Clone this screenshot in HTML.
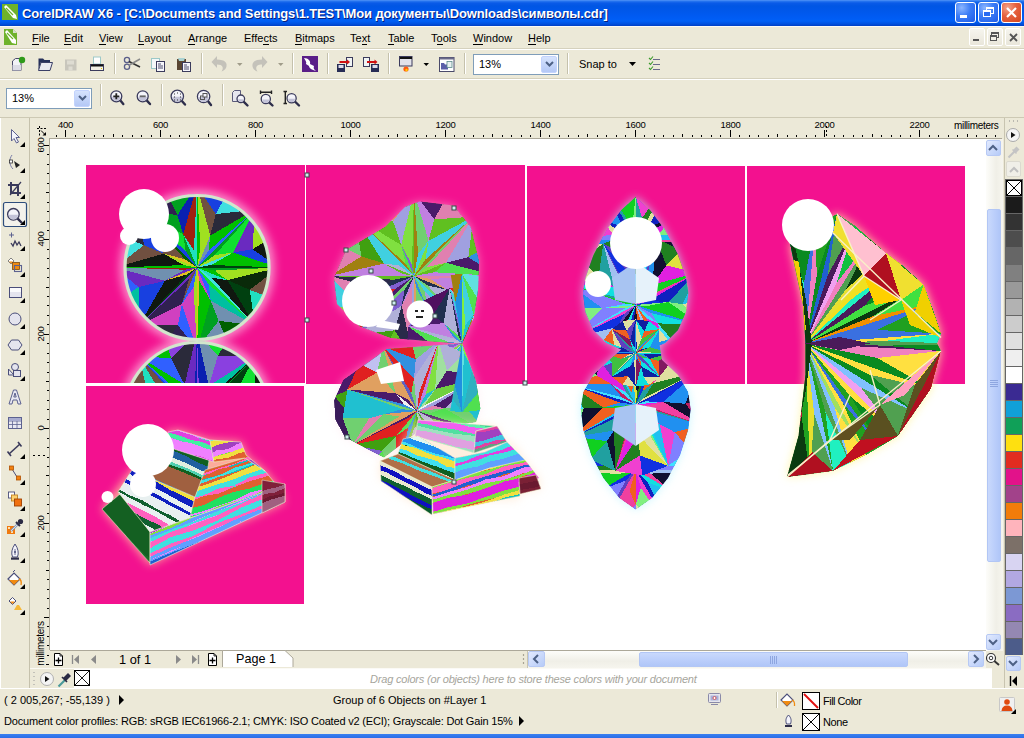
<!DOCTYPE html><html><head><meta charset="utf-8"><style>
html,body{margin:0;padding:0}
body{width:1024px;height:738px;overflow:hidden;position:relative;background:#ece9d8;font-family:"Liberation Sans", sans-serif;font-size:11px;color:#000}
div{box-sizing:border-box}
u{text-decoration:none;border-bottom:1px solid #000}
</style></head><body><div style="position:absolute;left:0px;top:0px;width:1024px;height:26px;background:linear-gradient(#5a9af8 0px,#2a78f0 1px,#0a5be8 3px,#0056e4 6px,#0058ec 12px,#005cf4 18px,#0060f6 21px,#0050de 24px,#003fc4 26px)"></div><svg style="position:absolute;left:2px;top:4px" width="16" height="16" viewBox="0 0 16 16">
<rect x="0" y="0" width="16" height="16" fill="#6fb22b"/>
<path d="M2 3 L4 1 L14 11 L15 15 L11 14 Z" fill="#fff"/>
<path d="M4 4 L11 11" stroke="#6fb22b" stroke-width="1.2"/>
</svg><div style="position:absolute;left:22px;top:6px;white-space:nowrap;font-weight:bold;font-size:13px;color:#fff;letter-spacing:-0.12px;text-shadow:1px 1px 0 #0a1e78;line-height:16px">CorelDRAW X6 - [C:\Documents and Settings\1.TEST\Мои документы\Downloads\символы.cdr]</div><div style="position:absolute;left:955px;top:2px;width:21px;height:21px;border:1px solid #fff;border-radius:3px;background:radial-gradient(circle at 30% 25%,#8cb6ff 0,#3b7cf6 45%,#1f5be8 100%)"></div><div style="position:absolute;left:960px;top:15px;width:7px;height:3px;background:#fff"></div><div style="position:absolute;left:978px;top:2px;width:21px;height:21px;border:1px solid #fff;border-radius:3px;background:radial-gradient(circle at 30% 25%,#8cb6ff 0,#3b7cf6 45%,#1f5be8 100%)"></div><div style="position:absolute;left:986px;top:7px;width:8px;height:7px;border:1px solid #fff;border-top-width:2px"></div><div style="position:absolute;left:983px;top:10px;width:8px;height:7px;border:1px solid #fff;border-top-width:2px;background:#2a6cf2"></div><div style="position:absolute;left:1001px;top:2px;width:21px;height:21px;border:1px solid #fff;border-radius:3px;background:radial-gradient(circle at 30% 25%,#f4a38a 0,#e5603e 45%,#d4471f 100%)"></div><svg style="position:absolute;left:1005px;top:6px" width="13" height="13"><path d="M2 2L11 11M11 2L2 11" stroke="#fff" stroke-width="2.2"/></svg><div style="position:absolute;left:0px;top:26px;width:1024px;height:1px;background:#fbfaf5"></div><svg style="position:absolute;left:4px;top:29px" width="13" height="16" viewBox="0 0 13 16">
<path d="M0 0H9L13 4V16H0Z" fill="#6fb22b"/><path d="M9 0V4H13" fill="#d6dfcc"/>
<path d="M1 3L3 1L12 11L12 15L8 14Z" fill="#fff"/><path d="M3 4L9 10" stroke="#6fb22b" stroke-width="1.1"/>
</svg><div style="position:absolute;left:32px;top:32px;white-space:nowrap;font-size:11px;line-height:13px"><u>F</u>ile</div><div style="position:absolute;left:64px;top:32px;white-space:nowrap;font-size:11px;line-height:13px"><u>E</u>dit</div><div style="position:absolute;left:99px;top:32px;white-space:nowrap;font-size:11px;line-height:13px"><u>V</u>iew</div><div style="position:absolute;left:138px;top:32px;white-space:nowrap;font-size:11px;line-height:13px"><u>L</u>ayout</div><div style="position:absolute;left:188px;top:32px;white-space:nowrap;font-size:11px;line-height:13px"><u>A</u>rrange</div><div style="position:absolute;left:244px;top:32px;white-space:nowrap;font-size:11px;line-height:13px">Effe<u>c</u>ts</div><div style="position:absolute;left:295px;top:32px;white-space:nowrap;font-size:11px;line-height:13px"><u>B</u>itmaps</div><div style="position:absolute;left:350px;top:32px;white-space:nowrap;font-size:11px;line-height:13px">Te<u>x</u>t</div><div style="position:absolute;left:388px;top:32px;white-space:nowrap;font-size:11px;line-height:13px"><u>T</u>able</div><div style="position:absolute;left:431px;top:32px;white-space:nowrap;font-size:11px;line-height:13px">T<u>o</u>ols</div><div style="position:absolute;left:473px;top:32px;white-space:nowrap;font-size:11px;line-height:13px"><u>W</u>indow</div><div style="position:absolute;left:528px;top:32px;white-space:nowrap;font-size:11px;line-height:13px"><u>H</u>elp</div><div style="position:absolute;left:969px;top:28px;width:16px;height:18px;border:1px solid #fff;border-radius:2px;background:linear-gradient(#f6f5ee,#e9e6da)"></div><div style="position:absolute;left:987px;top:28px;width:16px;height:18px;border:1px solid #fff;border-radius:2px;background:linear-gradient(#f6f5ee,#e9e6da)"></div><div style="position:absolute;left:1005px;top:28px;width:16px;height:18px;border:1px solid #fff;border-radius:2px;background:linear-gradient(#f6f5ee,#e9e6da)"></div><div style="position:absolute;left:973px;top:39px;width:6px;height:2px;background:#555"></div><div style="position:absolute;left:991px;top:32px;width:8px;height:6px;border:1px solid #555;border-top-width:2px"></div><div style="position:absolute;left:990px;top:35px;width:7px;height:6px;border:1px solid #555;border-top-width:2px;background:#efede4"></div><svg style="position:absolute;left:1009px;top:33px" width="9" height="9"><path d="M1 1L8 8M8 1L1 8" stroke="#555" stroke-width="1.8"/></svg><div style="position:absolute;left:0px;top:48px;width:1024px;height:1px;background:#d5d1bd"></div><div style="position:absolute;left:0px;top:49px;width:1024px;height:1px;background:#fff"></div><div style="position:absolute;left:114px;top:53px;width:1px;height:21px;background:#c5c1ac"></div><div style="position:absolute;left:115px;top:53px;width:1px;height:21px;background:#fff"></div><div style="position:absolute;left:201px;top:53px;width:1px;height:21px;background:#c5c1ac"></div><div style="position:absolute;left:202px;top:53px;width:1px;height:21px;background:#fff"></div><div style="position:absolute;left:292px;top:53px;width:1px;height:21px;background:#c5c1ac"></div><div style="position:absolute;left:293px;top:53px;width:1px;height:21px;background:#fff"></div><div style="position:absolute;left:327px;top:53px;width:1px;height:21px;background:#c5c1ac"></div><div style="position:absolute;left:328px;top:53px;width:1px;height:21px;background:#fff"></div><div style="position:absolute;left:388px;top:53px;width:1px;height:21px;background:#c5c1ac"></div><div style="position:absolute;left:389px;top:53px;width:1px;height:21px;background:#fff"></div><div style="position:absolute;left:464px;top:53px;width:1px;height:21px;background:#c5c1ac"></div><div style="position:absolute;left:465px;top:53px;width:1px;height:21px;background:#fff"></div><div style="position:absolute;left:567px;top:53px;width:1px;height:21px;background:#c5c1ac"></div><div style="position:absolute;left:568px;top:53px;width:1px;height:21px;background:#fff"></div><div style="position:absolute;left:0px;top:78px;width:1024px;height:1px;background:#d5d1bd"></div><div style="position:absolute;left:0px;top:79px;width:1024px;height:1px;background:#fff"></div><div style="position:absolute;left:100px;top:84px;width:1px;height:22px;background:#c5c1ac"></div><div style="position:absolute;left:101px;top:84px;width:1px;height:22px;background:#fff"></div><div style="position:absolute;left:161px;top:84px;width:1px;height:22px;background:#c5c1ac"></div><div style="position:absolute;left:162px;top:84px;width:1px;height:22px;background:#fff"></div><div style="position:absolute;left:222px;top:84px;width:1px;height:22px;background:#c5c1ac"></div><div style="position:absolute;left:223px;top:84px;width:1px;height:22px;background:#fff"></div><div style="position:absolute;left:0px;top:117px;width:1024px;height:1px;background:#cdc9b4"></div><div style="position:absolute;left:473px;top:54px;width:86px;height:21px;background:#fff;border:1px solid #7f9db9"></div><div style="position:absolute;left:541px;top:56px;width:16px;height:17px;border-radius:2px;background:linear-gradient(#d6e3fd,#b4c8f6);border:1px solid #c3d3fd"></div><svg style="position:absolute;left:545px;top:61px" width="9" height="6"><path d="M1 1L4.5 4.5L8 1" stroke="#4d6185" stroke-width="2" fill="none"/></svg><div style="position:absolute;left:479px;top:58px;white-space:nowrap;font-size:11px;line-height:13px">13%</div><div style="position:absolute;left:6px;top:88px;width:86px;height:21px;background:#fff;border:1px solid #7f9db9"></div><div style="position:absolute;left:74px;top:90px;width:16px;height:17px;border-radius:2px;background:linear-gradient(#d6e3fd,#b4c8f6);border:1px solid #c3d3fd"></div><svg style="position:absolute;left:78px;top:95px" width="9" height="6"><path d="M1 1L4.5 4.5L8 1" stroke="#4d6185" stroke-width="2" fill="none"/></svg><div style="position:absolute;left:12px;top:92px;white-space:nowrap;font-size:11px;line-height:13px">13%</div><div style="position:absolute;left:579px;top:58px;white-space:nowrap;font-size:11px;line-height:13px">Snap to</div><svg style="position:absolute;left:629px;top:62px" width="7" height="4"><path d="M0 0H7L3.5 4Z" fill="#000"/></svg><div style="position:absolute;left:0px;top:118px;width:1px;height:570px;background:#fff"></div><div style="position:absolute;left:29px;top:118px;width:1px;height:570px;background:#c5c1ac"></div><div style="position:absolute;left:50px;top:138px;width:952px;height:1px;background:#aca899"></div><div style="position:absolute;left:49px;top:138px;width:1px;height:512px;background:#aca899"></div><div style="position:absolute;left:50px;top:139px;width:936px;height:512px;background:#fff"></div><div style="position:absolute;left:45px;top:120px;white-space:nowrap;width:41px;text-align:center;font-size:9.5px;line-height:10px;letter-spacing:-0.3px">400</div><div style="position:absolute;left:140px;top:120px;white-space:nowrap;width:41px;text-align:center;font-size:9.5px;line-height:10px;letter-spacing:-0.3px">600</div><div style="position:absolute;left:235px;top:120px;white-space:nowrap;width:41px;text-align:center;font-size:9.5px;line-height:10px;letter-spacing:-0.3px">800</div><div style="position:absolute;left:330px;top:120px;white-space:nowrap;width:41px;text-align:center;font-size:9.5px;line-height:10px;letter-spacing:-0.3px">1000</div><div style="position:absolute;left:425px;top:120px;white-space:nowrap;width:41px;text-align:center;font-size:9.5px;line-height:10px;letter-spacing:-0.3px">1200</div><div style="position:absolute;left:520px;top:120px;white-space:nowrap;width:41px;text-align:center;font-size:9.5px;line-height:10px;letter-spacing:-0.3px">1400</div><div style="position:absolute;left:615px;top:120px;white-space:nowrap;width:41px;text-align:center;font-size:9.5px;line-height:10px;letter-spacing:-0.3px">1600</div><div style="position:absolute;left:710px;top:120px;white-space:nowrap;width:41px;text-align:center;font-size:9.5px;line-height:10px;letter-spacing:-0.3px">1800</div><div style="position:absolute;left:804px;top:120px;white-space:nowrap;width:41px;text-align:center;font-size:9.5px;line-height:10px;letter-spacing:-0.3px">2000</div><div style="position:absolute;left:899px;top:120px;white-space:nowrap;width:41px;text-align:center;font-size:9.5px;line-height:10px;letter-spacing:-0.3px">2200</div><div style="position:absolute;left:954px;top:120px;white-space:nowrap;font-size:10px;line-height:11px;letter-spacing:-0.3px">millimeters</div><div style="position:absolute;left:35px;top:125px;width:10px;height:41px;"><div style="position:absolute;left:-15px;top:15px;width:41px;height:10px;text-align:center;font-size:9.5px;line-height:10px;letter-spacing:-0.3px;transform:rotate(-90deg)">600</div></div><div style="position:absolute;left:35px;top:219px;width:10px;height:41px;"><div style="position:absolute;left:-15px;top:15px;width:41px;height:10px;text-align:center;font-size:9.5px;line-height:10px;letter-spacing:-0.3px;transform:rotate(-90deg)">400</div></div><div style="position:absolute;left:35px;top:314px;width:10px;height:41px;"><div style="position:absolute;left:-15px;top:15px;width:41px;height:10px;text-align:center;font-size:9.5px;line-height:10px;letter-spacing:-0.3px;transform:rotate(-90deg)">200</div></div><div style="position:absolute;left:35px;top:408px;width:10px;height:41px;"><div style="position:absolute;left:-15px;top:15px;width:41px;height:10px;text-align:center;font-size:9.5px;line-height:10px;letter-spacing:-0.3px;transform:rotate(-90deg)">0</div></div><div style="position:absolute;left:35px;top:503px;width:10px;height:41px;"><div style="position:absolute;left:-15px;top:15px;width:41px;height:10px;text-align:center;font-size:9.5px;line-height:10px;letter-spacing:-0.3px;transform:rotate(-90deg)">200</div></div><div style="position:absolute;left:35px;top:620px;width:10px;height:46px;"><div style="position:absolute;left:-18px;top:18px;width:46px;height:11px;text-align:center;font-size:10px;line-height:11px;letter-spacing:-0.3px;transform:rotate(-90deg)">millimeters</div></div><div style="position:absolute;left:986px;top:139px;width:17px;height:512px;background:linear-gradient(90deg,#fdfdfa,#f0efe7 60%,#f6f5ee)"></div><div style="position:absolute;left:986px;top:140px;width:15px;height:16px;border-radius:2px;border:1px solid #b7c9f4;background:linear-gradient(135deg,#e2eafe,#b6cbf8)"></div><svg style="position:absolute;left:987px;top:144px" width="12" height="8"><path d="M2 6 L6 2 L10 6" stroke="#4d6185" stroke-width="2" fill="none"/></svg><div style="position:absolute;left:986px;top:634px;width:15px;height:16px;border-radius:2px;border:1px solid #b7c9f4;background:linear-gradient(135deg,#e2eafe,#b6cbf8)"></div><svg style="position:absolute;left:987px;top:638px" width="12" height="8"><path d="M2 2 L6 6 L10 2" stroke="#4d6185" stroke-width="2" fill="none"/></svg><div style="position:absolute;left:987px;top:209px;width:14px;height:353px;border-radius:2px;border:1px solid #b2c6f5;background:linear-gradient(90deg,#c9d9fc,#bccffb 50%,#b0c6f8)"></div><svg style="position:absolute;left:990px;top:380px" width="8" height="8"><path d="M0 0.5H8M0 2.5H8M0 4.5H8M0 6.5H8" stroke="#8ea6e0" stroke-width="1"/></svg><div style="position:absolute;left:1003px;top:118px;width:21px;height:570px;background:#ece9d8"></div><div style="position:absolute;left:1004px;top:118px;width:1px;height:570px;background:#c8c4b0"></div><div style="position:absolute;left:1005px;top:179px;width:18px;height:476px;background:#666"></div><div style="position:absolute;left:1006px;top:180px;width:16px;height:16px;background:#fff;border:1px solid #000"></div><svg style="position:absolute;left:1006px;top:180px" width="16" height="16"><path d="M1 1L15 15M15 1L1 15" stroke="#000" stroke-width="1"/></svg><div style="position:absolute;left:1006px;top:197px;width:16px;height:16px;background:#1b1b1b"></div><div style="position:absolute;left:1006px;top:214px;width:16px;height:16px;background:#333333"></div><div style="position:absolute;left:1006px;top:231px;width:16px;height:16px;background:#4d4d4d"></div><div style="position:absolute;left:1006px;top:248px;width:16px;height:16px;background:#666666"></div><div style="position:absolute;left:1006px;top:265px;width:16px;height:16px;background:#808080"></div><div style="position:absolute;left:1006px;top:282px;width:16px;height:16px;background:#999999"></div><div style="position:absolute;left:1006px;top:299px;width:16px;height:16px;background:#b2b2b2"></div><div style="position:absolute;left:1006px;top:316px;width:16px;height:16px;background:#cccccc"></div><div style="position:absolute;left:1006px;top:333px;width:16px;height:16px;background:#e0e0e0"></div><div style="position:absolute;left:1006px;top:350px;width:16px;height:16px;background:#efefef"></div><div style="position:absolute;left:1006px;top:367px;width:16px;height:16px;background:#ffffff"></div><div style="position:absolute;left:1006px;top:384px;width:16px;height:16px;background:#3a2a92"></div><div style="position:absolute;left:1006px;top:401px;width:16px;height:16px;background:#10a0d8"></div><div style="position:absolute;left:1006px;top:418px;width:16px;height:16px;background:#10a058"></div><div style="position:absolute;left:1006px;top:435px;width:16px;height:16px;background:#fee010"></div><div style="position:absolute;left:1006px;top:452px;width:16px;height:16px;background:#e22c20"></div><div style="position:absolute;left:1006px;top:469px;width:16px;height:16px;background:#e2128a"></div><div style="position:absolute;left:1006px;top:486px;width:16px;height:16px;background:#a2428a"></div><div style="position:absolute;left:1006px;top:503px;width:16px;height:16px;background:#f27c0a"></div><div style="position:absolute;left:1006px;top:520px;width:16px;height:16px;background:#ffb4bc"></div><div style="position:absolute;left:1006px;top:537px;width:16px;height:16px;background:#7c7068"></div><div style="position:absolute;left:1006px;top:554px;width:16px;height:16px;background:#d8d4f2"></div><div style="position:absolute;left:1006px;top:571px;width:16px;height:16px;background:#b2a8e2"></div><div style="position:absolute;left:1006px;top:588px;width:16px;height:16px;background:#7c98d4"></div><div style="position:absolute;left:1006px;top:605px;width:16px;height:16px;background:#8a6cc2"></div><div style="position:absolute;left:1006px;top:622px;width:16px;height:16px;background:#9488b2"></div><div style="position:absolute;left:1006px;top:639px;width:16px;height:16px;background:#4c5c8a"></div><div style="position:absolute;left:1006px;top:161px;width:15px;height:16px;border-radius:2px;border:1px solid #dcdad0;background:#f0efe8"></div><svg style="position:absolute;left:1008px;top:166px" width="12" height="8"><path d="M2 6 L6 2 L10 6" stroke="#c0c0c0" stroke-width="2" fill="none"/></svg><div style="position:absolute;left:1006px;top:656px;width:15px;height:15px;border-radius:2px;border:1px solid #b7c9f4;background:linear-gradient(135deg,#e2eafe,#b6cbf8)"></div><svg style="position:absolute;left:1007px;top:659px" width="12" height="8"><path d="M2 2 L6 6 L10 2" stroke="#4d6185" stroke-width="2" fill="none"/></svg><svg style="position:absolute;left:1008px;top:120px" width="12" height="3"><path d="M1 1h1M5 1h1M9 1h1" stroke="#888" stroke-width="1"/></svg><svg style="position:absolute;left:1005px;top:128px" width="16" height="14"><circle cx="8" cy="7" r="6.5" fill="#f4f4f4" stroke="#aaa"/><path d="M6 4 L10.5 7 L6 10Z" fill="#111"/></svg><svg style="position:absolute;left:1007px;top:145px" width="14" height="14"><path d="M1.5 12.5 L8 6" stroke="#c4c4c4" stroke-width="2.2"/><path d="M6 5 L9.5 1.5 L12.5 4.5 L9 8Z" fill="#c4c4c4"/><path d="M5.5 4.5 L9.5 8.5" stroke="#c4c4c4" stroke-width="1.5"/></svg><div style="position:absolute;left:50px;top:650px;width:936px;height:1px;background:#aca899"></div><div style="position:absolute;left:50px;top:651px;width:936px;height:17px;background:#ece9d8"></div><div style="position:absolute;left:30px;top:668px;width:973px;height:20px;background:#fff"></div><div style="position:absolute;left:30px;top:668px;width:973px;height:1px;background:#fbfaf5"></div><div style="position:absolute;left:30px;top:669px;width:44px;height:19px;background:#ece9d8"></div><div style="position:absolute;left:992px;top:668px;width:11px;height:20px;background:#ece9d8"></div><div style="position:absolute;left:0px;top:688px;width:1024px;height:1px;background:#fff"></div><div style="position:absolute;left:119px;top:652px;white-space:nowrap;font-size:12.8px;line-height:15px">1 of 1</div><svg style="position:absolute;left:222px;top:650px" width="72" height="17"><path d="M0.5 17 V0.5 H63 L71 8 V17" fill="#fff" stroke="#aca899"/></svg><div style="position:absolute;left:236px;top:652px;white-space:nowrap;font-size:12.6px;line-height:15px">Page 1</div><div style="position:absolute;left:528px;top:651px;width:458px;height:17px;background:linear-gradient(#fdfdfa,#f0efe7 60%,#f6f5ee)"></div><div style="position:absolute;left:527px;top:651px;width:1px;height:17px;background:#c8c4b0"></div><svg style="position:absolute;left:522px;top:652px" width="3" height="14"><path d="M1.5 2v2M1.5 6v2M1.5 10v2" stroke="#a8a494" stroke-width="1.2"/></svg><div style="position:absolute;left:528px;top:651px;width:17px;height:16px;border-radius:2px;border:1px solid #b7c9f4;background:linear-gradient(135deg,#e2eafe,#b6cbf8)"></div><svg style="position:absolute;left:532px;top:653px" width="8" height="12"><path d="M6 2 L2 6 L6 10" stroke="#4d6185" stroke-width="2" fill="none"/></svg><div style="position:absolute;left:968px;top:651px;width:16px;height:16px;border-radius:2px;border:1px solid #b7c9f4;background:linear-gradient(135deg,#e2eafe,#b6cbf8)"></div><svg style="position:absolute;left:972px;top:653px" width="8" height="12"><path d="M2 2 L6 6 L2 10" stroke="#4d6185" stroke-width="2" fill="none"/></svg><div style="position:absolute;left:639px;top:652px;width:269px;height:15px;border-radius:2px;border:1px solid #b2c6f5;background:linear-gradient(#c9d9fc,#bccffb 50%,#b0c6f8)"></div><svg style="position:absolute;left:770px;top:656px" width="8" height="8"><path d="M0.5 0V8M2.5 0V8M4.5 0V8M6.5 0V8" stroke="#8ea6e0" stroke-width="1"/></svg><div style="position:absolute;left:370px;top:673px;white-space:nowrap;font-style:italic;color:#a6a59c;font-size:11px;line-height:13px;letter-spacing:-0.19px">Drag colors (or objects) here to store these colors with your document</div><div style="position:absolute;left:4px;top:694px;white-space:nowrap;font-size:11px;line-height:13px">( 2 005,267; -55,139 )</div><svg style="position:absolute;left:119px;top:695px" width="6" height="10"><path d="M0 0L5 5L0 10Z" fill="#000"/></svg><div style="position:absolute;left:4px;top:715px;white-space:nowrap;font-size:11px;line-height:13px;letter-spacing:-0.185px">Document color profiles: RGB: sRGB IEC61966-2.1; CMYK: ISO Coated v2 (ECI); Grayscale: Dot Gain 15%</div><svg style="position:absolute;left:519px;top:716px" width="6" height="10"><path d="M0 0L5 5L0 10Z" fill="#000"/></svg><div style="position:absolute;left:333px;top:694px;white-space:nowrap;font-size:11px;line-height:13px">Group of 6 Objects on #Layer 1</div><div style="position:absolute;left:823px;top:695px;white-space:nowrap;font-size:11px;line-height:13px;letter-spacing:-0.5px">Fill Color</div><div style="position:absolute;left:823px;top:716px;white-space:nowrap;font-size:11px;line-height:13px;letter-spacing:-0.4px">None</div><div style="position:absolute;left:802px;top:692px;width:18px;height:18px;background:#fff;border:1px solid #000"></div><svg style="position:absolute;left:802px;top:692px" width="18" height="18"><path d="M2 2L16 16" stroke="#e01010" stroke-width="2"/></svg><div style="position:absolute;left:802px;top:713px;width:18px;height:18px;background:#fff;border:1px solid #000"></div><svg style="position:absolute;left:802px;top:713px" width="18" height="18"><path d="M1 1L17 17M17 1L1 17" stroke="#000" stroke-width="1"/></svg><div style="position:absolute;left:776px;top:692px;width:1px;height:16px;background:#c5c1ac"></div><div style="position:absolute;left:777px;top:692px;width:1px;height:16px;background:#fff"></div><div style="position:absolute;left:0px;top:734px;width:1024px;height:4px;background:linear-gradient(#3a80f0,#2a6ee8)"></div><svg style="position:absolute;left:0;top:0" width="1024" height="738"><svg x="50" y="138" width="936" height="512" viewBox="50 138 936 512"><defs><filter id="gl" x="-30%" y="-30%" width="160%" height="160%"><feGaussianBlur stdDeviation="5"/></filter><filter id="gl2" x="-30%" y="-30%" width="160%" height="160%"><feGaussianBlur stdDeviation="4"/></filter><clipPath id="r1"><rect x="86" y="165" width="219" height="218"/></clipPath><clipPath id="c1"><path d="M124 267.5 A73 73 0 1 0 270 267.5 A73 73 0 1 0 124 267.5Z"/></clipPath><clipPath id="c1b"><path d="M124 414.5 A73 73 0 1 0 270 414.5 A73 73 0 1 0 124 414.5Z"/></clipPath><clipPath id="h1"><path d="M334.0 278.0 L346.0 250.0 L385.0 227.0 L405.0 207.0 L419.5 201.5 L453.6 205.6 L470.7 227.0 L479.0 261.0 L478.0 290.0 L473.5 318.0 L462.0 343.5 L440.0 342.0 L391.0 338.0 L360.0 326.5 L337.0 304.0Z"/></clipPath><clipPath id="h2"><path d="M462.0 343.5 L387.0 349.0 L343.4 380.0 L334.0 400.5 L335.2 419.5 L344.7 437.0 L367.8 449.3 L384.0 457.4 L420.0 430.0 L476.0 422.0 L480.3 408.6 L476.0 381.5Z"/></clipPath><clipPath id="h3"><path d="M445.0 240.0 L471.0 227.0 L479.0 261.0 L478.0 290.0 L473.5 318.0 L462.0 343.5ZM462.0 343.5 L476.0 381.5 L480.3 408.6 L476.0 425.0 L445.0 440.0Z"/></clipPath><clipPath id="d1"><path d="M635.7 197.0 L650.0 210.0 L665.0 230.0 L678.0 255.0 L686.0 278.0 L688.4 293.0 L686.0 312.0 L678.0 330.0 L665.0 343.0 L650.0 349.5 L621.4 349.5 L606.4 343.0 L593.4 330.0 L585.4 312.0 L583.0 293.0 L585.4 278.0 L593.4 255.0 L606.4 230.0 L621.4 210.0 L635.7 197.0Z"/></clipPath><clipPath id="d2"><path d="M650.0 349.5 L662.0 360.0 L678.0 375.0 L688.0 392.0 L690.6 409.0 L688.0 430.0 L680.0 455.0 L668.0 478.0 L652.0 498.0 L635.7 509.5 L635.7 509.5 L619.4 498.0 L603.4 478.0 L591.4 455.0 L583.4 430.0 L580.8 409.0 L583.4 392.0 L593.4 375.0 L609.4 360.0 L621.4 349.5Z"/></clipPath><clipPath id="d3"><path d="M635.7 197.0 L650.0 210.0 L665.0 230.0 L678.0 255.0 L686.0 278.0 L688.4 293.0 L686.0 312.0 L678.0 330.0 L665.0 343.0 L650.0 349.5 L621.4 349.5 L606.4 343.0 L593.4 330.0 L585.4 312.0 L583.0 293.0 L585.4 278.0 L593.4 255.0 L606.4 230.0 L621.4 210.0 L635.7 197.0 L662.0 360.0 L678.0 375.0 L688.0 392.0 L690.6 409.0 L688.0 430.0 L680.0 455.0 L668.0 478.0 L652.0 498.0 L635.7 509.5 L635.7 509.5 L619.4 498.0 L603.4 478.0 L591.4 455.0 L583.4 430.0 L580.8 409.0 L583.4 392.0 L593.4 375.0 L609.4 360.0 L621.4 349.5Z"/></clipPath><clipPath id="fanclip"><path d="M790.0 244.0 L837.0 213.8 L854.7 225.5 L886.0 253.0 L901.9 264.9 L923.5 284.5 L931.0 304.0 L941.0 333.6 L937.0 343.5 L941.0 351.0 L931.0 388.7 L898.0 436.0 L866.0 455.0 L833.0 471.0 L787.0 477.0 L798.5 435.7 L805.5 375.0 L805.5 343.5 L803.0 304.7 L796.0 272.0Z"/></clipPath><clipPath id="sf201"><path d="M102.0 509.0 L125.0 490.0 L150.0 532.0 L150.0 563.0Z"/></clipPath><clipPath id="sf202"><path d="M118.0 492.0 L132.0 470.0 L195.0 497.0 L190.0 518.0 L150.0 532.0Z"/></clipPath><clipPath id="sf203"><path d="M150.0 532.0 L190.0 518.0 L285.0 484.0 L285.0 502.0 L150.0 565.0Z"/></clipPath><clipPath id="sf204"><path d="M132.0 470.0 L168.0 440.0 L210.0 452.0 L205.0 490.0 L195.0 497.0Z"/></clipPath><clipPath id="sf205"><path d="M195.0 497.0 L205.0 470.0 L245.0 458.0 L265.0 471.0 L278.0 487.0 L190.0 518.0Z"/></clipPath><clipPath id="sf206"><path d="M168.0 432.0 L178.0 430.0 L210.0 440.0 L214.0 462.0 L168.0 447.0Z"/></clipPath><clipPath id="sf207"><path d="M210.0 440.0 L241.0 442.0 L246.0 455.0 L265.0 471.0 L245.0 458.0 L214.0 462.0Z"/></clipPath><clipPath id="sf208"><path d="M262.0 480.0 L285.0 484.0 L285.0 502.0 L262.0 513.0Z"/></clipPath><clipPath id="sf301"><path d="M418.0 420.0 L495.0 426.0 L476.0 431.0 L474.0 453.0 L415.0 436.0Z"/></clipPath><clipPath id="sf302"><path d="M476.0 431.0 L497.0 426.0 L507.0 442.0 L474.0 453.0Z"/></clipPath><clipPath id="sf303"><path d="M403.0 439.0 L418.0 436.0 L455.0 458.0 L455.0 480.0 L398.0 454.0Z"/></clipPath><clipPath id="sf304"><path d="M455.0 458.0 L485.0 452.0 L507.0 442.0 L525.0 460.0 L500.0 470.0 L490.0 468.0 L455.0 480.0Z"/></clipPath><clipPath id="sf305"><path d="M380.0 461.0 L398.0 454.0 L455.0 480.0 L432.0 487.0Z"/></clipPath><clipPath id="sf306"><path d="M380.0 461.0 L432.0 487.0 L432.0 515.0 L381.0 481.0Z"/></clipPath><clipPath id="sf307"><path d="M432.0 487.0 L455.0 480.0 L490.0 468.0 L525.0 460.0 L539.0 478.0 L519.0 482.0 L520.0 496.0 L433.0 514.0Z"/></clipPath><clipPath id="sf308"><path d="M519.0 478.0 L536.0 475.0 L541.0 489.0 L520.0 494.0Z"/></clipPath></defs><rect x="86" y="165" width="219" height="218" fill="#f3118f"/><rect x="306" y="165" width="219" height="219" fill="#f3118f"/><rect x="527" y="166" width="218" height="218" fill="#f3118f"/><rect x="747" y="166" width="218" height="218" fill="#f3118f"/><rect x="86" y="386" width="218" height="218" fill="#f3118f"/><g clip-path="url(#r1)"><circle cx="197" cy="267.5" r="77" fill="#fff" opacity="0.55" filter="url(#gl)"/><circle cx="197" cy="414.5" r="77" fill="#fff" opacity="0.55" filter="url(#gl)"/><g clip-path="url(#c1)" shape-rendering="crispEdges"><path d="M124 267.5 A73 73 0 1 0 270 267.5 A73 73 0 1 0 124 267.5Z" fill="#0a3a0a"/><polygon points="197.0,267.5 278.8,267.5 214.3,270.6" fill="#00a020"/><polygon points="214.3,270.6 278.8,267.5 227.4,280.1" fill="#a0e020"/><polygon points="197.0,267.5 214.3,270.6 227.4,280.1" fill="#00c000"/><polygon points="197.0,267.5 227.4,280.1 211.6,277.7" fill="#20e0c0"/><polygon points="211.6,277.7 227.4,280.1 254.8,325.3" fill="#101810"/><polygon points="197.0,267.5 211.6,277.7 254.8,325.3" fill="#40e0e0"/><polygon points="278.8,267.5 227.4,280.1 249.7,289.8" fill="#0a2a0a"/><polygon points="227.4,280.1 254.8,325.3 249.7,289.8" fill="#004010"/><polygon points="278.8,267.5 249.7,289.8 274.6,299.6" fill="#705040"/><polygon points="249.7,289.8 254.8,325.3 274.6,299.6" fill="#20e0c0"/><polygon points="197.0,267.5 254.8,325.3 208.6,284.2" fill="#10e030"/><polygon points="208.6,284.2 254.8,325.3 210.7,300.6" fill="#00c0a0"/><polygon points="197.0,267.5 208.6,284.2 210.7,300.6" fill="#3060ff"/><polygon points="197.0,267.5 210.7,300.6 199.4,280.8" fill="#d040c0"/><polygon points="199.4,280.8 210.7,300.6 197.0,349.3" fill="#00c000"/><polygon points="197.0,267.5 199.4,280.8 197.0,349.3" fill="#e0c020"/><polygon points="254.8,325.3 210.7,300.6 218.6,320.8" fill="#7090b0"/><polygon points="210.7,300.6 197.0,349.3 218.6,320.8" fill="#00a020"/><polygon points="254.8,325.3 218.6,320.8 229.1,345.1" fill="#006000"/><polygon points="218.6,320.8 197.0,349.3 229.1,345.1" fill="#7090b0"/><polygon points="197.0,267.5 197.0,349.3 193.5,287.2" fill="#a0e020"/><polygon points="193.5,287.2 197.0,349.3 181.8,304.2" fill="#d040c0"/><polygon points="197.0,267.5 193.5,287.2 181.8,304.2" fill="#3060ff"/><polygon points="197.0,267.5 181.8,304.2 189.1,278.9" fill="#705040"/><polygon points="189.1,278.9 181.8,304.2 139.2,325.3" fill="#302050"/><polygon points="197.0,267.5 189.1,278.9 139.2,325.3" fill="#6a2ac0"/><polygon points="197.0,349.3 181.8,304.2 177.9,325.3" fill="#3060ff"/><polygon points="181.8,304.2 139.2,325.3 177.9,325.3" fill="#d040c0"/><polygon points="197.0,349.3 177.9,325.3 164.9,345.1" fill="#302050"/><polygon points="177.9,325.3 139.2,325.3 164.9,345.1" fill="#2a2a3a"/><polygon points="197.0,267.5 139.2,325.3 187.1,274.4" fill="#004010"/><polygon points="187.1,274.4 139.2,325.3 164.8,280.8" fill="#101810"/><polygon points="197.0,267.5 187.1,274.4 164.8,280.8" fill="#e0c020"/><polygon points="197.0,267.5 164.8,280.8 184.8,269.7" fill="#6a2ac0"/><polygon points="184.8,269.7 164.8,280.8 115.2,267.5" fill="#7090b0"/><polygon points="197.0,267.5 184.8,269.7 115.2,267.5" fill="#a02010"/><polygon points="139.2,325.3 164.8,280.8 138.5,287.1" fill="#1840e0"/><polygon points="164.8,280.8 115.2,267.5 138.5,287.1" fill="#6a2ac0"/><polygon points="139.2,325.3 138.5,287.1 119.4,299.6" fill="#00c0a0"/><polygon points="138.5,287.1 115.2,267.5 119.4,299.6" fill="#3060ff"/><polygon points="197.0,267.5 115.2,267.5 183.7,265.1" fill="#00c000"/><polygon points="183.7,265.1 115.2,267.5 163.6,253.7" fill="#101810"/><polygon points="197.0,267.5 183.7,265.1 163.6,253.7" fill="#a0e020"/><polygon points="197.0,267.5 163.6,253.7 185.0,259.2" fill="#e0c020"/><polygon points="185.0,259.2 163.6,253.7 139.2,209.7" fill="#705040"/><polygon points="197.0,267.5 185.0,259.2 139.2,209.7" fill="#006000"/><polygon points="115.2,267.5 163.6,253.7 143.9,245.2" fill="#705040"/><polygon points="163.6,253.7 139.2,209.7 143.9,245.2" fill="#1840e0"/><polygon points="115.2,267.5 143.9,245.2 119.4,235.4" fill="#40e0e0"/><polygon points="143.9,245.2 139.2,209.7 119.4,235.4" fill="#2a2a3a"/><polygon points="197.0,267.5 139.2,209.7 185.6,251.0" fill="#1840e0"/><polygon points="185.6,251.0 139.2,209.7 183.2,234.2" fill="#10e030"/><polygon points="197.0,267.5 185.6,251.0 183.2,234.2" fill="#00a020"/><polygon points="197.0,267.5 183.2,234.2 193.9,250.5" fill="#20e0c0"/><polygon points="193.9,250.5 183.2,234.2 197.0,185.7" fill="#a02010"/><polygon points="197.0,267.5 193.9,250.5 197.0,185.7" fill="#20e0c0"/><polygon points="139.2,209.7 183.2,234.2 177.4,215.2" fill="#00a020"/><polygon points="183.2,234.2 197.0,185.7 177.4,215.2" fill="#0a20b0"/><polygon points="139.2,209.7 177.4,215.2 164.9,189.9" fill="#302050"/><polygon points="177.4,215.2 197.0,185.7 164.9,189.9" fill="#00a020"/><polygon points="197.0,267.5 197.0,185.7 200.4,248.4" fill="#00c000"/><polygon points="200.4,248.4 197.0,185.7 210.2,235.6" fill="#a0e020"/><polygon points="197.0,267.5 200.4,248.4 210.2,235.6" fill="#a0e020"/><polygon points="197.0,267.5 210.2,235.6 208.7,250.7" fill="#7090b0"/><polygon points="208.7,250.7 210.2,235.6 254.8,209.7" fill="#00c000"/><polygon points="197.0,267.5 208.7,250.7 254.8,209.7" fill="#3060ff"/><polygon points="197.0,185.7 210.2,235.6 215.7,214.1" fill="#705040"/><polygon points="210.2,235.6 254.8,209.7 215.7,214.1" fill="#2a2a3a"/><polygon points="197.0,185.7 215.7,214.1 229.1,189.9" fill="#1840e0"/><polygon points="215.7,214.1 254.8,209.7 229.1,189.9" fill="#40e0e0"/><polygon points="197.0,267.5 254.8,209.7 215.0,255.0" fill="#00a020"/><polygon points="215.0,255.0 254.8,209.7 233.0,252.6" fill="#10e030"/><polygon points="197.0,267.5 215.0,255.0 233.0,252.6" fill="#a0e020"/><polygon points="197.0,267.5 233.0,252.6 211.1,265.0" fill="#40e0e0"/><polygon points="211.1,265.0 233.0,252.6 278.8,267.5" fill="#00c000"/><polygon points="197.0,267.5 211.1,265.0 278.8,267.5" fill="#004010"/><polygon points="254.8,209.7 233.0,252.6 252.6,249.3" fill="#6a2ac0"/><polygon points="233.0,252.6 278.8,267.5 252.6,249.3" fill="#1840e0"/><polygon points="254.8,209.7 252.6,249.3 274.6,235.4" fill="#a0e020"/><polygon points="252.6,249.3 278.8,267.5 274.6,235.4" fill="#101810"/></g><g clip-path="url(#c1b)" shape-rendering="crispEdges"><path d="M124 414.5 A73 73 0 1 0 270 414.5 A73 73 0 1 0 124 414.5Z" fill="#0a3a0a"/><polygon points="197.0,414.5 278.8,414.5 217.9,418.3" fill="#00c0a0"/><polygon points="217.9,418.3 278.8,414.5 230.8,428.5" fill="#00c000"/><polygon points="197.0,414.5 217.9,418.3 230.8,428.5" fill="#8a40e0"/><polygon points="197.0,414.5 230.8,428.5 212.6,425.4" fill="#7090b0"/><polygon points="212.6,425.4 230.8,428.5 254.8,472.3" fill="#0a2a0a"/><polygon points="197.0,414.5 212.6,425.4 254.8,472.3" fill="#a02010"/><polygon points="278.8,414.5 230.8,428.5 252.4,440.0" fill="#00c000"/><polygon points="230.8,428.5 254.8,472.3 252.4,440.0" fill="#006000"/><polygon points="278.8,414.5 252.4,440.0 274.6,446.6" fill="#10e030"/><polygon points="252.4,440.0 254.8,472.3 274.6,446.6" fill="#0a20b0"/><polygon points="197.0,414.5 254.8,472.3 206.8,428.7" fill="#004010"/><polygon points="206.8,428.7 254.8,472.3 210.4,446.9" fill="#6a2ac0"/><polygon points="197.0,414.5 206.8,428.7 210.4,446.9" fill="#101810"/><polygon points="197.0,414.5 210.4,446.9 199.0,425.4" fill="#006000"/><polygon points="199.0,425.4 210.4,446.9 197.0,496.3" fill="#7090b0"/><polygon points="197.0,414.5 199.0,425.4 197.0,496.3" fill="#3060ff"/><polygon points="254.8,472.3 210.4,446.9 221.7,467.9" fill="#006000"/><polygon points="210.4,446.9 197.0,496.3 221.7,467.9" fill="#7090b0"/><polygon points="254.8,472.3 221.7,467.9 229.1,492.1" fill="#302050"/><polygon points="221.7,467.9 197.0,496.3 229.1,492.1" fill="#00a020"/><polygon points="197.0,414.5 197.0,496.3 195.1,425.3" fill="#004010"/><polygon points="195.1,425.3 197.0,496.3 184.8,444.0" fill="#7090b0"/><polygon points="197.0,414.5 195.1,425.3 184.8,444.0" fill="#004010"/><polygon points="197.0,414.5 184.8,444.0 185.3,431.3" fill="#006000"/><polygon points="185.3,431.3 184.8,444.0 139.2,472.3" fill="#006000"/><polygon points="197.0,414.5 185.3,431.3 139.2,472.3" fill="#1840e0"/><polygon points="197.0,496.3 184.8,444.0 174.9,465.0" fill="#1840e0"/><polygon points="184.8,444.0 139.2,472.3 174.9,465.0" fill="#004010"/><polygon points="197.0,496.3 174.9,465.0 164.9,492.1" fill="#40e0e0"/><polygon points="174.9,465.0 139.2,472.3 164.9,492.1" fill="#e0c020"/><polygon points="197.0,414.5 139.2,472.3 186.2,422.0" fill="#3060ff"/><polygon points="186.2,422.0 139.2,472.3 163.2,428.5" fill="#1840e0"/><polygon points="197.0,414.5 186.2,422.0 163.2,428.5" fill="#00c000"/><polygon points="197.0,414.5 163.2,428.5 175.8,418.3" fill="#0a20b0"/><polygon points="175.8,418.3 163.2,428.5 115.2,414.5" fill="#6a2ac0"/><polygon points="197.0,414.5 175.8,418.3 115.2,414.5" fill="#006000"/><polygon points="139.2,472.3 163.2,428.5 140.5,441.3" fill="#10e030"/><polygon points="163.2,428.5 115.2,414.5 140.5,441.3" fill="#101810"/><polygon points="139.2,472.3 140.5,441.3 119.4,446.6" fill="#00a020"/><polygon points="140.5,441.3 115.2,414.5 119.4,446.6" fill="#1840e0"/><polygon points="197.0,414.5 115.2,414.5 178.9,411.2" fill="#1840e0"/><polygon points="178.9,411.2 115.2,414.5 166.0,401.7" fill="#0a20b0"/><polygon points="197.0,414.5 178.9,411.2 166.0,401.7" fill="#1840e0"/><polygon points="197.0,414.5 166.0,401.7 185.0,406.1" fill="#20e0c0"/><polygon points="185.0,406.1 166.0,401.7 139.2,356.7" fill="#705040"/><polygon points="197.0,414.5 185.0,406.1 139.2,356.7" fill="#1840e0"/><polygon points="115.2,414.5 166.0,401.7 147.4,393.0" fill="#006000"/><polygon points="166.0,401.7 139.2,356.7 147.4,393.0" fill="#20e0c0"/><polygon points="115.2,414.5 147.4,393.0 119.4,382.4" fill="#20e0c0"/><polygon points="147.4,393.0 139.2,356.7 119.4,382.4" fill="#705040"/><polygon points="197.0,414.5 139.2,356.7 184.8,397.0" fill="#3060ff"/><polygon points="184.8,397.0 139.2,356.7 184.6,384.6" fill="#00c000"/><polygon points="197.0,414.5 184.8,397.0 184.6,384.6" fill="#40e0e0"/><polygon points="197.0,414.5 184.6,384.6 194.4,399.9" fill="#302050"/><polygon points="194.4,399.9 184.6,384.6 197.0,332.7" fill="#6a2ac0"/><polygon points="197.0,414.5 194.4,399.9 197.0,332.7" fill="#0a20b0"/><polygon points="139.2,356.7 184.6,384.6 171.0,358.0" fill="#3060ff"/><polygon points="184.6,384.6 197.0,332.7 171.0,358.0" fill="#2a2a3a"/><polygon points="139.2,356.7 171.0,358.0 164.9,336.9" fill="#00c000"/><polygon points="171.0,358.0 197.0,332.7 164.9,336.9" fill="#8a40e0"/><polygon points="197.0,414.5 197.0,332.7 199.3,401.6" fill="#8a40e0"/><polygon points="199.3,401.6 197.0,332.7 208.9,385.8" fill="#0a20b0"/><polygon points="197.0,414.5 199.3,401.6 208.9,385.8" fill="#00c0a0"/><polygon points="197.0,414.5 208.9,385.8 208.0,398.7" fill="#0a20b0"/><polygon points="208.0,398.7 208.9,385.8 254.8,356.7" fill="#00c0a0"/><polygon points="197.0,414.5 208.0,398.7 254.8,356.7" fill="#101810"/><polygon points="197.0,332.7 208.9,385.8 217.9,355.7" fill="#7090b0"/><polygon points="208.9,385.8 254.8,356.7 217.9,355.7" fill="#8a40e0"/><polygon points="197.0,332.7 217.9,355.7 229.1,336.9" fill="#10e030"/><polygon points="217.9,355.7 254.8,356.7 229.1,336.9" fill="#2a2a3a"/><polygon points="197.0,414.5 254.8,356.7 206.3,408.0" fill="#00a020"/><polygon points="206.3,408.0 254.8,356.7 231.9,400.0" fill="#004010"/><polygon points="197.0,414.5 206.3,408.0 231.9,400.0" fill="#1840e0"/><polygon points="197.0,414.5 231.9,400.0 218.0,410.7" fill="#00c0a0"/><polygon points="218.0,410.7 231.9,400.0 278.8,414.5" fill="#a0e020"/><polygon points="197.0,414.5 218.0,410.7 278.8,414.5" fill="#0a20b0"/><polygon points="254.8,356.7 231.9,400.0 254.9,393.7" fill="#10e030"/><polygon points="231.9,400.0 278.8,414.5 254.9,393.7" fill="#1840e0"/><polygon points="254.8,356.7 254.9,393.7 274.6,382.4" fill="#101810"/><polygon points="254.9,393.7 278.8,414.5 274.6,382.4" fill="#705040"/></g><circle cx="197" cy="267.5" r="72" fill="none" stroke="#d2e6cc" stroke-width="3.2"/><circle cx="197" cy="414.5" r="72" fill="none" stroke="#d2e6cc" stroke-width="3.2"/></g><circle cx="144" cy="214" r="25" fill="#fff"/><circle cx="165" cy="238" r="14" fill="#fff"/><circle cx="129" cy="236" r="9" fill="#fff"/><path d="M334.0 278.0 L346.0 250.0 L385.0 227.0 L405.0 207.0 L419.5 201.5 L453.6 205.6 L470.7 227.0 L479.0 261.0 L478.0 290.0 L473.5 318.0 L462.0 343.5 L440.0 342.0 L391.0 338.0 L360.0 326.5 L337.0 304.0Z" fill="#ffe0ea" opacity="0.45" filter="url(#gl)"/><g clip-path="url(#h1)" shape-rendering="crispEdges"><path d="M334.0 278.0 L346.0 250.0 L385.0 227.0 L405.0 207.0 L419.5 201.5 L453.6 205.6 L470.7 227.0 L479.0 261.0 L478.0 290.0 L473.5 318.0 L462.0 343.5 L440.0 342.0 L391.0 338.0 L360.0 326.5 L337.0 304.0Z" fill="#406020"/><polygon points="414.0,276.0 498.0,276.0 430.2,278.9" fill="#e080b0"/><polygon points="430.2,278.9 498.0,276.0 447.2,289.7" fill="#c080e0"/><polygon points="414.0,276.0 430.2,278.9 447.2,289.7" fill="#e0a060"/><polygon points="414.0,276.0 447.2,289.7 427.9,285.7" fill="#203050"/><polygon points="427.9,285.7 447.2,289.7 473.4,335.4" fill="#b0b0d8"/><polygon points="414.0,276.0 427.9,285.7 473.4,335.4" fill="#70d070"/><polygon points="498.0,276.0 447.2,289.7 472.7,301.0" fill="#3090e0"/><polygon points="447.2,289.7 473.4,335.4 472.7,301.0" fill="#e0a060"/><polygon points="498.0,276.0 472.7,301.0 493.7,309.0" fill="#80e040"/><polygon points="472.7,301.0 473.4,335.4 493.7,309.0" fill="#a0a0e0"/><polygon points="414.0,276.0 473.4,335.4 424.9,291.6" fill="#40d0e0"/><polygon points="424.9,291.6 473.4,335.4 427.2,307.8" fill="#a0a0e0"/><polygon points="414.0,276.0 424.9,291.6 427.2,307.8" fill="#70d070"/><polygon points="414.0,276.0 427.2,307.8 416.1,287.5" fill="#3090e0"/><polygon points="416.1,287.5 427.2,307.8 414.0,360.0" fill="#70d070"/><polygon points="414.0,276.0 416.1,287.5 414.0,360.0" fill="#e0a060"/><polygon points="473.4,335.4 427.2,307.8 441.8,332.3" fill="#3090e0"/><polygon points="427.2,307.8 414.0,360.0 441.8,332.3" fill="#60c020"/><polygon points="473.4,335.4 441.8,332.3 447.0,355.7" fill="#203050"/><polygon points="441.8,332.3 414.0,360.0 447.0,355.7" fill="#40a010"/><polygon points="414.0,276.0 414.0,360.0 411.9,287.4" fill="#a0a0e0"/><polygon points="411.9,287.4 414.0,360.0 401.7,305.6" fill="#e080b0"/><polygon points="414.0,276.0 411.9,287.4 401.7,305.6" fill="#c080e0"/><polygon points="414.0,276.0 401.7,305.6 404.6,289.5" fill="#203050"/><polygon points="404.6,289.5 401.7,305.6 354.6,335.4" fill="#8060d0"/><polygon points="414.0,276.0 404.6,289.5 354.6,335.4" fill="#70d070"/><polygon points="414.0,360.0 401.7,305.6 394.6,330.3" fill="#2a2a4a"/><polygon points="401.7,305.6 354.6,335.4 394.6,330.3" fill="#b0b0d8"/><polygon points="414.0,360.0 394.6,330.3 381.0,355.7" fill="#60c020"/><polygon points="394.6,330.3 354.6,335.4 381.0,355.7" fill="#40a010"/><polygon points="414.0,276.0 354.6,335.4 395.6,288.8" fill="#4a1a6a"/><polygon points="395.6,288.8 354.6,335.4 380.8,289.8" fill="#e02020"/><polygon points="414.0,276.0 395.6,288.8 380.8,289.8" fill="#8060d0"/><polygon points="414.0,276.0 380.8,289.8 393.6,279.7" fill="#203050"/><polygon points="393.6,279.7 380.8,289.8 330.0,276.0" fill="#2a2a4a"/><polygon points="414.0,276.0 393.6,279.7 330.0,276.0" fill="#60c020"/><polygon points="354.6,335.4 380.8,289.8 355.3,302.8" fill="#40a010"/><polygon points="380.8,289.8 330.0,276.0 355.3,302.8" fill="#e080b0"/><polygon points="354.6,335.4 355.3,302.8 334.3,309.0" fill="#80e040"/><polygon points="355.3,302.8 330.0,276.0 334.3,309.0" fill="#40d0e0"/><polygon points="414.0,276.0 330.0,276.0 402.7,274.0" fill="#c080e0"/><polygon points="402.7,274.0 330.0,276.0 383.9,263.5" fill="#c080e0"/><polygon points="414.0,276.0 402.7,274.0 383.9,263.5" fill="#60c020"/><polygon points="414.0,276.0 383.9,263.5 398.4,265.2" fill="#b0b0d8"/><polygon points="398.4,265.2 383.9,263.5 354.6,216.6" fill="#40d0e0"/><polygon points="414.0,276.0 398.4,265.2 354.6,216.6" fill="#40d0e0"/><polygon points="330.0,276.0 383.9,263.5 361.5,256.3" fill="#a08010"/><polygon points="383.9,263.5 354.6,216.6 361.5,256.3" fill="#40a010"/><polygon points="330.0,276.0 361.5,256.3 334.3,243.0" fill="#e080b0"/><polygon points="361.5,256.3 354.6,216.6 334.3,243.0" fill="#70d070"/><polygon points="414.0,276.0 354.6,216.6 405.6,263.9" fill="#a08010"/><polygon points="405.6,263.9 354.6,216.6 401.2,245.1" fill="#80e040"/><polygon points="414.0,276.0 405.6,263.9 401.2,245.1" fill="#50e050"/><polygon points="414.0,276.0 401.2,245.1 412.0,264.8" fill="#8060d0"/><polygon points="412.0,264.8 401.2,245.1 414.0,192.0" fill="#80e040"/><polygon points="414.0,276.0 412.0,264.8 414.0,192.0" fill="#60c020"/><polygon points="354.6,216.6 401.2,245.1 393.1,221.3" fill="#60c020"/><polygon points="401.2,245.1 414.0,192.0 393.1,221.3" fill="#a0a0e0"/><polygon points="354.6,216.6 393.1,221.3 381.0,196.3" fill="#b0b0d8"/><polygon points="393.1,221.3 414.0,192.0 381.0,196.3" fill="#e0a060"/><polygon points="414.0,276.0 414.0,192.0 418.0,254.0" fill="#a08010"/><polygon points="418.0,254.0 414.0,192.0 428.6,240.8" fill="#70d070"/><polygon points="414.0,276.0 418.0,254.0 428.6,240.8" fill="#40d0e0"/><polygon points="414.0,276.0 428.6,240.8 425.4,259.6" fill="#80e040"/><polygon points="425.4,259.6 428.6,240.8 473.4,216.6" fill="#40d0e0"/><polygon points="414.0,276.0 425.4,259.6 473.4,216.6" fill="#a08010"/><polygon points="414.0,192.0 428.6,240.8 434.2,219.4" fill="#c080e0"/><polygon points="428.6,240.8 473.4,216.6 434.2,219.4" fill="#60c020"/><polygon points="414.0,192.0 434.2,219.4 447.0,196.3" fill="#4a1a6a"/><polygon points="434.2,219.4 473.4,216.6 447.0,196.3" fill="#e080b0"/><polygon points="414.0,276.0 473.4,216.6 426.9,267.1" fill="#70d070"/><polygon points="426.9,267.1 473.4,216.6 445.8,262.8" fill="#e080b0"/><polygon points="414.0,276.0 426.9,267.1 445.8,262.8" fill="#80e040"/><polygon points="414.0,276.0 445.8,262.8 434.5,272.3" fill="#60c020"/><polygon points="434.5,272.3 445.8,262.8 498.0,276.0" fill="#50e050"/><polygon points="414.0,276.0 434.5,272.3 498.0,276.0" fill="#c080e0"/><polygon points="473.4,216.6 445.8,262.8 468.3,257.3" fill="#a0a0e0"/><polygon points="445.8,262.8 498.0,276.0 468.3,257.3" fill="#4a1a6a"/><polygon points="473.4,216.6 468.3,257.3 493.7,243.0" fill="#60c020"/><polygon points="468.3,257.3 498.0,276.0 493.7,243.0" fill="#3090e0"/><polygon points="462.0,343.0 515.5,359.5 474.9,350.7" fill="#40a010"/><polygon points="474.9,350.7 515.5,359.5 479.4,361.8" fill="#50e050"/><polygon points="462.0,343.0 474.9,350.7 479.4,361.8" fill="#2a2a4a"/><polygon points="462.0,343.0 479.4,361.8 466.0,351.0" fill="#60c020"/><polygon points="466.0,351.0 479.4,361.8 474.4,397.6" fill="#a0a0e0"/><polygon points="462.0,343.0 466.0,351.0 474.4,397.6" fill="#a0a0e0"/><polygon points="515.5,359.5 479.4,361.8 486.3,372.3" fill="#70d070"/><polygon points="479.4,361.8 474.4,397.6 486.3,372.3" fill="#80e040"/><polygon points="515.5,359.5 486.3,372.3 501.1,385.2" fill="#60c020"/><polygon points="486.3,372.3 474.4,397.6 501.1,385.2" fill="#203050"/><polygon points="462.0,343.0 474.4,397.6 461.8,355.6" fill="#40a010"/><polygon points="461.8,355.6 474.4,397.6 455.5,364.1" fill="#4a1a6a"/><polygon points="462.0,343.0 461.8,355.6 455.5,364.1" fill="#3090e0"/><polygon points="462.0,343.0 455.5,364.1 455.8,352.4" fill="#e0a060"/><polygon points="455.8,352.4 455.5,364.1 420.9,381.1" fill="#e02020"/><polygon points="462.0,343.0 455.8,352.4 420.9,381.1" fill="#2a2a4a"/><polygon points="474.4,397.6 455.5,364.1 449.6,383.2" fill="#40a010"/><polygon points="455.5,364.1 420.9,381.1 449.6,383.2" fill="#501060"/><polygon points="474.4,397.6 449.6,383.2 445.0,397.9" fill="#70d070"/><polygon points="449.6,383.2 420.9,381.1 445.0,397.9" fill="#20c0d0"/><polygon points="462.0,343.0 420.9,381.1 453.2,347.9" fill="#2a2a4a"/><polygon points="453.2,347.9 420.9,381.1 437.3,348.6" fill="#80e040"/><polygon points="462.0,343.0 453.2,347.9 437.3,348.6" fill="#8060d0"/><polygon points="462.0,343.0 437.3,348.6 449.0,342.2" fill="#3090e0"/><polygon points="449.0,342.2 437.3,348.6 408.5,326.5" fill="#50e050"/><polygon points="462.0,343.0 449.0,342.2 408.5,326.5" fill="#b0b0d8"/><polygon points="420.9,381.1 437.3,348.6 425.4,354.3" fill="#2a2a4a"/><polygon points="437.3,348.6 408.5,326.5 425.4,354.3" fill="#4a1a6a"/><polygon points="420.9,381.1 425.4,354.3 405.9,355.8" fill="#501060"/><polygon points="425.4,354.3 408.5,326.5 405.9,355.8" fill="#4a1a6a"/><polygon points="462.0,343.0 408.5,326.5 454.6,338.6" fill="#b0b0d8"/><polygon points="454.6,338.6 408.5,326.5 443.6,323.2" fill="#c080e0"/><polygon points="462.0,343.0 454.6,338.6 443.6,323.2" fill="#3090e0"/><polygon points="462.0,343.0 443.6,323.2 458.2,335.3" fill="#50e050"/><polygon points="458.2,335.3 443.6,323.2 449.6,288.4" fill="#b0b0d8"/><polygon points="462.0,343.0 458.2,335.3 449.6,288.4" fill="#203050"/><polygon points="408.5,326.5 443.6,323.2 433.0,315.5" fill="#4a1a6a"/><polygon points="443.6,323.2 449.6,288.4 433.0,315.5" fill="#203050"/><polygon points="408.5,326.5 433.0,315.5 422.9,300.8" fill="#8060d0"/><polygon points="433.0,315.5 449.6,288.4 422.9,300.8" fill="#501060"/><polygon points="462.0,343.0 449.6,288.4 462.1,333.2" fill="#8060d0"/><polygon points="462.1,333.2 449.6,288.4 469.7,318.0" fill="#40d0e0"/><polygon points="462.0,343.0 462.1,333.2 469.7,318.0" fill="#c080e0"/><polygon points="462.0,343.0 469.7,318.0 468.4,333.4" fill="#2a2a4a"/><polygon points="468.4,333.4 469.7,318.0 503.1,304.9" fill="#40d0e0"/><polygon points="462.0,343.0 468.4,333.4 503.1,304.9" fill="#40a010"/><polygon points="449.6,288.4 469.7,318.0 470.8,306.2" fill="#b0b0d8"/><polygon points="469.7,318.0 503.1,304.9 470.8,306.2" fill="#20c0d0"/><polygon points="449.6,288.4 470.8,306.2 479.0,288.1" fill="#e02020"/><polygon points="470.8,306.2 503.1,304.9 479.0,288.1" fill="#4a1a6a"/><polygon points="462.0,343.0 503.1,304.9 470.8,338.1" fill="#20c0d0"/><polygon points="470.8,338.1 503.1,304.9 487.4,337.2" fill="#60c020"/><polygon points="462.0,343.0 470.8,338.1 487.4,337.2" fill="#60c020"/><polygon points="462.0,343.0 487.4,337.2 476.1,343.9" fill="#a0a0e0"/><polygon points="476.1,343.9 487.4,337.2 515.5,359.5" fill="#e02020"/><polygon points="462.0,343.0 476.1,343.9 515.5,359.5" fill="#a0a0e0"/><polygon points="503.1,304.9 487.4,337.2 503.2,335.3" fill="#a0a0e0"/><polygon points="487.4,337.2 515.5,359.5 503.2,335.3" fill="#40a010"/><polygon points="503.1,304.9 503.2,335.3 518.1,330.2" fill="#60c020"/><polygon points="503.2,335.3 515.5,359.5 518.1,330.2" fill="#40a010"/></g><path d="M462.0 343.5 L387.0 349.0 L343.4 380.0 L334.0 400.5 L335.2 419.5 L344.7 437.0 L367.8 449.3 L384.0 457.4 L420.0 430.0 L476.0 422.0 L480.3 408.6 L476.0 381.5Z" fill="#ffe0ea" opacity="0.45" filter="url(#gl)"/><g clip-path="url(#h2)" shape-rendering="crispEdges"><path d="M462.0 343.5 L387.0 349.0 L343.4 380.0 L334.0 400.5 L335.2 419.5 L344.7 437.0 L367.8 449.3 L384.0 457.4 L420.0 430.0 L476.0 422.0 L480.3 408.6 L476.0 381.5Z" fill="#3a1a5a"/><polygon points="462.0,343.0 596.4,343.0 484.8,347.1" fill="#a0e0a0"/><polygon points="484.8,347.1 596.4,343.0 516.1,365.4" fill="#4a1a6a"/><polygon points="462.0,343.0 484.8,347.1 516.1,365.4" fill="#80e040"/><polygon points="462.0,343.0 516.1,365.4 488.1,361.1" fill="#60c020"/><polygon points="488.1,361.1 516.1,365.4 557.0,438.0" fill="#8060d0"/><polygon points="462.0,343.0 488.1,361.1 557.0,438.0" fill="#b0b0d8"/><polygon points="596.4,343.0 516.1,365.4 554.8,386.9" fill="#c0c0f0"/><polygon points="516.1,365.4 557.0,438.0 554.8,386.9" fill="#4a1a6a"/><polygon points="596.4,343.0 554.8,386.9 589.5,395.8" fill="#70d070"/><polygon points="554.8,386.9 557.0,438.0 589.5,395.8" fill="#20c0d0"/><polygon points="462.0,343.0 557.0,438.0 473.7,359.8" fill="#50e050"/><polygon points="473.7,359.8 557.0,438.0 485.1,398.8" fill="#c080e0"/><polygon points="462.0,343.0 473.7,359.8 485.1,398.8" fill="#50e050"/><polygon points="462.0,343.0 485.1,398.8 467.0,370.5" fill="#a0e0a0"/><polygon points="467.0,370.5 485.1,398.8 462.0,477.4" fill="#a0e0a0"/><polygon points="462.0,343.0 467.0,370.5 462.0,477.4" fill="#c080e0"/><polygon points="557.0,438.0 485.1,398.8 497.3,435.8" fill="#20c0d0"/><polygon points="485.1,398.8 462.0,477.4 497.3,435.8" fill="#a0e0a0"/><polygon points="557.0,438.0 497.3,435.8 514.8,470.5" fill="#80e040"/><polygon points="497.3,435.8 462.0,477.4 514.8,470.5" fill="#40a010"/><polygon points="462.0,343.0 462.0,477.4 457.3,369.1" fill="#50e050"/><polygon points="457.3,369.1 462.0,477.4 440.9,394.0" fill="#c0c0f0"/><polygon points="462.0,343.0 457.3,369.1 440.9,394.0" fill="#70d070"/><polygon points="462.0,343.0 440.9,394.0 441.5,372.5" fill="#20c0d0"/><polygon points="441.5,372.5 440.9,394.0 367.0,438.0" fill="#60c020"/><polygon points="462.0,343.0 441.5,372.5 367.0,438.0" fill="#c0c0f0"/><polygon points="462.0,477.4 440.9,394.0 429.2,439.9" fill="#a0a0e0"/><polygon points="440.9,394.0 367.0,438.0 429.2,439.9" fill="#f0f0f0"/><polygon points="462.0,477.4 429.2,439.9 409.2,470.5" fill="#70d040"/><polygon points="429.2,439.9 367.0,438.0 409.2,470.5" fill="#a0a0e0"/><polygon points="462.0,343.0 367.0,438.0 447.1,353.3" fill="#80e040"/><polygon points="447.1,353.3 367.0,438.0 414.7,362.6" fill="#a0e0a0"/><polygon points="462.0,343.0 447.1,353.3 414.7,362.6" fill="#c080e0"/><polygon points="462.0,343.0 414.7,362.6 437.1,347.5" fill="#8060d0"/><polygon points="437.1,347.5 414.7,362.6 327.6,343.0" fill="#70d070"/><polygon points="462.0,343.0 437.1,347.5 327.6,343.0" fill="#a0a0e0"/><polygon points="367.0,438.0 414.7,362.6 372.4,380.5" fill="#70d040"/><polygon points="414.7,362.6 327.6,343.0 372.4,380.5" fill="#4a1a6a"/><polygon points="367.0,438.0 372.4,380.5 334.5,395.8" fill="#40a010"/><polygon points="372.4,380.5 327.6,343.0 334.5,395.8" fill="#4a1a6a"/><polygon points="462.0,343.0 327.6,343.0 434.5,338.0" fill="#e02020"/><polygon points="434.5,338.0 327.6,343.0 412.7,322.6" fill="#a0a0e0"/><polygon points="462.0,343.0 434.5,338.0 412.7,322.6" fill="#20c0d0"/><polygon points="462.0,343.0 412.7,322.6 445.3,331.4" fill="#e0a060"/><polygon points="445.3,331.4 412.7,322.6 367.0,248.0" fill="#20c0d0"/><polygon points="462.0,343.0 445.3,331.4 367.0,248.0" fill="#80e040"/><polygon points="327.6,343.0 412.7,322.6 373.2,304.5" fill="#f0f0f0"/><polygon points="412.7,322.6 367.0,248.0 373.2,304.5" fill="#f0f0f0"/><polygon points="327.6,343.0 373.2,304.5 334.5,290.2" fill="#4a1a6a"/><polygon points="373.2,304.5 367.0,248.0 334.5,290.2" fill="#20c0d0"/><polygon points="462.0,343.0 367.0,248.0 446.9,321.3" fill="#70d040"/><polygon points="446.9,321.3 367.0,248.0 442.7,296.3" fill="#c080e0"/><polygon points="462.0,343.0 446.9,321.3 442.7,296.3" fill="#e02020"/><polygon points="462.0,343.0 442.7,296.3 457.9,320.5" fill="#4a1a6a"/><polygon points="457.9,320.5 442.7,296.3 462.0,208.6" fill="#40a010"/><polygon points="462.0,343.0 457.9,320.5 462.0,208.6" fill="#3090e0"/><polygon points="367.0,248.0 442.7,296.3 429.6,254.9" fill="#60c020"/><polygon points="442.7,296.3 462.0,208.6 429.6,254.9" fill="#6060c0"/><polygon points="367.0,248.0 429.6,254.9 409.2,215.5" fill="#f0f0f0"/><polygon points="429.6,254.9 462.0,208.6 409.2,215.5" fill="#70d070"/><polygon points="462.0,343.0 462.0,208.6 468.3,308.3" fill="#b0b0d8"/><polygon points="468.3,308.3 462.0,208.6 485.4,286.5" fill="#e0a060"/><polygon points="462.0,343.0 468.3,308.3 485.4,286.5" fill="#c080e0"/><polygon points="462.0,343.0 485.4,286.5 478.3,319.5" fill="#4a1a6a"/><polygon points="478.3,319.5 485.4,286.5 557.0,248.0" fill="#50e050"/><polygon points="462.0,343.0 478.3,319.5 557.0,248.0" fill="#80e040"/><polygon points="462.0,208.6 485.4,286.5 498.6,250.6" fill="#c080e0"/><polygon points="485.4,286.5 557.0,248.0 498.6,250.6" fill="#70d040"/><polygon points="462.0,208.6 498.6,250.6 514.8,215.5" fill="#a0e0a0"/><polygon points="498.6,250.6 557.0,248.0 514.8,215.5" fill="#e02020"/><polygon points="462.0,343.0 557.0,248.0 477.5,332.2" fill="#40a010"/><polygon points="477.5,332.2 557.0,248.0 520.2,318.9" fill="#e02020"/><polygon points="462.0,343.0 477.5,332.2 520.2,318.9" fill="#4a1a6a"/><polygon points="462.0,343.0 520.2,318.9 496.1,336.8" fill="#b0b0d8"/><polygon points="496.1,336.8 520.2,318.9 596.4,343.0" fill="#3090e0"/><polygon points="462.0,343.0 496.1,336.8 596.4,343.0" fill="#40a010"/><polygon points="557.0,248.0 520.2,318.9 557.2,310.9" fill="#a0e0a0"/><polygon points="520.2,318.9 596.4,343.0 557.2,310.9" fill="#40a010"/><polygon points="557.0,248.0 557.2,310.9 589.5,290.2" fill="#a0e0a0"/><polygon points="557.2,310.9 596.4,343.0 589.5,290.2" fill="#8060d0"/><polygon points="417.0,411.0 486.5,432.5 431.3,418.4" fill="#4a1a6a"/><polygon points="431.3,418.4 486.5,432.5 441.5,431.3" fill="#70d040"/><polygon points="417.0,411.0 431.3,418.4 441.5,431.3" fill="#b0b0d8"/><polygon points="417.0,411.0 441.5,431.3 424.3,420.3" fill="#b0b0d8"/><polygon points="424.3,420.3 441.5,431.3 451.0,475.4" fill="#50e050"/><polygon points="417.0,411.0 424.3,420.3 451.0,475.4" fill="#40a010"/><polygon points="486.5,432.5 441.5,431.3 455.2,440.6" fill="#e080b0"/><polygon points="441.5,431.3 451.0,475.4 455.2,440.6" fill="#60c020"/><polygon points="486.5,432.5 455.2,440.6 474.5,458.7" fill="#70d070"/><polygon points="455.2,440.6 451.0,475.4 474.5,458.7" fill="#8060d0"/><polygon points="417.0,411.0 451.0,475.4 422.3,427.9" fill="#b0b0d8"/><polygon points="422.3,427.9 451.0,475.4 419.5,438.4" fill="#a0a0e0"/><polygon points="417.0,411.0 422.3,427.9 419.5,438.4" fill="#a0e0a0"/><polygon points="417.0,411.0 419.5,438.4 415.2,425.8" fill="#40a010"/><polygon points="415.2,425.8 419.5,438.4 395.5,480.5" fill="#b0b0d8"/><polygon points="417.0,411.0 415.2,425.8 395.5,480.5" fill="#60c020"/><polygon points="451.0,475.4 419.5,438.4 417.7,466.2" fill="#8060d0"/><polygon points="419.5,438.4 395.5,480.5 417.7,466.2" fill="#f0f0f0"/><polygon points="451.0,475.4 417.7,466.2 423.9,485.4" fill="#4a1a6a"/><polygon points="417.7,466.2 395.5,480.5 423.9,485.4" fill="#c0c0f0"/><polygon points="417.0,411.0 395.5,480.5 408.5,427.4" fill="#3090e0"/><polygon points="408.5,427.4 395.5,480.5 396.5,435.7" fill="#e02020"/><polygon points="417.0,411.0 408.5,427.4 396.5,435.7" fill="#50e050"/><polygon points="417.0,411.0 396.5,435.7 408.5,417.7" fill="#e02020"/><polygon points="408.5,417.7 396.5,435.7 352.6,445.0" fill="#e02020"/><polygon points="417.0,411.0 408.5,417.7 352.6,445.0" fill="#4a1a6a"/><polygon points="395.5,480.5 396.5,435.7 382.0,450.9" fill="#70d070"/><polygon points="396.5,435.7 352.6,445.0 382.0,450.9" fill="#40a010"/><polygon points="395.5,480.5 382.0,450.9 369.3,468.5" fill="#50e050"/><polygon points="382.0,450.9 352.6,445.0 369.3,468.5" fill="#8060d0"/><polygon points="417.0,411.0 352.6,445.0 399.2,416.6" fill="#e0a060"/><polygon points="399.2,416.6 352.6,445.0 383.9,414.1" fill="#70d070"/><polygon points="417.0,411.0 399.2,416.6 383.9,414.1" fill="#e0a060"/><polygon points="417.0,411.0 383.9,414.1 402.4,409.2" fill="#3090e0"/><polygon points="402.4,409.2 383.9,414.1 347.5,389.5" fill="#20c0d0"/><polygon points="417.0,411.0 402.4,409.2 347.5,389.5" fill="#70d070"/><polygon points="352.6,445.0 383.9,414.1 369.2,418.4" fill="#e080b0"/><polygon points="383.9,414.1 347.5,389.5 369.2,418.4" fill="#20c0d0"/><polygon points="352.6,445.0 369.2,418.4 342.6,417.9" fill="#70d070"/><polygon points="369.2,418.4 347.5,389.5 342.6,417.9" fill="#20c0d0"/><polygon points="417.0,411.0 347.5,389.5 404.2,404.4" fill="#3090e0"/><polygon points="404.2,404.4 347.5,389.5 395.5,393.2" fill="#4a1a6a"/><polygon points="417.0,411.0 404.2,404.4 395.5,393.2" fill="#f0f0f0"/><polygon points="417.0,411.0 395.5,393.2 408.1,399.6" fill="#4a1a6a"/><polygon points="408.1,399.6 395.5,393.2 383.0,346.6" fill="#e0a060"/><polygon points="417.0,411.0 408.1,399.6 383.0,346.6" fill="#e0a060"/><polygon points="347.5,389.5 395.5,393.2 376.9,372.7" fill="#e0a060"/><polygon points="395.5,393.2 383.0,346.6 376.9,372.7" fill="#70d070"/><polygon points="347.5,389.5 376.9,372.7 359.5,363.3" fill="#e02020"/><polygon points="376.9,372.7 383.0,346.6 359.5,363.3" fill="#c0c0f0"/><polygon points="417.0,411.0 383.0,346.6 411.3,393.0" fill="#6060c0"/><polygon points="411.3,393.0 383.0,346.6 414.0,378.2" fill="#e02020"/><polygon points="417.0,411.0 411.3,393.0 414.0,378.2" fill="#70d070"/><polygon points="417.0,411.0 414.0,378.2 419.2,392.6" fill="#b0b0d8"/><polygon points="419.2,392.6 414.0,378.2 438.5,341.5" fill="#b0b0d8"/><polygon points="417.0,411.0 419.2,392.6 438.5,341.5" fill="#e02020"/><polygon points="383.0,346.6 414.0,378.2 415.8,359.2" fill="#3090e0"/><polygon points="414.0,378.2 438.5,341.5 415.8,359.2" fill="#a0a0e0"/><polygon points="383.0,346.6 415.8,359.2 410.1,336.6" fill="#e02020"/><polygon points="415.8,359.2 438.5,341.5 410.1,336.6" fill="#70d070"/><polygon points="417.0,411.0 438.5,341.5 425.7,394.3" fill="#c080e0"/><polygon points="425.7,394.3 438.5,341.5 435.2,389.1" fill="#80e040"/><polygon points="417.0,411.0 425.7,394.3 435.2,389.1" fill="#20c0d0"/><polygon points="417.0,411.0 435.2,389.1 424.8,404.9" fill="#a0e0a0"/><polygon points="424.8,404.9 435.2,389.1 481.4,377.0" fill="#70d040"/><polygon points="417.0,411.0 424.8,404.9 481.4,377.0" fill="#f0f0f0"/><polygon points="438.5,341.5 435.2,389.1 447.0,370.5" fill="#a0e0a0"/><polygon points="435.2,389.1 481.4,377.0 447.0,370.5" fill="#4a1a6a"/><polygon points="438.5,341.5 447.0,370.5 464.7,353.5" fill="#b0b0d8"/><polygon points="447.0,370.5 481.4,377.0 464.7,353.5" fill="#a0e0a0"/><polygon points="417.0,411.0 481.4,377.0 433.9,405.6" fill="#a0a0e0"/><polygon points="433.9,405.6 481.4,377.0 444.5,408.4" fill="#4a1a6a"/><polygon points="417.0,411.0 433.9,405.6 444.5,408.4" fill="#e080b0"/><polygon points="417.0,411.0 444.5,408.4 431.5,412.8" fill="#70d070"/><polygon points="431.5,412.8 444.5,408.4 486.5,432.5" fill="#50e050"/><polygon points="417.0,411.0 431.5,412.8 486.5,432.5" fill="#50e050"/><polygon points="481.4,377.0 444.5,408.4 464.9,406.1" fill="#b0b0d8"/><polygon points="444.5,408.4 486.5,432.5 464.9,406.1" fill="#70d070"/><polygon points="481.4,377.0 464.9,406.1 491.4,404.1" fill="#40a010"/><polygon points="464.9,406.1 486.5,432.5 491.4,404.1" fill="#20c0d0"/></g><g clip-path="url(#h3)" shape-rendering="crispEdges"><polygon points="462.0,343.0 531.4,343.0 477.7,345.8" fill="#50e050"/><polygon points="477.7,345.8 531.4,343.0 490.7,354.9" fill="#60e0e0"/><polygon points="462.0,343.0 477.7,345.8 490.7,354.9" fill="#2090e0"/><polygon points="462.0,343.0 490.7,354.9 476.8,353.3" fill="#20c0d0"/><polygon points="476.8,353.3 490.7,354.9 511.1,392.1" fill="#20c0d0"/><polygon points="462.0,343.0 476.8,353.3 511.1,392.1" fill="#30b0c0"/><polygon points="531.4,343.0 490.7,354.9 506.3,364.7" fill="#60e0e0"/><polygon points="490.7,354.9 511.1,392.1 506.3,364.7" fill="#30b0c0"/><polygon points="531.4,343.0 506.3,364.7 527.9,370.3" fill="#8a6a10"/><polygon points="506.3,364.7 511.1,392.1 527.9,370.3" fill="#20c0d0"/><polygon points="462.0,343.0 511.1,392.1 468.5,352.4" fill="#50e050"/><polygon points="468.5,352.4 511.1,392.1 472.5,368.3" fill="#60e0e0"/><polygon points="462.0,343.0 468.5,352.4 472.5,368.3" fill="#50e050"/><polygon points="462.0,343.0 472.5,368.3 463.9,353.4" fill="#80f040"/><polygon points="463.9,353.4 472.5,368.3 462.0,412.4" fill="#20c0d0"/><polygon points="462.0,343.0 463.9,353.4 462.0,412.4" fill="#60e0e0"/><polygon points="511.1,392.1 472.5,368.3 481.8,388.0" fill="#8a6a10"/><polygon points="472.5,368.3 462.0,412.4 481.8,388.0" fill="#30b0c0"/><polygon points="511.1,392.1 481.8,388.0 489.3,408.9" fill="#40d0e0"/><polygon points="481.8,388.0 462.0,412.4 489.3,408.9" fill="#50e050"/><polygon points="462.0,343.0 462.0,412.4 459.1,359.3" fill="#2090e0"/><polygon points="459.1,359.3 462.0,412.4 450.8,370.1" fill="#2090e0"/><polygon points="462.0,343.0 459.1,359.3 450.8,370.1" fill="#a08010"/><polygon points="462.0,343.0 450.8,370.1 452.7,356.4" fill="#60e0e0"/><polygon points="452.7,356.4 450.8,370.1 412.9,392.1" fill="#a0e0f0"/><polygon points="462.0,343.0 452.7,356.4 412.9,392.1" fill="#a08010"/><polygon points="462.0,412.4 450.8,370.1 444.2,387.3" fill="#30b0c0"/><polygon points="450.8,370.1 412.9,392.1 444.2,387.3" fill="#40d0e0"/><polygon points="462.0,412.4 444.2,387.3 434.7,408.9" fill="#20c0d0"/><polygon points="444.2,387.3 412.9,392.1 434.7,408.9" fill="#40d0e0"/><polygon points="462.0,343.0 412.9,392.1 451.3,350.4" fill="#a08010"/><polygon points="451.3,350.4 412.9,392.1 431.8,355.5" fill="#20c0d0"/><polygon points="462.0,343.0 451.3,350.4 431.8,355.5" fill="#80f040"/><polygon points="462.0,343.0 431.8,355.5 449.8,345.2" fill="#80f040"/><polygon points="449.8,345.2 431.8,355.5 392.6,343.0" fill="#30b0c0"/><polygon points="462.0,343.0 449.8,345.2 392.6,343.0" fill="#30b0c0"/><polygon points="412.9,392.1 431.8,355.5 417.8,365.1" fill="#a08010"/><polygon points="431.8,355.5 392.6,343.0 417.8,365.1" fill="#50e050"/><polygon points="412.9,392.1 417.8,365.1 396.1,370.3" fill="#60e0e0"/><polygon points="417.8,365.1 392.6,343.0 396.1,370.3" fill="#60e0e0"/><polygon points="462.0,343.0 392.6,343.0 444.3,339.8" fill="#a08010"/><polygon points="444.3,339.8 392.6,343.0 433.0,331.0" fill="#a0e0f0"/><polygon points="462.0,343.0 444.3,339.8 433.0,331.0" fill="#8a6a10"/><polygon points="462.0,343.0 433.0,331.0 453.0,336.8" fill="#40d0e0"/><polygon points="453.0,336.8 433.0,331.0 412.9,293.9" fill="#80f040"/><polygon points="462.0,343.0 453.0,336.8 412.9,293.9" fill="#40d0e0"/><polygon points="392.6,343.0 433.0,331.0 415.9,324.1" fill="#80f040"/><polygon points="433.0,331.0 412.9,293.9 415.9,324.1" fill="#80f040"/><polygon points="392.6,343.0 415.9,324.1 396.1,315.7" fill="#40d0e0"/><polygon points="415.9,324.1 412.9,293.9 396.1,315.7" fill="#8a6a10"/><polygon points="462.0,343.0 412.9,293.9 454.3,331.8" fill="#8a6a10"/><polygon points="454.3,331.8 412.9,293.9 451.6,318.0" fill="#a08010"/><polygon points="462.0,343.0 454.3,331.8 451.6,318.0" fill="#a08010"/><polygon points="462.0,343.0 451.6,318.0 460.0,331.7" fill="#a0e0f0"/><polygon points="460.0,331.7 451.6,318.0 462.0,273.6" fill="#2090e0"/><polygon points="462.0,343.0 460.0,331.7 462.0,273.6" fill="#2090e0"/><polygon points="412.9,293.9 451.6,318.0 444.9,298.6" fill="#80f040"/><polygon points="451.6,318.0 462.0,273.6 444.9,298.6" fill="#a08010"/><polygon points="412.9,293.9 444.9,298.6 434.7,277.1" fill="#30b0c0"/><polygon points="444.9,298.6 462.0,273.6 434.7,277.1" fill="#a08010"/><polygon points="462.0,343.0 462.0,273.6 465.2,325.2" fill="#80f040"/><polygon points="465.2,325.2 462.0,273.6 473.7,314.8" fill="#40d0e0"/><polygon points="462.0,343.0 465.2,325.2 473.7,314.8" fill="#20c0d0"/><polygon points="462.0,343.0 473.7,314.8 469.0,332.9" fill="#a08010"/><polygon points="469.0,332.9 473.7,314.8 511.1,293.9" fill="#a0e0f0"/><polygon points="462.0,343.0 469.0,332.9 511.1,293.9" fill="#40d0e0"/><polygon points="462.0,273.6 473.7,314.8 477.5,298.4" fill="#50e050"/><polygon points="473.7,314.8 511.1,293.9 477.5,298.4" fill="#80f040"/><polygon points="462.0,273.6 477.5,298.4 489.3,277.1" fill="#60e0e0"/><polygon points="477.5,298.4 511.1,293.9 489.3,277.1" fill="#8a6a10"/><polygon points="462.0,343.0 511.1,293.9 473.3,335.2" fill="#60e0e0"/><polygon points="473.3,335.2 511.1,293.9 487.5,332.4" fill="#a0e0f0"/><polygon points="462.0,343.0 473.3,335.2 487.5,332.4" fill="#30b0c0"/><polygon points="462.0,343.0 487.5,332.4 478.6,340.0" fill="#30b0c0"/><polygon points="478.6,340.0 487.5,332.4 531.4,343.0" fill="#50e050"/><polygon points="462.0,343.0 478.6,340.0 531.4,343.0" fill="#60e0e0"/><polygon points="511.1,293.9 487.5,332.4 509.2,326.0" fill="#40d0e0"/><polygon points="487.5,332.4 531.4,343.0 509.2,326.0" fill="#20c0d0"/><polygon points="511.1,293.9 509.2,326.0 527.9,315.7" fill="#50e050"/><polygon points="509.2,326.0 531.4,343.0 527.9,315.7" fill="#80f040"/></g><circle cx="368" cy="301" r="26" fill="#fff"/><path d="M380 320 L400 324 L398 330 L376 327Z" fill="#fff"/><circle cx="420" cy="314" r="13.5" fill="#fff"/><path d="M415 310h3v2h-3zM421 310h3v2h-3zM416 316h7v2h-7z" fill="#222"/><path d="M376 370 L400 362 L404 381 L381 384Z" fill="#fff"/><path d="M635.7 197.0 L650.0 210.0 L665.0 230.0 L678.0 255.0 L686.0 278.0 L688.4 293.0 L686.0 312.0 L678.0 330.0 L665.0 343.0 L650.0 349.5 L621.4 349.5 L606.4 343.0 L593.4 330.0 L585.4 312.0 L583.0 293.0 L585.4 278.0 L593.4 255.0 L606.4 230.0 L621.4 210.0 L635.7 197.0 L662.0 360.0 L678.0 375.0 L688.0 392.0 L690.6 409.0 L688.0 430.0 L680.0 455.0 L668.0 478.0 L652.0 498.0 L635.7 509.5 L635.7 509.5 L619.4 498.0 L603.4 478.0 L591.4 455.0 L583.4 430.0 L580.8 409.0 L583.4 392.0 L593.4 375.0 L609.4 360.0 L621.4 349.5Z" fill="#b8f4ff" opacity="0.75" filter="url(#gl)"/><g clip-path="url(#d1)" shape-rendering="crispEdges"><path d="M635.7 197.0 L650.0 210.0 L665.0 230.0 L678.0 255.0 L686.0 278.0 L688.4 293.0 L686.0 312.0 L678.0 330.0 L665.0 343.0 L650.0 349.5 L621.4 349.5 L606.4 343.0 L593.4 330.0 L585.4 312.0 L583.0 293.0 L585.4 278.0 L593.4 255.0 L606.4 230.0 L621.4 210.0 L635.7 197.0Z" fill="#4070c0"/><polygon points="635.7,240.0 725.3,240.0 648.3,243.1" fill="#f040a0"/><polygon points="648.3,243.1 725.3,240.0 673.1,261.6" fill="#101030"/><polygon points="635.7,240.0 648.3,243.1 673.1,261.6" fill="#8080ff"/><polygon points="635.7,240.0 673.1,261.6 648.9,253.8" fill="#a0c0f0"/><polygon points="648.9,253.8 673.1,261.6 680.5,317.6" fill="#1030e0"/><polygon points="635.7,240.0 648.9,253.8 680.5,317.6" fill="#f040d0"/><polygon points="725.3,240.0 673.1,261.6 691.8,278.0" fill="#208020"/><polygon points="673.1,261.6 680.5,317.6 691.8,278.0" fill="#80f080"/><polygon points="725.3,240.0 691.8,278.0 715.4,286.0" fill="#10e0e0"/><polygon points="691.8,278.0 680.5,317.6 715.4,286.0" fill="#f06020"/><polygon points="635.7,240.0 680.5,317.6 642.4,262.8" fill="#10e0e0"/><polygon points="642.4,262.8 680.5,317.6 635.7,280.0" fill="#8080ff"/><polygon points="635.7,240.0 642.4,262.8 635.7,280.0" fill="#40e0ff"/><polygon points="635.7,240.0 635.7,280.0 630.6,257.3" fill="#f040a0"/><polygon points="630.6,257.3 635.7,280.0 590.9,317.6" fill="#a0c0f0"/><polygon points="635.7,240.0 630.6,257.3 590.9,317.6" fill="#20c0f0"/><polygon points="680.5,317.6 635.7,280.0 631.8,300.1" fill="#f040d0"/><polygon points="635.7,280.0 590.9,317.6 631.8,300.1" fill="#20c0f0"/><polygon points="680.5,317.6 631.8,300.1 635.7,332.0" fill="#e0e0a0"/><polygon points="631.8,300.1 590.9,317.6 635.7,332.0" fill="#a0c0f0"/><polygon points="635.7,240.0 590.9,317.6 624.4,251.8" fill="#a0c0f0"/><polygon points="624.4,251.8 590.9,317.6 600.7,260.2" fill="#e0e0a0"/><polygon points="635.7,240.0 624.4,251.8 600.7,260.2" fill="#10d020"/><polygon points="635.7,240.0 600.7,260.2 615.2,245.0" fill="#e0e040"/><polygon points="615.2,245.0 600.7,260.2 546.1,240.0" fill="#e0e0a0"/><polygon points="635.7,240.0 615.2,245.0 546.1,240.0" fill="#2090f0"/><polygon points="590.9,317.6 600.7,260.2 575.7,273.1" fill="#6040c0"/><polygon points="600.7,260.2 546.1,240.0 575.7,273.1" fill="#e020e0"/><polygon points="590.9,317.6 575.7,273.1 556.0,286.0" fill="#6040c0"/><polygon points="575.7,273.1 546.1,240.0 556.0,286.0" fill="#e0e0a0"/><polygon points="635.7,240.0 546.1,240.0 614.7,234.9" fill="#8080ff"/><polygon points="614.7,234.9 546.1,240.0 599.5,219.1" fill="#f040d0"/><polygon points="635.7,240.0 614.7,234.9 599.5,219.1" fill="#e0e0a0"/><polygon points="635.7,240.0 599.5,219.1 623.0,226.7" fill="#1020c0"/><polygon points="623.0,226.7 599.5,219.1 590.9,162.4" fill="#2090f0"/><polygon points="635.7,240.0 623.0,226.7 590.9,162.4" fill="#1020c0"/><polygon points="546.1,240.0 599.5,219.1 583.9,208.1" fill="#f040a0"/><polygon points="599.5,219.1 590.9,162.4 583.9,208.1" fill="#20c0f0"/><polygon points="546.1,240.0 583.9,208.1 556.0,194.0" fill="#e0e0a0"/><polygon points="583.9,208.1 590.9,162.4 556.0,194.0" fill="#208020"/><polygon points="635.7,240.0 590.9,162.4 632.0,227.2" fill="#20a0a0"/><polygon points="632.0,227.2 590.9,162.4 635.7,196.6" fill="#10d020"/><polygon points="635.7,240.0 632.0,227.2 635.7,196.6" fill="#80f080"/><polygon points="635.7,240.0 635.7,196.6 642.1,218.1" fill="#20a0a0"/><polygon points="642.1,218.1 635.7,196.6 680.5,162.4" fill="#f040d0"/><polygon points="635.7,240.0 642.1,218.1 680.5,162.4" fill="#208020"/><polygon points="590.9,162.4 635.7,196.6 633.4,175.2" fill="#1030e0"/><polygon points="635.7,196.6 680.5,162.4 633.4,175.2" fill="#1020c0"/><polygon points="590.9,162.4 633.4,175.2 635.7,148.0" fill="#c02060"/><polygon points="633.4,175.2 680.5,162.4 635.7,148.0" fill="#1020c0"/><polygon points="635.7,240.0 680.5,162.4 648.5,226.6" fill="#e0e0a0"/><polygon points="648.5,226.6 680.5,162.4 671.2,219.5" fill="#1020c0"/><polygon points="635.7,240.0 648.5,226.6 671.2,219.5" fill="#101030"/><polygon points="635.7,240.0 671.2,219.5 658.1,234.6" fill="#e020e0"/><polygon points="658.1,234.6 671.2,219.5 725.3,240.0" fill="#80f080"/><polygon points="635.7,240.0 658.1,234.6 725.3,240.0" fill="#20c0f0"/><polygon points="680.5,162.4 671.2,219.5 690.5,212.1" fill="#20c0f0"/><polygon points="671.2,219.5 725.3,240.0 690.5,212.1" fill="#40e0ff"/><polygon points="680.5,162.4 690.5,212.1 715.4,194.0" fill="#f040a0"/><polygon points="690.5,212.1 725.3,240.0 715.4,194.0" fill="#101030"/><polygon points="635.7,305.0 702.0,325.5 651.5,313.2" fill="#2090f0"/><polygon points="651.5,313.2 702.0,325.5 657.8,323.3" fill="#10e0e0"/><polygon points="635.7,305.0 651.5,313.2 657.8,323.3" fill="#8080ff"/><polygon points="635.7,305.0 657.8,323.3 646.0,318.1" fill="#40e0ff"/><polygon points="646.0,318.1 657.8,323.3 668.1,366.4" fill="#e020e0"/><polygon points="635.7,305.0 646.0,318.1 668.1,366.4" fill="#f06020"/><polygon points="702.0,325.5 657.8,323.3 673.8,341.9" fill="#208020"/><polygon points="657.8,323.3 668.1,366.4 673.8,341.9" fill="#40e0ff"/><polygon points="702.0,325.5 673.8,341.9 690.6,350.5" fill="#f040a0"/><polygon points="673.8,341.9 668.1,366.4 690.6,350.5" fill="#a0c0f0"/><polygon points="635.7,305.0 668.1,366.4 640.8,321.2" fill="#a0c0f0"/><polygon points="640.8,321.2 668.1,366.4 638.5,335.4" fill="#101030"/><polygon points="635.7,305.0 640.8,321.2 638.5,335.4" fill="#f06020"/><polygon points="635.7,305.0 638.5,335.4 633.5,323.3" fill="#101030"/><polygon points="633.5,323.3 638.5,335.4 615.2,371.3" fill="#e020e0"/><polygon points="635.7,305.0 633.5,323.3 615.2,371.3" fill="#1020c0"/><polygon points="668.1,366.4 638.5,335.4 640.0,355.0" fill="#8080ff"/><polygon points="638.5,335.4 615.2,371.3 640.0,355.0" fill="#6040c0"/><polygon points="668.1,366.4 640.0,355.0 642.3,376.0" fill="#f040d0"/><polygon points="640.0,355.0 615.2,371.3 642.3,376.0" fill="#8080ff"/><polygon points="635.7,305.0 615.2,371.3 628.4,319.1" fill="#10e0e0"/><polygon points="628.4,319.1 615.2,371.3 617.6,326.9" fill="#c02060"/><polygon points="635.7,305.0 628.4,319.1 617.6,326.9" fill="#101030"/><polygon points="635.7,305.0 617.6,326.9 624.4,313.9" fill="#6040c0"/><polygon points="624.4,313.9 617.6,326.9 574.3,337.4" fill="#1030e0"/><polygon points="635.7,305.0 624.4,313.9 574.3,337.4" fill="#f040d0"/><polygon points="615.2,371.3 617.6,326.9 603.6,343.7" fill="#f040a0"/><polygon points="617.6,326.9 574.3,337.4 603.6,343.7" fill="#a0c0f0"/><polygon points="615.2,371.3 603.6,343.7 590.2,359.9" fill="#f040d0"/><polygon points="603.6,343.7 574.3,337.4 590.2,359.9" fill="#6040c0"/><polygon points="635.7,305.0 574.3,337.4 624.6,308.5" fill="#40e0ff"/><polygon points="624.6,308.5 574.3,337.4 602.3,308.1" fill="#8080ff"/><polygon points="635.7,305.0 624.6,308.5 602.3,308.1" fill="#80f080"/><polygon points="635.7,305.0 602.3,308.1 626.1,303.8" fill="#40e0ff"/><polygon points="626.1,303.8 602.3,308.1 569.4,284.5" fill="#8080ff"/><polygon points="635.7,305.0 626.1,303.8 569.4,284.5" fill="#10d020"/><polygon points="574.3,337.4 602.3,308.1 584.3,307.9" fill="#80f080"/><polygon points="602.3,308.1 569.4,284.5 584.3,307.9" fill="#2090f0"/><polygon points="574.3,337.4 584.3,307.9 564.7,311.6" fill="#f06020"/><polygon points="584.3,307.9 569.4,284.5 564.7,311.6" fill="#10d020"/><polygon points="635.7,305.0 569.4,284.5 625.5,299.7" fill="#20a0a0"/><polygon points="625.5,299.7 569.4,284.5 614.4,287.3" fill="#10e0e0"/><polygon points="635.7,305.0 625.5,299.7 614.4,287.3" fill="#c02060"/><polygon points="635.7,305.0 614.4,287.3 627.8,294.9" fill="#101030"/><polygon points="627.8,294.9 614.4,287.3 603.3,243.6" fill="#a0c0f0"/><polygon points="635.7,305.0 627.8,294.9 603.3,243.6" fill="#6040c0"/><polygon points="569.4,284.5 614.4,287.3 598.5,277.3" fill="#e020e0"/><polygon points="614.4,287.3 603.3,243.6 598.5,277.3" fill="#20a0a0"/><polygon points="569.4,284.5 598.5,277.3 580.8,259.5" fill="#e0e0a0"/><polygon points="598.5,277.3 603.3,243.6 580.8,259.5" fill="#208020"/><polygon points="635.7,305.0 603.3,243.6 631.0,290.0" fill="#1030e0"/><polygon points="631.0,290.0 603.3,243.6 633.2,278.4" fill="#1030e0"/><polygon points="635.7,305.0 631.0,290.0 633.2,278.4" fill="#e020e0"/><polygon points="635.7,305.0 633.2,278.4 637.2,292.5" fill="#20a0a0"/><polygon points="637.2,292.5 633.2,278.4 656.2,238.7" fill="#40e0ff"/><polygon points="635.7,305.0 637.2,292.5 656.2,238.7" fill="#2090f0"/><polygon points="603.3,243.6 633.2,278.4 632.4,257.7" fill="#6040c0"/><polygon points="633.2,278.4 656.2,238.7 632.4,257.7" fill="#208020"/><polygon points="603.3,243.6 632.4,257.7 629.1,234.0" fill="#208020"/><polygon points="632.4,257.7 656.2,238.7 629.1,234.0" fill="#10d020"/><polygon points="635.7,305.0 656.2,238.7 643.8,289.3" fill="#6040c0"/><polygon points="643.8,289.3 656.2,238.7 652.3,284.9" fill="#2090f0"/><polygon points="635.7,305.0 643.8,289.3 652.3,284.9" fill="#101030"/><polygon points="635.7,305.0 652.3,284.9 645.2,297.6" fill="#1020c0"/><polygon points="645.2,297.6 652.3,284.9 697.1,272.6" fill="#10d020"/><polygon points="635.7,305.0 645.2,297.6 697.1,272.6" fill="#f040a0"/><polygon points="656.2,238.7 652.3,284.9 666.4,265.5" fill="#101030"/><polygon points="652.3,284.9 697.1,272.6 666.4,265.5" fill="#e020e0"/><polygon points="656.2,238.7 666.4,265.5 681.2,250.1" fill="#208020"/><polygon points="666.4,265.5 697.1,272.6 681.2,250.1" fill="#e0e040"/><polygon points="635.7,305.0 697.1,272.6 648.6,300.9" fill="#e020e0"/><polygon points="648.6,300.9 697.1,272.6 668.2,302.0" fill="#1020c0"/><polygon points="635.7,305.0 648.6,300.9 668.2,302.0" fill="#1030e0"/><polygon points="635.7,305.0 668.2,302.0 645.9,306.2" fill="#80f080"/><polygon points="645.9,306.2 668.2,302.0 702.0,325.5" fill="#10d020"/><polygon points="635.7,305.0 645.9,306.2 702.0,325.5" fill="#10d020"/><polygon points="697.1,272.6 668.2,302.0 682.6,304.3" fill="#20a0a0"/><polygon points="668.2,302.0 702.0,325.5 682.6,304.3" fill="#80f080"/><polygon points="697.1,272.6 682.6,304.3 706.7,298.4" fill="#20c0f0"/><polygon points="682.6,304.3 702.0,325.5 706.7,298.4" fill="#e0e0a0"/></g><g clip-path="url(#d2)" shape-rendering="crispEdges"><path d="M650.0 349.5 L662.0 360.0 L678.0 375.0 L688.0 392.0 L690.6 409.0 L688.0 430.0 L680.0 455.0 L668.0 478.0 L652.0 498.0 L635.7 509.5 L635.7 509.5 L619.4 498.0 L603.4 478.0 L591.4 455.0 L583.4 430.0 L580.8 409.0 L583.4 392.0 L593.4 375.0 L609.4 360.0 L621.4 349.5Z" fill="#4070c0"/><polygon points="635.7,470.0 725.3,470.0 650.7,473.6" fill="#a0c0f0"/><polygon points="650.7,473.6 725.3,470.0 669.7,489.7" fill="#101030"/><polygon points="635.7,470.0 650.7,473.6 669.7,489.7" fill="#f040a0"/><polygon points="635.7,470.0 669.7,489.7 648.2,483.1" fill="#10e0e0"/><polygon points="648.2,483.1 669.7,489.7 680.5,547.6" fill="#20c0f0"/><polygon points="635.7,470.0 648.2,483.1 680.5,547.6" fill="#1020c0"/><polygon points="725.3,470.0 669.7,489.7 694.8,502.2" fill="#80f080"/><polygon points="669.7,489.7 680.5,547.6 694.8,502.2" fill="#40e0ff"/><polygon points="725.3,470.0 694.8,502.2 715.4,516.0" fill="#f06020"/><polygon points="694.8,502.2 680.5,547.6 715.4,516.0" fill="#a0c0f0"/><polygon points="635.7,470.0 680.5,547.6 640.9,487.8" fill="#f040d0"/><polygon points="640.9,487.8 680.5,547.6 635.7,504.5" fill="#80f080"/><polygon points="635.7,470.0 640.9,487.8 635.7,504.5" fill="#e020e0"/><polygon points="635.7,470.0 635.7,504.5 629.5,491.1" fill="#f06020"/><polygon points="629.5,491.1 635.7,504.5 590.9,547.6" fill="#f040a0"/><polygon points="635.7,470.0 629.5,491.1 590.9,547.6" fill="#f040a0"/><polygon points="680.5,547.6 635.7,504.5 635.7,538.0" fill="#e0e0a0"/><polygon points="635.7,504.5 590.9,547.6 635.7,538.0" fill="#8080ff"/><polygon points="680.5,547.6 635.7,538.0 635.7,562.0" fill="#f040d0"/><polygon points="635.7,538.0 590.9,547.6 635.7,562.0" fill="#20a0a0"/><polygon points="635.7,470.0 590.9,547.6 625.6,480.6" fill="#6040c0"/><polygon points="625.6,480.6 590.9,547.6 600.5,490.3" fill="#8080ff"/><polygon points="635.7,470.0 625.6,480.6 600.5,490.3" fill="#1030e0"/><polygon points="635.7,470.0 600.5,490.3 619.2,474.0" fill="#10d020"/><polygon points="619.2,474.0 600.5,490.3 546.1,470.0" fill="#10d020"/><polygon points="635.7,470.0 619.2,474.0 546.1,470.0" fill="#e0e0a0"/><polygon points="590.9,547.6 600.5,490.3 581.2,503.8" fill="#40e0ff"/><polygon points="600.5,490.3 546.1,470.0 581.2,503.8" fill="#6040c0"/><polygon points="590.9,547.6 581.2,503.8 556.0,516.0" fill="#101030"/><polygon points="581.2,503.8 546.1,470.0 556.0,516.0" fill="#c02060"/><polygon points="635.7,470.0 546.1,470.0 613.7,464.7" fill="#208020"/><polygon points="613.7,464.7 546.1,470.0 599.0,448.8" fill="#1030e0"/><polygon points="635.7,470.0 613.7,464.7 599.0,448.8" fill="#e0e040"/><polygon points="635.7,470.0 599.0,448.8 620.3,453.9" fill="#2090f0"/><polygon points="620.3,453.9 599.0,448.8 590.9,392.4" fill="#20a0a0"/><polygon points="635.7,470.0 620.3,453.9 590.9,392.4" fill="#101030"/><polygon points="546.1,470.0 599.0,448.8 580.6,433.3" fill="#e020e0"/><polygon points="599.0,448.8 590.9,392.4 580.6,433.3" fill="#f040a0"/><polygon points="546.1,470.0 580.6,433.3 556.0,424.0" fill="#40e0ff"/><polygon points="580.6,433.3 590.9,392.4 556.0,424.0" fill="#40e0ff"/><polygon points="635.7,470.0 590.9,392.4 631.8,456.7" fill="#40e0ff"/><polygon points="631.8,456.7 590.9,392.4 635.7,432.0" fill="#f040d0"/><polygon points="635.7,470.0 631.8,456.7 635.7,432.0" fill="#208020"/><polygon points="635.7,470.0 635.7,432.0 641.6,449.9" fill="#10e0e0"/><polygon points="641.6,449.9 635.7,432.0 680.5,392.4" fill="#10e0e0"/><polygon points="635.7,470.0 641.6,449.9 680.5,392.4" fill="#101030"/><polygon points="590.9,392.4 635.7,432.0 633.4,404.9" fill="#f040a0"/><polygon points="635.7,432.0 680.5,392.4 633.4,404.9" fill="#20a0a0"/><polygon points="590.9,392.4 633.4,404.9 635.7,378.0" fill="#1030e0"/><polygon points="633.4,404.9 680.5,392.4 635.7,378.0" fill="#f040a0"/><polygon points="635.7,470.0 680.5,392.4 651.2,453.8" fill="#40e0ff"/><polygon points="651.2,453.8 680.5,392.4 666.2,452.4" fill="#10d020"/><polygon points="635.7,470.0 651.2,453.8 666.2,452.4" fill="#1020c0"/><polygon points="635.7,470.0 666.2,452.4 655.8,465.1" fill="#10e0e0"/><polygon points="655.8,465.1 666.2,452.4 725.3,470.0" fill="#40e0ff"/><polygon points="635.7,470.0 655.8,465.1 725.3,470.0" fill="#8080ff"/><polygon points="680.5,392.4 666.2,452.4 697.1,439.8" fill="#20c0f0"/><polygon points="666.2,452.4 725.3,470.0 697.1,439.8" fill="#20c0f0"/><polygon points="680.5,392.4 697.1,439.8 715.4,424.0" fill="#8080ff"/><polygon points="697.1,439.8 725.3,470.0 715.4,424.0" fill="#10e0e0"/><polygon points="635.7,404.5 702.0,425.0 645.8,409.7" fill="#20a0a0"/><polygon points="645.8,409.7 702.0,425.0 659.7,424.4" fill="#2090f0"/><polygon points="635.7,404.5 645.8,409.7 659.7,424.4" fill="#e0e0a0"/><polygon points="635.7,404.5 659.7,424.4 645.7,417.2" fill="#f040a0"/><polygon points="645.7,417.2 659.7,424.4 668.1,465.9" fill="#20c0f0"/><polygon points="635.7,404.5 645.7,417.2 668.1,465.9" fill="#10e0e0"/><polygon points="702.0,425.0 659.7,424.4 674.8,432.2" fill="#2090f0"/><polygon points="659.7,424.4 668.1,465.9 674.8,432.2" fill="#f040d0"/><polygon points="702.0,425.0 674.8,432.2 690.6,450.0" fill="#f06020"/><polygon points="674.8,432.2 668.1,465.9 690.6,450.0" fill="#8080ff"/><polygon points="635.7,404.5 668.1,465.9 640.5,419.6" fill="#80f080"/><polygon points="640.5,419.6 668.1,465.9 638.6,435.3" fill="#e0e0a0"/><polygon points="635.7,404.5 640.5,419.6 638.6,435.3" fill="#208020"/><polygon points="635.7,404.5 638.6,435.3 634.1,417.6" fill="#10e0e0"/><polygon points="634.1,417.6 638.6,435.3 615.2,470.8" fill="#e020e0"/><polygon points="635.7,404.5 634.1,417.6 615.2,470.8" fill="#f040a0"/><polygon points="668.1,465.9 638.6,435.3 639.9,455.5" fill="#e0e040"/><polygon points="638.6,435.3 615.2,470.8 639.9,455.5" fill="#208020"/><polygon points="668.1,465.9 639.9,455.5 642.3,475.5" fill="#1030e0"/><polygon points="639.9,455.5 615.2,470.8 642.3,475.5" fill="#f040d0"/><polygon points="635.7,404.5 615.2,470.8 631.0,413.6" fill="#c02060"/><polygon points="631.0,413.6 615.2,470.8 614.1,430.5" fill="#208020"/><polygon points="635.7,404.5 631.0,413.6 614.1,430.5" fill="#20c0f0"/><polygon points="635.7,404.5 614.1,430.5 622.2,415.1" fill="#80f080"/><polygon points="622.2,415.1 614.1,430.5 574.3,436.9" fill="#20a0a0"/><polygon points="635.7,404.5 622.2,415.1 574.3,436.9" fill="#1020c0"/><polygon points="615.2,470.8 614.1,430.5 606.9,441.1" fill="#101030"/><polygon points="614.1,430.5 574.3,436.9 606.9,441.1" fill="#2090f0"/><polygon points="615.2,470.8 606.9,441.1 590.2,459.4" fill="#20a0a0"/><polygon points="606.9,441.1 574.3,436.9 590.2,459.4" fill="#10d020"/><polygon points="635.7,404.5 574.3,436.9 621.7,408.9" fill="#20c0f0"/><polygon points="621.7,408.9 574.3,436.9 603.1,407.5" fill="#f06020"/><polygon points="635.7,404.5 621.7,408.9 603.1,407.5" fill="#10d020"/><polygon points="635.7,404.5 603.1,407.5 620.0,402.6" fill="#2090f0"/><polygon points="620.0,402.6 603.1,407.5 569.4,384.0" fill="#f06020"/><polygon points="635.7,404.5 620.0,402.6 569.4,384.0" fill="#1020c0"/><polygon points="574.3,436.9 603.1,407.5 583.6,408.4" fill="#101030"/><polygon points="603.1,407.5 569.4,384.0 583.6,408.4" fill="#208020"/><polygon points="574.3,436.9 583.6,408.4 564.7,411.1" fill="#80f080"/><polygon points="583.6,408.4 569.4,384.0 564.7,411.1" fill="#40e0ff"/><polygon points="635.7,404.5 569.4,384.0 621.9,397.3" fill="#40e0ff"/><polygon points="621.9,397.3 569.4,384.0 610.5,383.6" fill="#2090f0"/><polygon points="635.7,404.5 621.9,397.3 610.5,383.6" fill="#c02060"/><polygon points="635.7,404.5 610.5,383.6 625.9,392.0" fill="#40e0ff"/><polygon points="625.9,392.0 610.5,383.6 603.3,343.1" fill="#e020e0"/><polygon points="635.7,404.5 625.9,392.0 603.3,343.1" fill="#20a0a0"/><polygon points="569.4,384.0 610.5,383.6 596.7,375.6" fill="#f06020"/><polygon points="610.5,383.6 603.3,343.1 596.7,375.6" fill="#e020e0"/><polygon points="569.4,384.0 596.7,375.6 580.8,359.0" fill="#80f080"/><polygon points="596.7,375.6 603.3,343.1 580.8,359.0" fill="#101030"/><polygon points="635.7,404.5 603.3,343.1 632.3,393.7" fill="#20c0f0"/><polygon points="632.3,393.7 603.3,343.1 633.1,376.4" fill="#f06020"/><polygon points="635.7,404.5 632.3,393.7 633.1,376.4" fill="#20c0f0"/><polygon points="635.7,404.5 633.1,376.4 637.2,392.3" fill="#e0e040"/><polygon points="637.2,392.3 633.1,376.4 656.2,338.2" fill="#101030"/><polygon points="635.7,404.5 637.2,392.3 656.2,338.2" fill="#208020"/><polygon points="603.3,343.1 633.1,376.4 634.4,353.5" fill="#2090f0"/><polygon points="633.1,376.4 656.2,338.2 634.4,353.5" fill="#f040d0"/><polygon points="603.3,343.1 634.4,353.5 629.1,333.5" fill="#e0e0a0"/><polygon points="634.4,353.5 656.2,338.2 629.1,333.5" fill="#e0e040"/><polygon points="635.7,404.5 656.2,338.2 642.7,390.9" fill="#1030e0"/><polygon points="642.7,390.9 656.2,338.2 653.4,383.1" fill="#f06020"/><polygon points="635.7,404.5 642.7,390.9 653.4,383.1" fill="#20a0a0"/><polygon points="635.7,404.5 653.4,383.1 644.1,398.0" fill="#20a0a0"/><polygon points="644.1,398.0 653.4,383.1 697.1,372.1" fill="#208020"/><polygon points="635.7,404.5 644.1,398.0 697.1,372.1" fill="#e0e0a0"/><polygon points="656.2,338.2 653.4,383.1 669.2,364.1" fill="#f040a0"/><polygon points="653.4,383.1 697.1,372.1 669.2,364.1" fill="#e0e0a0"/><polygon points="656.2,338.2 669.2,364.1 681.2,349.6" fill="#101030"/><polygon points="669.2,364.1 697.1,372.1 681.2,349.6" fill="#a0c0f0"/><polygon points="635.7,404.5 697.1,372.1 645.4,401.4" fill="#1020c0"/><polygon points="645.4,401.4 697.1,372.1 663.4,401.9" fill="#1030e0"/><polygon points="635.7,404.5 645.4,401.4 663.4,401.9" fill="#40e0ff"/><polygon points="635.7,404.5 663.4,401.9 645.4,405.7" fill="#e020e0"/><polygon points="645.4,405.7 663.4,401.9 702.0,425.0" fill="#f040a0"/><polygon points="635.7,404.5 645.4,405.7 702.0,425.0" fill="#c02060"/><polygon points="697.1,372.1 663.4,401.9 685.4,403.8" fill="#2090f0"/><polygon points="663.4,401.9 702.0,425.0 685.4,403.8" fill="#101030"/><polygon points="697.1,372.1 685.4,403.8 706.7,397.9" fill="#101030"/><polygon points="685.4,403.8 702.0,425.0 706.7,397.9" fill="#c02060"/></g><g clip-path="url(#d3)" shape-rendering="crispEdges"><polygon points="635.7,353.0 669.3,353.0 643.9,354.5" fill="#10e0e0"/><polygon points="643.9,354.5 669.3,353.0 649.8,358.8" fill="#1020a0"/><polygon points="635.7,353.0 643.9,354.5 649.8,358.8" fill="#2090f0"/><polygon points="635.7,353.0 649.8,358.8 642.5,357.7" fill="#40c040"/><polygon points="642.5,357.7 649.8,358.8 659.5,376.8" fill="#10e0e0"/><polygon points="635.7,353.0 642.5,357.7 659.5,376.8" fill="#6040c0"/><polygon points="669.3,353.0 649.8,358.8 658.8,360.9" fill="#40c040"/><polygon points="649.8,358.8 659.5,376.8 658.8,360.9" fill="#f06020"/><polygon points="669.3,353.0 658.8,360.9 667.6,366.2" fill="#801a60"/><polygon points="658.8,360.9 659.5,376.8 667.6,366.2" fill="#801a60"/><polygon points="635.7,353.0 659.5,376.8 640.4,359.8" fill="#6040c0"/><polygon points="640.4,359.8 659.5,376.8 641.2,366.2" fill="#10e0e0"/><polygon points="635.7,353.0 640.4,359.8 641.2,366.2" fill="#f06020"/><polygon points="635.7,353.0 641.2,366.2 636.6,357.8" fill="#2090f0"/><polygon points="636.6,357.8 641.2,366.2 635.7,386.6" fill="#801a60"/><polygon points="635.7,353.0 636.6,357.8 635.7,386.6" fill="#2090f0"/><polygon points="659.5,376.8 641.2,366.2 643.8,377.4" fill="#1020a0"/><polygon points="641.2,366.2 635.7,386.6 643.8,377.4" fill="#10e0e0"/><polygon points="659.5,376.8 643.8,377.4 648.9,384.9" fill="#e0e0a0"/><polygon points="643.8,377.4 635.7,386.6 648.9,384.9" fill="#10e0e0"/><polygon points="635.7,353.0 635.7,386.6 634.2,361.5" fill="#e0e0a0"/><polygon points="634.2,361.5 635.7,386.6 630.3,366.1" fill="#1020a0"/><polygon points="635.7,353.0 634.2,361.5 630.3,366.1" fill="#2090f0"/><polygon points="635.7,353.0 630.3,366.1 633.0,357.0" fill="#2090f0"/><polygon points="633.0,357.0 630.3,366.1 611.9,376.8" fill="#10e0e0"/><polygon points="635.7,353.0 633.0,357.0 611.9,376.8" fill="#20a0a0"/><polygon points="635.7,386.6 630.3,366.1 628.1,376.4" fill="#1020a0"/><polygon points="630.3,366.1 611.9,376.8 628.1,376.4" fill="#1020a0"/><polygon points="635.7,386.6 628.1,376.4 622.5,384.9" fill="#e0e0a0"/><polygon points="628.1,376.4 611.9,376.8 622.5,384.9" fill="#f06020"/><polygon points="635.7,353.0 611.9,376.8 629.7,357.2" fill="#e0e0a0"/><polygon points="629.7,357.2 611.9,376.8 621.5,358.9" fill="#40c040"/><polygon points="635.7,353.0 629.7,357.2 621.5,358.9" fill="#20a0a0"/><polygon points="635.7,353.0 621.5,358.9 630.0,354.0" fill="#e0e0a0"/><polygon points="630.0,354.0 621.5,358.9 602.1,353.0" fill="#f06020"/><polygon points="635.7,353.0 630.0,354.0 602.1,353.0" fill="#1020a0"/><polygon points="611.9,376.8 621.5,358.9 612.1,362.7" fill="#40c040"/><polygon points="621.5,358.9 602.1,353.0 612.1,362.7" fill="#40c040"/><polygon points="611.9,376.8 612.1,362.7 603.8,366.2" fill="#6040c0"/><polygon points="612.1,362.7 602.1,353.0 603.8,366.2" fill="#10e0e0"/><polygon points="635.7,353.0 602.1,353.0 629.3,351.8" fill="#2090f0"/><polygon points="629.3,351.8 602.1,353.0 621.7,347.2" fill="#1020a0"/><polygon points="635.7,353.0 629.3,351.8 621.7,347.2" fill="#6040c0"/><polygon points="635.7,353.0 621.7,347.2 631.5,350.1" fill="#20a0a0"/><polygon points="631.5,350.1 621.7,347.2 611.9,329.2" fill="#6040c0"/><polygon points="635.7,353.0 631.5,350.1 611.9,329.2" fill="#20a0a0"/><polygon points="602.1,353.0 621.7,347.2 614.1,345.0" fill="#10e0e0"/><polygon points="621.7,347.2 611.9,329.2 614.1,345.0" fill="#e0e0a0"/><polygon points="602.1,353.0 614.1,345.0 603.8,339.8" fill="#10e0e0"/><polygon points="614.1,345.0 611.9,329.2 603.8,339.8" fill="#f06020"/><polygon points="635.7,353.0 611.9,329.2 632.4,348.2" fill="#20a0a0"/><polygon points="632.4,348.2 611.9,329.2 630.2,339.7" fill="#801a60"/><polygon points="635.7,353.0 632.4,348.2 630.2,339.7" fill="#10e0e0"/><polygon points="635.7,353.0 630.2,339.7 634.7,347.6" fill="#10e0e0"/><polygon points="634.7,347.6 630.2,339.7 635.7,319.4" fill="#1020a0"/><polygon points="635.7,353.0 634.7,347.6 635.7,319.4" fill="#2090f0"/><polygon points="611.9,329.2 630.2,339.7 626.7,330.6" fill="#f06020"/><polygon points="630.2,339.7 635.7,319.4 626.7,330.6" fill="#6040c0"/><polygon points="611.9,329.2 626.7,330.6 622.5,321.1" fill="#1020a0"/><polygon points="626.7,330.6 635.7,319.4 622.5,321.1" fill="#e0e0a0"/><polygon points="635.7,353.0 635.7,319.4 636.7,347.7" fill="#1020a0"/><polygon points="636.7,347.7 635.7,319.4 641.6,338.6" fill="#e0e0a0"/><polygon points="635.7,353.0 636.7,347.7 641.6,338.6" fill="#e0e0a0"/><polygon points="635.7,353.0 641.6,338.6 640.7,345.7" fill="#40c040"/><polygon points="640.7,345.7 641.6,338.6 659.5,329.2" fill="#40c040"/><polygon points="635.7,353.0 640.7,345.7 659.5,329.2" fill="#2090f0"/><polygon points="635.7,319.4 641.6,338.6 644.3,331.3" fill="#10e0e0"/><polygon points="641.6,338.6 659.5,329.2 644.3,331.3" fill="#f06020"/><polygon points="635.7,319.4 644.3,331.3 648.9,321.1" fill="#1020a0"/><polygon points="644.3,331.3 659.5,329.2 648.9,321.1" fill="#10e0e0"/><polygon points="635.7,353.0 659.5,329.2 640.5,349.7" fill="#f06020"/><polygon points="640.5,349.7 659.5,329.2 649.8,347.2" fill="#10e0e0"/><polygon points="635.7,353.0 640.5,349.7 649.8,347.2" fill="#1020a0"/><polygon points="635.7,353.0 649.8,347.2 640.1,352.2" fill="#f06020"/><polygon points="640.1,352.2 649.8,347.2 669.3,353.0" fill="#40c040"/><polygon points="635.7,353.0 640.1,352.2 669.3,353.0" fill="#e0e0a0"/><polygon points="659.5,329.2 649.8,347.2 658.9,342.0" fill="#2090f0"/><polygon points="649.8,347.2 669.3,353.0 658.9,342.0" fill="#2090f0"/><polygon points="659.5,329.2 658.9,342.0 667.6,339.8" fill="#e0e0a0"/><polygon points="658.9,342.0 669.3,353.0 667.6,339.8" fill="#2090f0"/></g><path d="M612 278 L635.7 262 V304 L615 300Z" fill="#a8c4f2"/><path d="M659 278 L635.7 262 V304 L656 300Z" fill="#e6f2fa"/><path d="M612 430 L635.7 446 V404 L615 408Z" fill="#a8c4f2"/><path d="M659 430 L635.7 446 V404 L656 408Z" fill="#e6f2fa"/><circle cx="636" cy="243" r="26" fill="#fff"/><circle cx="598" cy="284" r="13" fill="#fff"/><path d="M790.0 244.0 L837.0 213.8 L854.7 225.5 L886.0 253.0 L901.9 264.9 L923.5 284.5 L931.0 304.0 L941.0 333.6 L937.0 343.5 L941.0 351.0 L931.0 388.7 L898.0 436.0 L866.0 455.0 L833.0 471.0 L787.0 477.0 L798.5 435.7 L805.5 375.0 L805.5 343.5 L803.0 304.7 L796.0 272.0Z" fill="#fff6a0" opacity="0.85" filter="url(#gl)"/><g clip-path="url(#fanclip)" shape-rendering="crispEdges"><path d="M790.0 244.0 L837.0 213.8 L854.7 225.5 L886.0 253.0 L901.9 264.9 L923.5 284.5 L931.0 304.0 L941.0 333.6 L937.0 343.5 L941.0 351.0 L931.0 388.7 L898.0 436.0 L866.0 455.0 L833.0 471.0 L787.0 477.0 L798.5 435.7 L805.5 375.0 L805.5 343.5 L803.0 304.7 L796.0 272.0Z" fill="#20a020"/><polygon points="805.5,343.5 790.0,244.0 803.9,283.6" fill="#20f0c0"/><polygon points="805.5,343.5 803.9,283.6 815.0,225.0" fill="#3a70e0"/><polygon points="803.9,283.6 790.0,244.0 815.0,225.0" fill="#0a8a20"/><polygon points="805.5,343.5 815.0,225.0 816.8,275.2" fill="#f080c0"/><polygon points="805.5,343.5 816.8,275.2 837.0,213.8" fill="#0a8a20"/><polygon points="816.8,275.2 815.0,225.0 837.0,213.8" fill="#20a020"/><polygon points="805.5,343.5 837.0,213.8 827.7,275.4" fill="#2060d0"/><polygon points="805.5,343.5 827.7,275.4 854.7,225.5" fill="#4a1a5a"/><polygon points="827.7,275.4 837.0,213.8 854.7,225.5" fill="#50a050"/><polygon points="805.5,343.5 854.7,225.5 836.8,282.6" fill="#f0a0f0"/><polygon points="805.5,343.5 836.8,282.6 870.0,240.0" fill="#f080c0"/><polygon points="836.8,282.6 854.7,225.5 870.0,240.0" fill="#10c040"/><polygon points="805.5,343.5 870.0,240.0 845.4,290.1" fill="#50a050"/><polygon points="805.5,343.5 845.4,290.1 886.0,253.0" fill="#e8e030"/><polygon points="845.4,290.1 870.0,240.0 886.0,253.0" fill="#0a3a10"/><polygon points="805.5,343.5 886.0,253.0 854.1,297.0" fill="#f0e020"/><polygon points="805.5,343.5 854.1,297.0 901.9,264.9" fill="#20f0c0"/><polygon points="854.1,297.0 886.0,253.0 901.9,264.9" fill="#f0e020"/><polygon points="805.5,343.5 901.9,264.9 864.5,305.7" fill="#4a1a5a"/><polygon points="805.5,343.5 864.5,305.7 923.5,284.5" fill="#40e040"/><polygon points="864.5,305.7 901.9,264.9 923.5,284.5" fill="#0a8a20"/><polygon points="805.5,343.5 923.5,284.5 872.5,316.4" fill="#0a3a10"/><polygon points="805.5,343.5 872.5,316.4 931.0,304.0" fill="#f09000"/><polygon points="872.5,316.4 923.5,284.5 931.0,304.0" fill="#40e040"/><polygon points="805.5,343.5 931.0,304.0 877.3,329.9" fill="#3a70e0"/><polygon points="805.5,343.5 877.3,329.9 941.0,333.6" fill="#3a70e0"/><polygon points="877.3,329.9 931.0,304.0 941.0,333.6" fill="#20a020"/><polygon points="805.5,343.5 941.0,333.6 885.2,340.9" fill="#ffe040"/><polygon points="805.5,343.5 885.2,340.9 960.0,344.0" fill="#50a050"/><polygon points="885.2,340.9 941.0,333.6 960.0,344.0" fill="#20f0c0"/><polygon points="805.5,343.5 960.0,344.0 885.2,345.7" fill="#50a050"/><polygon points="805.5,343.5 885.2,345.7 941.0,351.0" fill="#4a1a5a"/><polygon points="885.2,345.7 960.0,344.0 941.0,351.0" fill="#0a8a20"/><polygon points="805.5,343.5 941.0,351.0 877.3,358.0" fill="#f080c0"/><polygon points="805.5,343.5 877.3,358.0 931.0,388.7" fill="#0a8a20"/><polygon points="877.3,358.0 941.0,351.0 931.0,388.7" fill="#ffe040"/><polygon points="805.5,343.5 931.0,388.7 870.1,374.8" fill="#ffe040"/><polygon points="805.5,343.5 870.1,374.8 915.0,412.0" fill="#0a8a20"/><polygon points="870.1,374.8 931.0,388.7 915.0,412.0" fill="#50a050"/><polygon points="805.5,343.5 915.0,412.0 861.0,387.8" fill="#80c0ff"/><polygon points="805.5,343.5 861.0,387.8 898.0,436.0" fill="#f0a0f0"/><polygon points="861.0,387.8 915.0,412.0 898.0,436.0" fill="#50a050"/><polygon points="805.5,343.5 898.0,436.0 851.4,397.4" fill="#ffe040"/><polygon points="805.5,343.5 851.4,397.4 880.0,447.0" fill="#20a020"/><polygon points="851.4,397.4 898.0,436.0 880.0,447.0" fill="#0a8a20"/><polygon points="805.5,343.5 880.0,447.0 842.6,402.6" fill="#3a70e0"/><polygon points="805.5,343.5 842.6,402.6 866.0,455.0" fill="#ffe040"/><polygon points="842.6,402.6 880.0,447.0 866.0,455.0" fill="#20a020"/><polygon points="805.5,343.5 866.0,455.0 834.4,407.0" fill="#a0e060"/><polygon points="805.5,343.5 834.4,407.0 850.0,463.0" fill="#80c0ff"/><polygon points="834.4,407.0 866.0,455.0 850.0,463.0" fill="#ffe040"/><polygon points="805.5,343.5 850.0,463.0 825.3,411.4" fill="#50a050"/><polygon points="805.5,343.5 825.3,411.4 833.0,471.0" fill="#20a020"/><polygon points="825.3,411.4 850.0,463.0 833.0,471.0" fill="#20f0c0"/><polygon points="805.5,343.5 833.0,471.0 814.3,414.7" fill="#80c0ff"/><polygon points="805.5,343.5 814.3,414.7 810.0,475.0" fill="#e8e030"/><polygon points="814.3,414.7 833.0,471.0 810.0,475.0" fill="#50a050"/><polygon points="805.5,343.5 810.0,475.0 801.6,416.4" fill="#20a020"/><polygon points="805.5,343.5 801.6,416.4 787.0,477.0" fill="#c01030"/><polygon points="801.6,416.4 810.0,475.0 787.0,477.0" fill="#0a3a10"/><polygon points="837.0,213.8 886.0,253.0 864.0,276.0" fill="#ffc0d0"/><polygon points="886.0,253.0 923.5,284.5 901.0,300.0" fill="#f0e030"/><polygon points="923.5,284.5 941.0,333.6 915.0,312.0" fill="#f0d000"/><polygon points="833.0,233.0 864.0,276.0 837.0,213.8" fill="#f0e030"/><polygon points="864.0,276.0 901.0,300.0 886.0,253.0" fill="#b01020"/><polygon points="787.0,477.0 833.0,471.0 812.0,452.0" fill="#b01020"/><polygon points="833.0,471.0 898.0,436.0 860.0,440.0" fill="#c01020"/><polygon points="898.0,436.0 941.0,351.0 915.0,385.0" fill="#5a5020"/><polygon points="860.0,440.0 898.0,436.0 880.0,405.0" fill="#5a5020"/><polygon points="931.0,388.7 941.0,351.0 898.0,436.0" fill="#b01020"/><polygon points="864.0,276.0 901.0,300.0 875.0,305.0" fill="#ffd000"/><polygon points="901.0,300.0 941.0,337.6 910.0,325.0" fill="#f0d000"/><polygon points="880.0,405.0 941.0,351.0 905.0,395.0" fill="#ffa0c0"/><polygon points="830.0,440.0 880.0,405.0 850.0,440.0" fill="#605020"/><polygon points="790,244 796,250 806,300 812,343.5 806,390 796,440 787,477 794,420 805.5,343.5 797,290" fill="#0a3a10"/><polygon points="793,260 799,262 806,330 801,333" fill="#f0d000"/><polygon points="790,420 797,400 802,380 795,440" fill="#3040d0"/><polygon points="805.5,343.5 840,337 870,343.5 840,350" fill="#4a1a5a"/></g><line x1="833" y1="233" x2="941" y2="337.6" stroke="#f8f0c8" stroke-width="1.4"/><line x1="788" y1="475" x2="941" y2="351" stroke="#f8f0c8" stroke-width="1.4"/><line x1="864" y1="276" x2="841" y2="300" stroke="#f8f0c8" stroke-width="1.4"/><line x1="901" y1="300" x2="870" y2="320" stroke="#f8f0c8" stroke-width="1.4"/><line x1="830" y1="440" x2="850" y2="395" stroke="#f8f0c8" stroke-width="1.4"/><line x1="880" y1="405" x2="870" y2="370" stroke="#f8f0c8" stroke-width="1.4"/><line x1="837" y1="213.8" x2="864" y2="276" stroke="#f8f0c8" stroke-width="1.4"/><line x1="864" y1="276" x2="901" y2="300" stroke="#f8f0c8" stroke-width="1.4"/><line x1="787" y1="477" x2="830" y2="440" stroke="#f8f0c8" stroke-width="1.4"/><line x1="830" y1="440" x2="880" y2="405" stroke="#f8f0c8" stroke-width="1.4"/><circle cx="808" cy="225" r="26" fill="#fff"/><path d="M102.0 509.0 L122.0 482.0 L129.0 473.0 L168.0 432.0 L178.0 430.0 L210.0 440.0 L241.0 442.0 L246.0 455.0 L265.0 471.0 L278.0 487.0 L285.0 502.0 L262.0 513.0 L239.0 523.0 L197.0 541.0 L150.0 565.0Z" fill="#ffe0a0" opacity="0.75" filter="url(#gl)"/><g clip-path="url(#sf201)" shape-rendering="crispEdges"><path d="M102.0 509.0 L125.0 490.0 L150.0 532.0 L150.0 563.0Z" fill="#146022"/><polygon points="100.0,439.2 108.7,446.9 117.3,454.9 126.0,462.5 134.7,470.4 143.3,478.5 152.0,485.7 152.0,502.1 143.3,494.8 134.7,486.7 126.0,478.9 117.3,471.2 108.7,463.4 100.0,455.7" fill="#146022"/><polygon points="100.0,451.2 108.7,459.5 117.3,467.0 126.0,475.1 134.7,482.8 143.3,490.4 152.0,498.5 152.0,507.4 143.3,499.8 134.7,491.9 126.0,484.2 117.3,476.3 108.7,468.4 100.0,460.6" fill="#0e5a1e"/><polygon points="100.0,458.4 108.7,466.0 117.3,473.8 126.0,481.6 134.7,489.7 143.3,497.1 152.0,505.2 152.0,518.9 143.3,511.0 134.7,503.3 126.0,495.3 117.3,487.5 108.7,480.1 100.0,472.1" fill="#146022"/><polygon points="100.0,468.8 108.7,476.6 117.3,484.1 126.0,492.3 134.7,500.0 143.3,507.7 152.0,515.5 152.0,527.3 143.3,519.0 134.7,511.5 126.0,503.7 117.3,496.0 108.7,488.0 100.0,480.2" fill="#146022"/><polygon points="100.0,477.7 108.7,485.3 117.3,492.7 126.0,500.8 134.7,508.8 143.3,516.6 152.0,524.5 152.0,541.5 143.3,533.3 134.7,525.5 126.0,517.8 117.3,509.8 108.7,502.2 100.0,494.1" fill="#146022"/><polygon points="100.0,489.9 108.7,497.7 117.3,505.9 126.0,513.8 134.7,521.5 143.3,529.0 152.0,537.2 152.0,550.6 143.3,542.8 134.7,535.3 126.0,527.3 117.3,519.6 108.7,511.5 100.0,503.7" fill="#146022"/><polygon points="100.0,500.3 108.7,508.2 117.3,516.2 126.0,523.7 134.7,531.7 143.3,539.6 152.0,547.0 152.0,564.7 143.3,556.6 134.7,549.0 126.0,541.0 117.3,533.6 108.7,525.4 100.0,517.8" fill="#146022"/><polygon points="100.0,513.6 108.7,521.0 117.3,529.1 126.0,536.7 134.7,544.5 143.3,552.8 152.0,560.2 152.0,572.1 143.3,564.6 134.7,556.8 126.0,548.8 117.3,541.1 108.7,533.0 100.0,525.5" fill="#1a6a28"/><polygon points="100.0,522.7 108.7,530.2 117.3,537.9 126.0,546.0 134.7,553.4 143.3,561.5 152.0,569.2 152.0,578.2 143.3,570.4 134.7,562.6 126.0,555.1 117.3,547.4 108.7,539.2 100.0,531.8" fill="#146022"/><polygon points="100.0,529.6 108.7,537.2 117.3,545.0 126.0,552.5 134.7,560.8 143.3,568.5 152.0,575.9 152.0,595.2 143.3,587.0 134.7,579.4 126.0,571.6 117.3,564.0 108.7,556.2 100.0,548.4" fill="#1a6a28"/><polygon points="100.0,543.4 108.7,551.2 117.3,559.0 126.0,566.9 134.7,574.4 143.3,582.2 152.0,590.3 152.0,604.0 143.3,595.9 134.7,588.0 126.0,580.2 117.3,572.2 108.7,564.6 100.0,556.9" fill="#146022"/><polygon points="100.0,553.6 108.7,561.0 117.3,569.1 126.0,576.8 134.7,584.6 143.3,592.6 152.0,600.4 152.0,619.6 143.3,611.5 134.7,603.4 126.0,596.2 117.3,588.4 108.7,580.4 100.0,572.3" fill="#0e5a1e"/><polygon points="100.0,567.7 108.7,575.4 117.3,583.5 126.0,591.3 134.7,599.1 143.3,606.5 152.0,614.7 152.0,630.5 143.3,622.7 134.7,614.7 126.0,607.3 117.3,599.2 108.7,591.7 100.0,583.9" fill="#146022"/><polygon points="100.0,579.7 108.7,587.5 117.3,595.1 126.0,603.0 134.7,610.7 143.3,618.8 152.0,626.7 152.0,644.5 143.3,637.0 134.7,629.0 126.0,621.2 117.3,613.4 108.7,605.5 100.0,598.2" fill="#146022"/><polygon points="100.0,593.4 108.7,601.3 117.3,608.8 126.0,616.7 134.7,624.8 143.3,632.1 152.0,640.4 152.0,658.1 143.3,650.2 134.7,642.3 126.0,634.7 117.3,626.4 108.7,619.1 100.0,611.2" fill="#146022"/><polygon points="100.0,606.7 108.7,614.2 117.3,622.5 126.0,630.1 134.7,638.1 143.3,645.7 152.0,653.5 152.0,667.3 143.3,660.0 134.7,652.0 126.0,644.4 117.3,636.4 108.7,628.4 100.0,620.9" fill="#146022"/></g><path d="M102.0 509.0 L125.0 490.0 L150.0 532.0 L150.0 563.0Z" fill="none" stroke="#f4f0d0" stroke-width="0.7" opacity="0.8"/><g clip-path="url(#sf202)" shape-rendering="crispEdges"><path d="M118.0 492.0 L132.0 470.0 L195.0 497.0 L190.0 518.0 L150.0 532.0Z" fill="#f0e040"/><polygon points="116.0,423.8 129.5,430.4 143.0,437.2 156.5,444.9 170.0,451.7 183.5,459.2 197.0,466.2 197.0,471.1 183.5,464.9 170.0,457.1 156.5,451.1 143.0,443.4 129.5,436.3 116.0,430.0" fill="#e8f0f0"/><polygon points="116.0,427.4 129.5,435.4 143.0,441.3 156.5,448.7 170.0,456.7 183.5,462.4 197.0,470.7 197.0,475.7 183.5,468.9 170.0,460.9 156.5,454.2 143.0,446.8 129.5,440.5 116.0,433.1" fill="#2030e8"/><polygon points="116.0,431.1 129.5,438.4 143.0,446.6 156.5,453.2 170.0,459.6 183.5,466.8 197.0,473.8 197.0,479.5 183.5,472.2 170.0,466.1 156.5,458.4 143.0,451.8 129.5,444.2 116.0,437.0" fill="#f0e040"/><polygon points="116.0,435.8 129.5,442.6 143.0,450.1 156.5,456.9 170.0,464.2 183.5,470.9 197.0,478.3 197.0,482.0 183.5,476.5 170.0,468.5 156.5,461.1 143.0,454.8 129.5,447.5 116.0,439.9" fill="#106030"/><polygon points="116.0,439.3 129.5,445.9 143.0,453.0 156.5,460.8 170.0,467.3 183.5,475.3 197.0,481.1 197.0,491.1 183.5,483.4 170.0,477.2 156.5,470.7 143.0,463.5 129.5,456.6 116.0,449.7" fill="#1020c0"/><polygon points="116.0,447.1 129.5,453.9 143.0,461.0 156.5,467.6 170.0,475.1 183.5,482.2 197.0,489.2 197.0,493.9 183.5,488.0 170.0,480.7 156.5,473.0 143.0,465.9 129.5,459.4 116.0,451.9" fill="#e8f0f0"/><polygon points="116.0,450.5 129.5,458.5 143.0,465.0 156.5,472.1 170.0,479.0 183.5,485.6 197.0,493.0 197.0,496.3 183.5,489.4 170.0,482.5 156.5,475.5 143.0,467.3 129.5,460.6 116.0,454.3" fill="#2030e8"/><polygon points="116.0,453.2 129.5,459.6 143.0,466.6 156.5,473.6 170.0,481.5 183.5,488.5 197.0,496.0 197.0,499.7 183.5,493.1 170.0,486.6 156.5,478.5 143.0,472.5 129.5,464.3 116.0,458.2" fill="#f0e040"/><polygon points="116.0,456.4 129.5,463.1 143.0,470.7 156.5,477.6 170.0,484.8 183.5,492.4 197.0,498.4 197.0,504.9 183.5,498.1 170.0,490.5 156.5,483.7 143.0,477.3 129.5,470.0 116.0,462.3" fill="#f0e040"/><polygon points="116.0,461.5 129.5,467.9 143.0,475.5 156.5,481.8 170.0,489.8 183.5,496.3 197.0,503.0 197.0,507.4 183.5,499.9 170.0,492.7 156.5,486.9 143.0,479.3 129.5,471.6 116.0,465.8" fill="#1020c0"/><polygon points="116.0,464.8 129.5,471.3 143.0,477.7 156.5,485.8 170.0,492.5 183.5,499.7 197.0,505.8 197.0,511.5 183.5,503.4 170.0,497.0 156.5,489.6 143.0,482.2 129.5,475.1 116.0,468.9" fill="#1020c0"/><polygon points="116.0,468.0 129.5,473.8 143.0,481.8 156.5,488.7 170.0,495.8 183.5,503.3 197.0,510.3 197.0,517.0 183.5,511.0 170.0,503.3 156.5,496.2 143.0,489.1 129.5,482.9 116.0,474.5" fill="#e8f0f0"/><polygon points="116.0,473.7 129.5,480.8 143.0,487.3 156.5,494.2 170.0,501.8 183.5,509.0 197.0,516.1 197.0,521.0 183.5,513.8 170.0,506.2 156.5,500.2 143.0,492.9 129.5,485.8 116.0,478.1" fill="#1020c0"/><polygon points="116.0,477.0 129.5,484.9 143.0,491.6 156.5,498.0 170.0,505.5 183.5,512.2 197.0,519.1 197.0,525.8 183.5,519.3 170.0,511.3 156.5,504.4 143.0,498.0 129.5,490.9 116.0,484.2" fill="#e8f0f0"/><polygon points="116.0,482.2 129.5,489.6 143.0,496.5 156.5,503.7 170.0,510.9 183.5,516.7 197.0,523.9 197.0,531.3 183.5,523.4 170.0,517.4 156.5,509.7 143.0,503.8 129.5,495.9 116.0,488.6" fill="#e8f0f0"/><polygon points="116.0,488.0 129.5,495.1 143.0,500.7 156.5,508.8 170.0,515.2 183.5,523.1 197.0,529.8 197.0,534.7 183.5,527.5 170.0,519.7 156.5,512.7 143.0,505.2 129.5,498.3 116.0,492.7" fill="#106030"/><polygon points="116.0,490.1 129.5,497.7 143.0,504.8 156.5,511.3 170.0,519.1 183.5,525.3 197.0,533.1 197.0,541.2 183.5,533.0 170.0,525.8 156.5,519.8 143.0,513.1 129.5,505.6 116.0,498.3" fill="#e8f0f0"/><polygon points="116.0,496.7 129.5,503.9 143.0,510.6 156.5,517.4 170.0,525.4 183.5,531.7 197.0,538.0 197.0,547.3 183.5,539.5 170.0,532.7 156.5,526.0 143.0,518.6 129.5,511.8 116.0,505.3" fill="#ff60c0"/><polygon points="116.0,502.9 129.5,509.5 143.0,517.8 156.5,523.7 170.0,531.6 183.5,537.8 197.0,545.3 197.0,553.8 183.5,547.8 170.0,540.6 156.5,533.1 143.0,525.9 129.5,518.6 116.0,512.0" fill="#106030"/><polygon points="116.0,510.4 129.5,516.3 143.0,523.2 156.5,530.6 170.0,538.4 183.5,544.5 197.0,552.2 197.0,555.0 183.5,548.1 170.0,540.6 156.5,534.3 143.0,527.8 129.5,520.6 116.0,512.7" fill="#e8f0f0"/><polygon points="116.0,513.1 129.5,519.9 143.0,525.6 156.5,533.2 170.0,539.7 183.5,546.6 197.0,554.9 197.0,560.1 183.5,553.6 170.0,547.0 156.5,539.6 143.0,533.3 129.5,525.4 116.0,518.0" fill="#e8f0f0"/><polygon points="116.0,517.3 129.5,524.3 143.0,530.6 156.5,537.6 170.0,544.6 183.5,552.5 197.0,559.4 197.0,567.7 183.5,560.8 170.0,553.6 156.5,546.1 143.0,539.8 129.5,533.2 116.0,525.0" fill="#1020c0"/><polygon points="116.0,523.6 129.5,531.0 143.0,537.4 156.5,543.6 170.0,551.1 183.5,558.7 197.0,564.7 197.0,568.4 183.5,561.9 170.0,554.7 156.5,548.1 143.0,540.9 129.5,533.9 116.0,527.5" fill="#f0e040"/><polygon points="116.0,525.5 129.5,532.8 143.0,540.3 156.5,547.1 170.0,554.8 183.5,560.8 197.0,568.1 197.0,573.5 183.5,566.5 170.0,560.4 156.5,552.6 143.0,545.1 129.5,538.6 116.0,531.6" fill="#2040ff"/><polygon points="116.0,529.7 129.5,537.8 143.0,544.2 156.5,551.6 170.0,558.7 183.5,565.5 197.0,572.5 197.0,580.6 183.5,573.4 170.0,566.4 156.5,559.5 143.0,552.2 129.5,546.5 116.0,539.5" fill="#2030e8"/><polygon points="116.0,537.5 129.5,543.3 143.0,551.6 156.5,558.2 170.0,564.3 183.5,571.4 197.0,578.4 197.0,587.2 183.5,580.7 170.0,573.1 156.5,565.8 143.0,559.2 129.5,552.5 116.0,545.5" fill="#e8f0f0"/><polygon points="116.0,543.5 129.5,549.9 143.0,557.3 156.5,564.4 170.0,571.8 183.5,578.0 197.0,584.8 197.0,590.5 183.5,584.1 170.0,577.4 156.5,570.0 143.0,562.0 129.5,555.3 116.0,548.8" fill="#106030"/><polygon points="116.0,547.6 129.5,553.6 143.0,561.5 156.5,568.5 170.0,575.3 183.5,582.5 197.0,589.3 197.0,595.3 183.5,588.8 170.0,581.0 156.5,573.4 143.0,567.3 129.5,560.5 116.0,552.1" fill="#106030"/><polygon points="116.0,552.1 129.5,557.8 143.0,565.5 156.5,572.3 170.0,579.1 183.5,586.2 197.0,593.1 197.0,599.7 183.5,592.3 170.0,585.9 156.5,578.5 143.0,571.8 129.5,564.3 116.0,558.2" fill="#1020c0"/><polygon points="116.0,556.9 129.5,563.0 143.0,570.0 156.5,577.6 170.0,583.6 183.5,591.8 197.0,597.8 197.0,606.0 183.5,598.3 170.0,591.3 156.5,585.3 143.0,577.9 129.5,571.2 116.0,562.9" fill="#1020c0"/><polygon points="116.0,562.4 129.5,568.8 143.0,575.8 156.5,583.1 170.0,590.3 183.5,596.4 197.0,603.0 197.0,607.3 183.5,600.2 170.0,593.0 156.5,587.3 143.0,579.3 129.5,573.0 116.0,565.9" fill="#f0e040"/><polygon points="116.0,564.3 129.5,572.2 143.0,578.8 156.5,586.3 170.0,592.5 183.5,599.9 197.0,606.7 197.0,612.3 183.5,605.0 170.0,598.6 156.5,590.8 143.0,584.9 129.5,578.2 116.0,569.7" fill="#2030e8"/><polygon points="116.0,568.7 129.5,576.1 143.0,582.7 156.5,590.0 170.0,597.4 183.5,604.8 197.0,610.5 197.0,618.4 183.5,610.4 170.0,604.4 156.5,597.5 143.0,590.9 129.5,583.8 116.0,576.5" fill="#2030e8"/><polygon points="116.0,574.4 129.5,580.8 143.0,587.9 156.5,595.7 170.0,602.8 183.5,610.0 197.0,616.8 197.0,624.1 183.5,616.9 170.0,609.0 156.5,601.8 143.0,595.3 129.5,588.7 116.0,581.0" fill="#e8f0f0"/></g><path d="M118.0 492.0 L132.0 470.0 L195.0 497.0 L190.0 518.0 L150.0 532.0Z" fill="none" stroke="#f4f0d0" stroke-width="0.7" opacity="0.8"/><g clip-path="url(#sf203)" shape-rendering="crispEdges"><path d="M150.0 532.0 L190.0 518.0 L285.0 484.0 L285.0 502.0 L150.0 565.0Z" fill="#f080ff"/><polygon points="148.0,421.6 171.2,410.4 194.3,403.7 217.5,391.6 240.7,381.9 263.8,373.8 287.0,362.0 287.0,367.2 263.8,375.0 240.7,386.4 217.5,394.1 194.3,404.6 171.2,416.7 148.0,426.2" fill="#2060d0"/><polygon points="148.0,424.3 171.2,414.3 194.3,406.0 217.5,394.7 240.7,383.9 263.8,376.8 287.0,364.5 287.0,371.6 263.8,382.2 240.7,392.3 217.5,401.1 194.3,410.3 171.2,418.9 148.0,429.7" fill="#2060d0"/><polygon points="148.0,428.9 171.2,418.0 194.3,408.4 217.5,400.7 240.7,390.3 263.8,380.7 287.0,371.0 287.0,372.0 263.8,381.8 240.7,391.4 217.5,401.7 194.3,411.7 171.2,421.8 148.0,432.8" fill="#20e060"/><polygon points="148.0,431.8 171.2,422.0 194.3,412.8 217.5,402.2 240.7,390.5 263.8,383.8 287.0,372.0 287.0,375.7 263.8,385.1 240.7,396.4 217.5,407.0 194.3,417.0 171.2,424.1 148.0,435.2" fill="#2060d0"/><polygon points="148.0,434.8 171.2,424.7 194.3,415.8 217.5,406.3 240.7,393.7 263.8,385.4 287.0,376.8 287.0,384.6 263.8,391.8 240.7,404.3 217.5,412.7 194.3,422.2 171.2,432.0 148.0,442.7" fill="#ff60c0"/><polygon points="148.0,438.7 171.2,429.1 194.3,421.6 217.5,410.5 240.7,400.4 263.8,390.1 287.0,381.0 287.0,384.0 263.8,394.0 240.7,403.8 217.5,412.9 194.3,422.7 171.2,432.2 148.0,442.6" fill="#60a0ff"/><polygon points="148.0,444.0 171.2,432.1 194.3,421.9 217.5,414.3 240.7,404.4 263.8,395.3 287.0,383.7 287.0,390.8 263.8,400.3 240.7,409.5 217.5,419.6 194.3,428.7 171.2,438.6 148.0,449.1" fill="#f080ff"/><polygon points="148.0,445.6 171.2,435.6 194.3,425.6 217.5,418.6 240.7,407.9 263.8,399.2 287.0,387.2 287.0,395.7 263.8,404.0 240.7,414.2 217.5,425.1 194.3,435.1 171.2,443.5 148.0,454.7" fill="#e06030"/><polygon points="148.0,451.6 171.2,441.0 194.3,431.1 217.5,422.5 240.7,413.7 263.8,404.7 287.0,393.2 287.0,400.1 263.8,409.6 240.7,418.7 217.5,428.7 194.3,437.3 171.2,448.3 148.0,458.3" fill="#f0e040"/><polygon points="148.0,457.1 171.2,448.5 194.3,436.5 217.5,428.8 240.7,417.1 263.8,407.6 287.0,397.4 287.0,402.5 263.8,413.1 240.7,421.9 217.5,431.5 194.3,440.6 171.2,451.9 148.0,459.3" fill="#ff60c0"/><polygon points="148.0,459.2 171.2,451.2 194.3,439.4 217.5,430.4 240.7,420.4 263.8,411.7 287.0,402.6 287.0,407.5 263.8,417.8 240.7,428.4 217.5,437.3 194.3,447.6 171.2,456.3 148.0,466.1" fill="#f0e040"/><polygon points="148.0,463.8 171.2,454.8 194.3,444.7 217.5,434.8 240.7,425.2 263.8,416.6 287.0,405.8 287.0,413.4 263.8,421.2 240.7,433.0 217.5,440.0 194.3,449.5 171.2,461.5 148.0,471.4" fill="#40e0e0"/><polygon points="148.0,468.9 171.2,458.5 194.3,450.4 217.5,438.7 240.7,430.4 263.8,419.2 287.0,409.2 287.0,413.8 263.8,424.6 240.7,434.6 217.5,445.0 194.3,453.5 171.2,461.8 148.0,474.5" fill="#a040c0"/><polygon points="148.0,470.6 171.2,461.2 194.3,453.0 217.5,444.2 240.7,434.5 263.8,423.6 287.0,415.1 287.0,417.8 263.8,427.0 240.7,437.2 217.5,447.9 194.3,454.8 171.2,467.6 148.0,474.2" fill="#60a0ff"/><polygon points="148.0,474.0 171.2,465.0 194.3,456.5 217.5,446.4 240.7,437.0 263.8,424.6 287.0,417.9 287.0,424.8 263.8,433.1 240.7,441.4 217.5,454.0 194.3,461.1 171.2,473.6 148.0,480.4" fill="#f0e040"/><polygon points="148.0,480.0 171.2,470.1 194.3,461.4 217.5,452.4 240.7,441.7 263.8,430.1 287.0,422.4 287.0,425.4 263.8,434.7 240.7,443.9 217.5,453.5 194.3,464.5 171.2,473.7 148.0,485.2" fill="#ff60c0"/><polygon points="148.0,483.7 171.2,472.9 194.3,462.0 217.5,454.6 240.7,444.4 263.8,434.3 287.0,426.2 287.0,430.9 263.8,441.4 240.7,448.6 217.5,458.5 194.3,470.5 171.2,478.1 148.0,489.9" fill="#ff60c0"/><polygon points="148.0,486.5 171.2,476.7 194.3,466.8 217.5,458.5 240.7,447.1 263.8,440.0 287.0,428.7 287.0,435.2 263.8,444.0 240.7,455.2 217.5,465.3 194.3,475.6 171.2,483.0 148.0,495.6" fill="#80e040"/><polygon points="148.0,493.0 171.2,484.0 194.3,472.0 217.5,461.8 240.7,454.6 263.8,442.6 287.0,432.8 287.0,439.2 263.8,449.3 240.7,459.3 217.5,466.7 194.3,475.6 171.2,486.3 148.0,496.5" fill="#10c0c0"/><polygon points="148.0,495.6 171.2,486.3 194.3,477.2 217.5,466.2 240.7,456.5 263.8,445.5 287.0,438.0 287.0,443.1 263.8,451.4 240.7,462.7 217.5,470.8 194.3,480.2 171.2,491.0 148.0,501.4" fill="#60a0ff"/><polygon points="148.0,498.2 171.2,489.4 194.3,478.6 217.5,471.3 240.7,460.8 263.8,450.5 287.0,442.2 287.0,447.0 263.8,455.4 240.7,464.1 217.5,474.3 194.3,484.6 171.2,494.8 148.0,504.9" fill="#20e060"/><polygon points="148.0,504.3 171.2,493.1 194.3,484.1 217.5,475.1 240.7,463.2 263.8,453.4 287.0,444.2 287.0,450.8 263.8,460.4 240.7,470.4 217.5,479.8 194.3,488.3 171.2,498.3 148.0,510.2" fill="#ff60c0"/><polygon points="148.0,506.7 171.2,498.3 194.3,488.2 217.5,479.7 240.7,467.5 263.8,459.1 287.0,448.6 287.0,454.0 263.8,461.3 240.7,472.9 217.5,483.2 194.3,492.6 171.2,501.4 148.0,512.2" fill="#a040c0"/><polygon points="148.0,509.6 171.2,500.4 194.3,489.3 217.5,479.4 240.7,472.0 263.8,461.8 287.0,451.9 287.0,457.5 263.8,467.2 240.7,475.8 217.5,488.0 194.3,496.9 171.2,506.0 148.0,515.4" fill="#f0e040"/><polygon points="148.0,515.5 171.2,503.5 194.3,493.8 217.5,486.1 240.7,474.4 263.8,465.9 287.0,457.1 287.0,460.5 263.8,472.0 240.7,480.8 217.5,490.7 194.3,499.1 171.2,508.6 148.0,520.9" fill="#2060d0"/><polygon points="148.0,518.0 171.2,508.9 194.3,499.7 217.5,490.3 240.7,479.8 263.8,470.5 287.0,460.0 287.0,467.1 263.8,476.7 240.7,488.3 217.5,498.2 194.3,505.6 171.2,517.1 148.0,525.8" fill="#f0e040"/><polygon points="148.0,525.3 171.2,515.6 194.3,505.1 217.5,493.6 240.7,484.9 263.8,474.4 287.0,466.9 287.0,472.2 263.8,484.8 240.7,493.8 217.5,501.4 194.3,513.4 171.2,523.8 148.0,532.2" fill="#e040e0"/><polygon points="148.0,531.4 171.2,520.1 194.3,509.9 217.5,502.4 240.7,492.1 263.8,480.8 287.0,472.6 287.0,476.0 263.8,485.6 240.7,495.4 217.5,505.8 194.3,516.3 171.2,524.5 148.0,534.4" fill="#a040c0"/><polygon points="148.0,534.8 171.2,524.9 194.3,514.9 217.5,504.9 240.7,496.3 263.8,484.2 287.0,475.7 287.0,479.1 263.8,489.2 240.7,499.8 217.5,509.7 194.3,520.7 171.2,529.6 148.0,538.5" fill="#80e040"/><polygon points="148.0,536.1 171.2,528.0 194.3,517.0 217.5,508.2 240.7,497.1 263.8,487.7 287.0,477.5 287.0,484.2 263.8,493.3 240.7,501.3 217.5,511.2 194.3,520.6 171.2,532.4 148.0,542.6" fill="#60a0ff"/><polygon points="148.0,539.1 171.2,529.7 194.3,521.3 217.5,511.2 240.7,502.9 263.8,492.8 287.0,481.0 287.0,484.7 263.8,494.6 240.7,504.9 217.5,515.0 194.3,523.1 171.2,534.0 148.0,542.8" fill="#40e0e0"/><polygon points="148.0,543.5 171.2,531.8 194.3,524.0 217.5,515.4 240.7,504.0 263.8,493.4 287.0,484.8 287.0,492.4 263.8,501.2 240.7,509.7 217.5,522.4 194.3,530.7 171.2,538.8 148.0,550.2" fill="#ff60c0"/><polygon points="148.0,549.4 171.2,537.0 194.3,530.1 217.5,520.6 240.7,507.8 263.8,498.6 287.0,491.2 287.0,496.6 263.8,508.1 240.7,516.8 217.5,524.7 194.3,536.3 171.2,544.8 148.0,556.4" fill="#40e0e0"/><polygon points="148.0,554.5 171.2,543.6 194.3,535.6 217.5,523.0 240.7,514.6 263.8,504.6 287.0,495.2 287.0,501.1 263.8,510.3 240.7,518.2 217.5,527.3 194.3,537.5 171.2,549.0 148.0,557.1" fill="#ff60c0"/><polygon points="148.0,557.8 171.2,547.2 194.3,538.4 217.5,528.0 240.7,517.1 263.8,507.9 287.0,500.1 287.0,502.4 263.8,514.2 240.7,521.4 217.5,533.6 194.3,541.9 171.2,550.6 148.0,560.8" fill="#60a0ff"/><polygon points="148.0,560.8 171.2,551.8 194.3,540.7 217.5,532.3 240.7,521.9 263.8,510.1 287.0,502.7 287.0,506.2 263.8,515.1 240.7,526.3 217.5,535.2 194.3,546.4 171.2,555.0 148.0,564.2" fill="#60a0ff"/><polygon points="148.0,562.5 171.2,552.8 194.3,543.7 217.5,534.8 240.7,526.2 263.8,514.3 287.0,505.0 287.0,510.0 263.8,520.6 240.7,528.5 217.5,537.4 194.3,548.4 171.2,556.7 148.0,568.9" fill="#2060d0"/><polygon points="148.0,567.8 171.2,555.4 194.3,547.9 217.5,536.4 240.7,526.4 263.8,519.0 287.0,507.7 287.0,512.0 263.8,522.5 240.7,530.2 217.5,539.9 194.3,551.0 171.2,559.1 148.0,569.3" fill="#e06030"/><polygon points="148.0,569.5 171.2,560.0 194.3,550.9 217.5,540.1 240.7,530.8 263.8,520.8 287.0,511.5 287.0,514.5 263.8,525.4 240.7,534.4 217.5,543.9 194.3,552.5 171.2,564.4 148.0,573.0" fill="#ff60c0"/><polygon points="148.0,572.8 171.2,562.8 194.3,553.9 217.5,543.6 240.7,533.7 263.8,522.1 287.0,512.4 287.0,520.5 263.8,530.2 240.7,542.6 217.5,549.7 194.3,560.0 171.2,570.3 148.0,580.0" fill="#60a0ff"/><polygon points="148.0,578.9 171.2,567.2 194.3,558.3 217.5,549.3 240.7,539.2 263.8,530.9 287.0,519.1 287.0,522.4 263.8,531.4 240.7,543.2 217.5,553.7 194.3,562.6 171.2,572.6 148.0,582.6" fill="#a040c0"/><polygon points="148.0,581.0 171.2,571.4 194.3,562.1 217.5,551.8 240.7,542.5 263.8,531.6 287.0,521.3 287.0,530.5 263.8,540.2 240.7,548.7 217.5,557.2 194.3,568.1 171.2,577.5 148.0,586.9" fill="#e06030"/><polygon points="148.0,585.3 171.2,576.9 194.3,568.3 217.5,557.7 240.7,548.8 263.8,536.3 287.0,528.5 287.0,533.5 263.8,541.8 240.7,551.2 217.5,562.7 194.3,570.1 171.2,581.6 148.0,591.7" fill="#a040c0"/><polygon points="148.0,591.1 171.2,580.0 194.3,569.0 217.5,559.8 240.7,550.5 263.8,539.7 287.0,531.2 287.0,537.1 263.8,545.6 240.7,557.0 217.5,566.5 194.3,574.9 171.2,584.6 148.0,596.5" fill="#10c0c0"/><polygon points="148.0,595.5 171.2,585.7 194.3,574.2 217.5,565.9 240.7,554.1 263.8,546.6 287.0,534.5 287.0,539.9 263.8,547.0 240.7,559.5 217.5,567.3 194.3,578.4 171.2,587.7 148.0,597.9" fill="#f0e040"/><polygon points="148.0,595.2 171.2,585.2 194.3,575.7 217.5,567.6 240.7,556.9 263.8,546.9 287.0,536.7 287.0,539.8 263.8,549.7 240.7,560.0 217.5,569.8 194.3,580.1 171.2,591.2 148.0,599.8" fill="#e040e0"/><polygon points="148.0,599.6 171.2,590.1 194.3,579.9 217.5,570.4 240.7,560.3 263.8,550.1 287.0,540.3 287.0,545.0 263.8,554.9 240.7,564.5 217.5,574.4 194.3,583.4 171.2,593.7 148.0,603.7" fill="#80e040"/><polygon points="148.0,603.5 171.2,594.1 194.3,583.6 217.5,574.8 240.7,564.6 263.8,553.1 287.0,544.5 287.0,551.4 263.8,562.7 240.7,571.2 217.5,582.1 194.3,590.8 171.2,601.2 148.0,610.8" fill="#60a0ff"/><polygon points="148.0,608.4 171.2,598.2 194.3,587.5 217.5,579.2 240.7,570.4 263.8,560.5 287.0,549.2 287.0,555.1 263.8,565.1 240.7,573.3 217.5,584.7 194.3,593.5 171.2,604.2 148.0,612.0" fill="#60a0ff"/><polygon points="148.0,612.5 171.2,601.0 194.3,592.1 217.5,584.5 240.7,574.5 263.8,562.0 287.0,553.1 287.0,558.9 263.8,571.1 240.7,580.8 217.5,588.9 194.3,598.9 171.2,608.2 148.0,619.7" fill="#a040c0"/><polygon points="148.0,615.9 171.2,605.6 194.3,596.6 217.5,586.5 240.7,576.9 263.8,566.9 287.0,557.2 287.0,563.3 263.8,575.6 240.7,583.2 217.5,595.1 194.3,604.1 171.2,614.4 148.0,623.5" fill="#f080ff"/><polygon points="148.0,621.4 171.2,612.5 194.3,602.7 217.5,593.6 240.7,582.1 263.8,573.9 287.0,564.8 287.0,568.7 263.8,579.5 240.7,587.8 217.5,599.7 194.3,608.4 171.2,619.2 148.0,628.3" fill="#10c0c0"/><polygon points="148.0,627.4 171.2,617.9 194.3,606.7 217.5,597.0 240.7,588.4 263.8,578.0 287.0,567.0 287.0,572.7 263.8,581.3 240.7,591.2 217.5,600.5 194.3,611.8 171.2,621.6 148.0,630.3" fill="#10c0c0"/></g><path d="M150.0 532.0 L190.0 518.0 L285.0 484.0 L285.0 502.0 L150.0 565.0Z" fill="none" stroke="#f4f0d0" stroke-width="0.7" opacity="0.8"/><g clip-path="url(#sf204)" shape-rendering="crispEdges"><path d="M132.0 470.0 L168.0 440.0 L210.0 452.0 L205.0 490.0 L195.0 497.0Z" fill="#10c0c0"/><polygon points="130.0,400.1 143.7,405.0 157.3,410.5 171.0,417.1 184.7,423.6 198.3,430.8 212.0,435.7 212.0,445.5 198.3,438.6 184.7,432.3 171.0,426.0 157.3,420.2 143.7,414.8 130.0,407.1" fill="#e0f0e0"/><polygon points="130.0,406.5 143.7,412.8 157.3,417.2 171.0,424.6 184.7,430.0 198.3,436.6 212.0,441.6 212.0,447.1 198.3,441.5 184.7,435.5 171.0,428.0 157.3,423.5 143.7,416.1 130.0,409.4" fill="#10c0c0"/><polygon points="130.0,410.0 143.7,415.0 157.3,420.5 171.0,428.5 184.7,434.3 198.3,438.9 212.0,445.9 212.0,452.8 198.3,445.8 184.7,440.1 171.0,433.9 157.3,426.9 143.7,421.9 130.0,414.7" fill="#10c0c0"/><polygon points="130.0,414.0 143.7,419.2 157.3,426.5 171.0,430.9 184.7,438.9 198.3,444.2 212.0,451.2 212.0,456.3 198.3,450.1 184.7,443.5 171.0,436.3 157.3,431.8 143.7,425.5 130.0,418.5" fill="#a06040"/><polygon points="130.0,417.6 143.7,424.2 157.3,429.4 171.0,435.7 184.7,441.1 198.3,447.6 212.0,453.8 212.0,456.9 198.3,451.3 184.7,444.9 171.0,440.3 157.3,432.5 143.7,427.0 130.0,421.6" fill="#a06040"/><polygon points="130.0,420.5 143.7,426.6 157.3,431.4 171.0,439.3 184.7,444.4 198.3,450.1 212.0,456.6 212.0,463.3 198.3,456.8 184.7,451.1 171.0,442.9 157.3,437.3 143.7,431.7 130.0,424.6" fill="#2060a0"/><polygon points="130.0,423.5 143.7,430.7 157.3,435.8 171.0,441.3 184.7,449.6 198.3,454.9 212.0,461.3 212.0,471.0 198.3,463.2 184.7,457.9 171.0,452.4 157.3,446.3 143.7,440.6 130.0,434.0" fill="#106020"/><polygon points="130.0,431.0 143.7,436.0 157.3,442.8 171.0,449.7 184.7,455.5 198.3,462.6 212.0,468.4 212.0,476.9 198.3,470.3 184.7,465.1 171.0,458.7 157.3,452.8 143.7,447.1 130.0,441.0" fill="#2060a0"/><polygon points="130.0,436.6 143.7,443.5 157.3,449.6 171.0,457.1 184.7,462.4 198.3,469.4 212.0,474.6 212.0,482.6 198.3,476.3 184.7,469.5 171.0,463.3 157.3,457.2 143.7,450.2 130.0,444.9" fill="#e0f0e0"/><polygon points="130.0,443.4 143.7,448.6 157.3,455.3 171.0,461.8 184.7,467.2 198.3,473.1 212.0,480.5 212.0,483.4 198.3,478.6 184.7,472.0 171.0,465.5 157.3,460.1 143.7,451.9 130.0,446.8" fill="#50d0b0"/><polygon points="130.0,447.0 143.7,450.9 157.3,457.9 171.0,465.3 184.7,469.7 198.3,476.0 212.0,483.9 212.0,485.6 198.3,480.2 184.7,473.7 171.0,468.3 157.3,462.4 143.7,456.1 130.0,448.5" fill="#106020"/><polygon points="130.0,447.2 143.7,453.8 157.3,460.7 171.0,467.5 184.7,472.9 198.3,478.7 212.0,485.2 212.0,494.4 198.3,487.6 184.7,483.2 171.0,475.8 157.3,470.1 143.7,464.1 130.0,457.7" fill="#a06040"/><polygon points="130.0,455.1 143.7,462.2 157.3,468.2 171.0,473.2 184.7,480.0 198.3,486.2 212.0,493.3 212.0,499.1 198.3,494.7 184.7,488.1 171.0,482.5 157.3,474.0 143.7,470.1 130.0,462.0" fill="#a06040"/><polygon points="130.0,461.2 143.7,468.1 157.3,472.1 171.0,480.4 184.7,484.9 198.3,492.1 212.0,497.8 212.0,506.5 198.3,501.7 184.7,494.9 171.0,487.8 157.3,481.8 143.7,474.9 130.0,468.7" fill="#a06040"/><polygon points="130.0,468.6 143.7,473.6 157.3,480.1 171.0,486.1 184.7,492.7 198.3,498.2 212.0,503.8 212.0,511.8 198.3,505.9 184.7,498.8 171.0,492.5 157.3,486.3 143.7,480.1 130.0,475.0" fill="#2060a0"/><polygon points="130.0,471.9 143.7,477.5 157.3,483.8 171.0,490.9 184.7,496.1 198.3,503.1 212.0,510.4 212.0,514.9 198.3,508.5 184.7,503.2 171.0,495.2 157.3,489.2 143.7,484.6 130.0,478.0" fill="#2060a0"/><polygon points="130.0,476.8 143.7,483.5 157.3,489.2 171.0,494.4 184.7,500.8 198.3,506.6 212.0,512.5 212.0,520.8 198.3,514.5 184.7,508.8 171.0,502.7 157.3,497.1 143.7,491.0 130.0,483.5" fill="#2060a0"/><polygon points="130.0,481.2 143.7,489.3 157.3,495.4 171.0,500.6 184.7,507.2 198.3,513.2 212.0,520.2 212.0,529.2 198.3,522.4 184.7,517.4 171.0,510.9 157.3,504.4 143.7,498.0 130.0,492.5" fill="#e0f0e0"/><polygon points="130.0,488.5 143.7,494.9 157.3,502.3 171.0,508.3 184.7,513.7 198.3,520.5 212.0,527.5 212.0,535.2 198.3,528.9 184.7,524.5 171.0,517.3 157.3,511.1 143.7,504.8 130.0,497.9" fill="#2060a0"/><polygon points="130.0,496.5 143.7,503.3 157.3,508.1 171.0,515.7 184.7,520.9 198.3,527.0 212.0,534.0 212.0,540.2 198.3,534.4 184.7,528.9 171.0,523.6 157.3,515.9 143.7,511.5 130.0,504.3" fill="#e0f0e0"/><polygon points="130.0,503.0 143.7,509.2 157.3,515.5 171.0,521.4 184.7,526.1 198.3,534.1 212.0,539.4 212.0,548.6 198.3,542.2 184.7,535.9 171.0,530.9 157.3,523.3 143.7,518.6 130.0,512.1" fill="#a06040"/><polygon points="130.0,510.0 143.7,514.7 157.3,522.2 171.0,527.7 184.7,533.2 198.3,540.6 212.0,544.9 212.0,553.0 198.3,547.7 184.7,540.3 171.0,534.6 157.3,529.5 143.7,523.5 130.0,516.5" fill="#2060a0"/><polygon points="130.0,514.4 143.7,519.5 157.3,527.5 171.0,533.5 184.7,539.4 198.3,545.4 212.0,550.4 212.0,556.2 198.3,548.2 184.7,544.3 171.0,538.1 157.3,530.7 143.7,523.7 130.0,517.8" fill="#40e0e0"/><polygon points="130.0,518.6 143.7,524.2 157.3,530.2 171.0,536.0 184.7,542.3 198.3,549.3 212.0,553.7 212.0,560.0 198.3,555.0 184.7,548.5 171.0,541.9 157.3,535.7 143.7,528.6 130.0,524.3" fill="#40e0e0"/><polygon points="130.0,522.2 143.7,528.8 157.3,535.5 171.0,540.8 184.7,546.9 198.3,553.9 212.0,559.6 212.0,563.0 198.3,557.2 184.7,550.1 171.0,544.0 157.3,537.3 143.7,531.2 130.0,526.0" fill="#106020"/><polygon points="130.0,525.0 143.7,531.1 157.3,536.1 171.0,543.1 184.7,548.5 198.3,556.1 212.0,562.0 212.0,566.4 198.3,560.7 184.7,553.7 171.0,547.9 157.3,542.2 143.7,536.1 130.0,529.7" fill="#a06040"/><polygon points="130.0,528.9 143.7,535.1 157.3,540.0 171.0,547.3 184.7,554.1 198.3,559.3 212.0,565.5 212.0,569.3 198.3,562.6 184.7,555.3 171.0,550.5 157.3,542.8 143.7,536.6 130.0,531.2" fill="#2060a0"/><polygon points="130.0,531.7 143.7,537.5 157.3,542.6 171.0,549.3 184.7,555.3 198.3,562.2 212.0,567.4 212.0,574.2 198.3,568.3 184.7,559.9 171.0,553.7 157.3,548.0 143.7,541.6 130.0,535.8" fill="#50d0b0"/><polygon points="130.0,535.9 143.7,540.7 157.3,547.9 171.0,552.8 184.7,558.7 198.3,565.4 212.0,570.9 212.0,575.5 198.3,569.0 184.7,564.2 171.0,557.8 157.3,551.9 143.7,544.7 130.0,537.4" fill="#a06040"/><polygon points="130.0,537.6 143.7,542.8 157.3,549.6 171.0,555.3 184.7,562.2 198.3,568.1 212.0,575.2 212.0,579.4 198.3,573.0 184.7,566.9 171.0,560.4 157.3,554.9 143.7,548.3 130.0,542.5" fill="#10c0c0"/></g><path d="M132.0 470.0 L168.0 440.0 L210.0 452.0 L205.0 490.0 L195.0 497.0Z" fill="none" stroke="#f4f0d0" stroke-width="0.7" opacity="0.8"/><g clip-path="url(#sf205)" shape-rendering="crispEdges"><path d="M195.0 497.0 L205.0 470.0 L245.0 458.0 L265.0 471.0 L278.0 487.0 L190.0 518.0Z" fill="#10c0c0"/><polygon points="188.0,420.5 203.3,416.3 218.7,412.6 234.0,404.7 249.3,401.4 264.7,395.4 280.0,389.9 280.0,395.7 264.7,401.8 249.3,404.5 234.0,410.1 218.7,417.3 203.3,422.5 188.0,428.3" fill="#60a0ff"/><polygon points="188.0,424.3 203.3,420.9 218.7,414.6 234.0,410.1 249.3,403.8 264.7,399.1 280.0,395.2 280.0,401.5 264.7,407.4 249.3,412.7 234.0,418.6 218.7,421.6 203.3,427.5 188.0,433.0" fill="#2060d0"/><polygon points="188.0,433.1 203.3,427.8 218.7,422.0 234.0,414.2 249.3,410.5 264.7,405.4 280.0,399.3 280.0,403.6 264.7,408.0 249.3,414.8 234.0,417.9 218.7,425.7 203.3,430.5 188.0,434.6" fill="#e040e0"/><polygon points="188.0,434.4 203.3,428.5 218.7,424.5 234.0,416.9 249.3,413.8 264.7,408.2 280.0,402.1 280.0,410.6 264.7,414.8 249.3,421.0 234.0,425.3 218.7,431.1 203.3,435.2 188.0,440.1" fill="#ff60c0"/><polygon points="188.0,439.5 203.3,435.7 218.7,428.3 234.0,423.8 249.3,417.6 264.7,413.2 280.0,406.1 280.0,409.8 264.7,417.4 249.3,420.1 234.0,427.6 218.7,431.7 203.3,438.4 188.0,442.9" fill="#80e040"/><polygon points="188.0,442.9 203.3,436.1 218.7,431.1 234.0,426.2 249.3,421.6 264.7,416.4 280.0,410.4 280.0,415.5 264.7,420.7 249.3,428.3 234.0,433.4 218.7,437.5 203.3,443.2 188.0,447.6" fill="#80e040"/><polygon points="188.0,446.5 203.3,442.7 218.7,435.4 234.0,430.5 249.3,426.2 264.7,419.1 280.0,414.9 280.0,421.1 264.7,428.2 249.3,433.5 234.0,437.0 218.7,443.1 203.3,450.4 188.0,454.7" fill="#40e0e0"/><polygon points="188.0,453.6 203.3,447.7 218.7,441.1 234.0,435.6 249.3,431.0 264.7,426.3 280.0,420.1 280.0,422.2 264.7,428.0 249.3,435.1 234.0,440.9 218.7,445.3 203.3,450.1 188.0,456.2" fill="#f080ff"/><polygon points="188.0,456.3 203.3,448.5 218.7,444.6 234.0,437.4 249.3,434.9 264.7,428.1 280.0,423.1 280.0,426.5 264.7,434.4 249.3,439.2 234.0,442.6 218.7,450.2 203.3,455.8 188.0,460.4" fill="#ff60c0"/><polygon points="188.0,458.8 203.3,454.7 218.7,449.2 234.0,441.0 249.3,436.6 264.7,432.2 280.0,427.1 280.0,433.7 264.7,438.5 249.3,443.7 234.0,448.3 218.7,456.4 203.3,459.1 188.0,466.1" fill="#2060d0"/><polygon points="188.0,465.4 203.3,458.0 218.7,454.6 234.0,448.5 249.3,443.5 264.7,437.3 280.0,432.0 280.0,436.4 264.7,439.1 249.3,444.9 234.0,450.5 218.7,456.7 203.3,462.7 188.0,468.8" fill="#2060d0"/><polygon points="188.0,467.4 203.3,459.9 218.7,455.0 234.0,450.7 249.3,445.9 264.7,439.5 280.0,433.3 280.0,442.4 264.7,446.0 249.3,450.9 234.0,456.5 218.7,464.7 203.3,468.2 188.0,474.7" fill="#f0e040"/><polygon points="188.0,472.8 203.3,466.8 218.7,459.9 234.0,456.5 249.3,450.5 264.7,445.3 280.0,439.2 280.0,442.8 264.7,448.4 249.3,455.5 234.0,460.6 218.7,464.0 203.3,469.4 188.0,474.8" fill="#10c0c0"/><polygon points="188.0,475.9 203.3,470.2 218.7,464.7 234.0,457.6 249.3,452.4 264.7,446.8 280.0,442.7 280.0,448.3 264.7,454.4 249.3,458.8 234.0,464.5 218.7,470.4 203.3,474.7 188.0,481.4" fill="#e06030"/><polygon points="188.0,478.6 203.3,473.4 218.7,468.1 234.0,464.0 249.3,457.0 264.7,452.1 280.0,447.3 280.0,449.1 264.7,456.7 249.3,459.3 234.0,464.3 218.7,471.4 203.3,475.2 188.0,482.8" fill="#ff60c0"/><polygon points="188.0,482.2 203.3,476.5 218.7,469.1 234.0,466.0 249.3,460.6 264.7,455.9 280.0,449.3 280.0,452.6 264.7,458.3 249.3,463.1 234.0,468.8 218.7,475.1 203.3,479.3 188.0,485.2" fill="#e06030"/><polygon points="188.0,483.8 203.3,480.0 218.7,475.4 234.0,467.9 249.3,463.6 264.7,457.1 280.0,451.2 280.0,454.4 264.7,459.8 249.3,465.4 234.0,471.3 218.7,477.6 203.3,482.8 188.0,487.0" fill="#40e0e0"/><polygon points="188.0,486.7 203.3,482.9 218.7,476.9 234.0,472.5 249.3,467.0 264.7,459.7 280.0,454.6 280.0,459.1 264.7,464.9 249.3,468.9 234.0,474.7 218.7,479.7 203.3,486.9 188.0,490.5" fill="#e06030"/><polygon points="188.0,489.4 203.3,485.5 218.7,479.9 234.0,473.7 249.3,467.2 264.7,461.7 280.0,457.0 280.0,464.6 264.7,470.5 249.3,477.0 234.0,482.6 218.7,487.3 203.3,491.1 188.0,497.8" fill="#f0e040"/><polygon points="188.0,494.1 203.3,489.1 218.7,484.0 234.0,479.3 249.3,473.2 264.7,468.4 280.0,462.6 280.0,471.5 264.7,476.4 249.3,479.8 234.0,487.4 218.7,491.7 203.3,496.8 188.0,503.0" fill="#40e0e0"/><polygon points="188.0,499.2 203.3,495.5 218.7,488.5 234.0,485.8 249.3,477.5 264.7,473.3 280.0,467.8 280.0,472.5 264.7,477.8 249.3,484.0 234.0,486.3 218.7,494.9 203.3,499.3 188.0,504.1" fill="#ff60c0"/><polygon points="188.0,502.4 203.3,496.2 218.7,493.6 234.0,487.1 249.3,481.4 264.7,476.9 280.0,472.1 280.0,479.9 264.7,482.9 249.3,488.9 234.0,495.6 218.7,498.8 203.3,505.6 188.0,510.9" fill="#e06030"/><polygon points="188.0,508.8 203.3,505.2 218.7,497.7 234.0,491.9 249.3,488.6 264.7,483.3 280.0,478.2 280.0,486.3 264.7,490.1 249.3,496.2 234.0,501.9 218.7,505.6 203.3,510.9 188.0,518.3" fill="#20e060"/><polygon points="188.0,515.1 203.3,511.1 218.7,505.6 234.0,500.3 249.3,492.7 264.7,488.8 280.0,481.3 280.0,487.0 264.7,492.1 249.3,496.2 234.0,502.5 218.7,507.9 203.3,512.6 188.0,517.1" fill="#f080ff"/><polygon points="188.0,517.5 203.3,513.5 218.7,506.1 234.0,501.5 249.3,497.2 264.7,489.7 280.0,484.5 280.0,491.4 264.7,498.8 249.3,502.1 234.0,509.3 218.7,515.7 203.3,518.5 188.0,526.1" fill="#80e040"/><polygon points="188.0,522.7 203.3,518.8 218.7,511.8 234.0,507.4 249.3,501.7 264.7,497.7 280.0,490.6 280.0,494.3 264.7,501.1 249.3,505.7 234.0,511.5 218.7,517.7 203.3,521.6 188.0,527.1" fill="#e06030"/><polygon points="188.0,526.9 203.3,520.4 218.7,516.8 234.0,511.9 249.3,503.9 264.7,500.4 280.0,495.8 280.0,498.8 264.7,502.7 249.3,509.0 234.0,514.3 218.7,519.4 203.3,523.0 188.0,528.5" fill="#2060d0"/><polygon points="188.0,528.4 203.3,521.9 218.7,518.7 234.0,513.3 249.3,508.6 264.7,501.5 280.0,495.6 280.0,498.7 264.7,506.3 249.3,511.9 234.0,516.2 218.7,521.6 203.3,526.3 188.0,532.2" fill="#e040e0"/><polygon points="188.0,532.8 203.3,525.5 218.7,520.9 234.0,514.9 249.3,509.4 264.7,505.8 280.0,497.7 280.0,506.6 264.7,511.1 249.3,515.9 234.0,521.6 218.7,527.2 203.3,533.3 188.0,537.9" fill="#40e0e0"/><polygon points="188.0,538.0 203.3,530.0 218.7,525.7 234.0,521.4 249.3,514.5 264.7,509.9 280.0,505.2 280.0,508.1 264.7,512.3 249.3,519.4 234.0,525.6 218.7,530.2 203.3,535.9 188.0,539.2" fill="#e06030"/><polygon points="188.0,538.3 203.3,534.5 218.7,530.1 234.0,525.1 249.3,516.7 264.7,513.0 280.0,508.6 280.0,511.9 264.7,516.0 249.3,521.9 234.0,525.9 218.7,530.5 203.3,536.4 188.0,544.3" fill="#2060d0"/><polygon points="188.0,540.9 203.3,535.9 218.7,531.1 234.0,524.7 249.3,520.9 264.7,513.7 280.0,510.1 280.0,517.9 264.7,522.8 249.3,528.6 234.0,532.6 218.7,539.5 203.3,543.4 188.0,548.0" fill="#f080ff"/><polygon points="188.0,547.8 203.3,540.9 218.7,535.3 234.0,531.5 249.3,526.2 264.7,520.1 280.0,516.3 280.0,524.3 264.7,528.3 249.3,533.0 234.0,538.0 218.7,544.4 203.3,550.7 188.0,556.7" fill="#a040c0"/><polygon points="188.0,554.6 203.3,549.4 218.7,542.8 234.0,538.6 249.3,533.0 264.7,527.9 280.0,522.5 280.0,525.3 264.7,529.8 249.3,535.1 234.0,541.5 218.7,546.8 203.3,550.5 188.0,557.5" fill="#f080ff"/></g><path d="M195.0 497.0 L205.0 470.0 L245.0 458.0 L265.0 471.0 L278.0 487.0 L190.0 518.0Z" fill="none" stroke="#f4f0d0" stroke-width="0.7" opacity="0.8"/><g clip-path="url(#sf206)" shape-rendering="crispEdges"><path d="M168.0 432.0 L178.0 430.0 L210.0 440.0 L214.0 462.0 L168.0 447.0Z" fill="#50d0b0"/><polygon points="166.0,411.9 174.3,412.8 182.7,415.5 191.0,419.3 199.3,421.0 207.7,423.0 216.0,425.9 216.0,429.7 207.7,427.8 199.3,423.7 191.0,421.2 182.7,419.1 174.3,416.3 166.0,413.8" fill="#80c0c0"/><polygon points="166.0,413.9 174.3,415.7 182.7,418.2 191.0,420.2 199.3,423.9 207.7,426.1 216.0,427.6 216.0,433.8 207.7,430.5 199.3,429.0 191.0,427.1 182.7,423.3 174.3,422.0 166.0,418.8" fill="#50d0b0"/><polygon points="166.0,418.2 174.3,419.6 182.7,422.7 191.0,425.5 199.3,426.7 207.7,429.2 216.0,433.2 216.0,439.0 207.7,434.8 199.3,433.7 191.0,431.1 182.7,428.7 174.3,425.4 166.0,422.3" fill="#80c0c0"/><polygon points="166.0,421.1 174.3,425.2 182.7,425.8 191.0,428.3 199.3,431.6 207.7,433.9 216.0,437.3 216.0,440.4 207.7,439.0 199.3,436.3 191.0,433.4 182.7,430.1 174.3,429.3 166.0,425.9" fill="#e040e0"/><polygon points="166.0,424.5 174.3,428.3 182.7,430.3 191.0,432.6 199.3,433.8 207.7,437.0 216.0,438.9 216.0,442.6 207.7,440.1 199.3,438.1 191.0,436.6 182.7,434.1 174.3,431.9 166.0,428.0" fill="#f080ff"/><polygon points="166.0,427.0 174.3,429.5 182.7,432.5 191.0,434.7 199.3,438.6 207.7,441.1 216.0,442.4 216.0,448.0 207.7,445.8 199.3,443.1 191.0,441.0 182.7,438.3 174.3,436.3 166.0,433.5" fill="#e040e0"/><polygon points="166.0,432.0 174.3,434.0 182.7,436.8 191.0,439.9 199.3,441.4 207.7,444.2 216.0,447.4 216.0,451.5 207.7,450.2 199.3,447.8 191.0,444.7 182.7,441.0 174.3,438.7 166.0,436.4" fill="#40f0a0"/><polygon points="166.0,435.2 174.3,439.0 182.7,441.8 191.0,443.0 199.3,446.0 207.7,449.1 216.0,450.7 216.0,458.1 207.7,456.3 199.3,453.4 191.0,451.3 182.7,448.3 174.3,445.5 166.0,443.3" fill="#f080ff"/><polygon points="166.0,440.7 174.3,444.2 182.7,445.5 191.0,449.0 199.3,451.2 207.7,453.8 216.0,455.9 216.0,462.4 207.7,461.3 199.3,459.1 191.0,456.1 182.7,454.0 174.3,450.8 166.0,449.3" fill="#f080ff"/><polygon points="166.0,447.3 174.3,448.7 182.7,451.2 191.0,454.4 199.3,455.9 207.7,459.1 216.0,461.6 216.0,468.5 207.7,467.6 199.3,464.2 191.0,461.6 182.7,459.0 174.3,456.7 166.0,453.6" fill="#e040e0"/><polygon points="166.0,452.5 174.3,455.6 182.7,457.9 191.0,458.8 199.3,461.7 207.7,464.9 216.0,467.7 216.0,475.8 207.7,473.0 199.3,470.9 191.0,468.5 182.7,464.8 174.3,462.8 166.0,459.2" fill="#50d0b0"/><polygon points="166.0,458.5 174.3,460.1 182.7,464.0 191.0,464.7 199.3,467.8 207.7,470.5 216.0,473.0 216.0,477.9 207.7,476.1 199.3,473.5 191.0,470.4 182.7,468.8 174.3,466.2 166.0,463.7" fill="#f080ff"/><polygon points="166.0,462.4 174.3,464.7 182.7,466.8 191.0,468.8 199.3,471.1 207.7,474.0 216.0,476.7 216.0,480.4 207.7,478.2 199.3,475.8 191.0,472.9 182.7,471.1 174.3,467.9 166.0,465.2" fill="#e040e0"/><polygon points="166.0,465.1 174.3,467.7 182.7,470.3 191.0,472.5 199.3,474.5 207.7,477.8 216.0,479.1 216.0,483.4 207.7,480.3 199.3,478.2 191.0,474.5 182.7,472.8 174.3,470.7 166.0,468.8" fill="#40f0a0"/><polygon points="166.0,467.9 174.3,468.6 182.7,471.0 191.0,474.1 199.3,476.9 207.7,479.7 216.0,481.5 216.0,484.1 207.7,482.8 199.3,481.0 191.0,478.3 182.7,475.2 174.3,473.2 166.0,470.8" fill="#50d0b0"/><polygon points="166.0,469.9 174.3,471.2 182.7,473.7 191.0,476.4 199.3,478.4 207.7,482.4 216.0,484.0 216.0,487.3 207.7,485.3 199.3,482.3 191.0,481.1 182.7,477.6 174.3,476.1 166.0,473.6" fill="#f080ff"/><polygon points="166.0,472.8 174.3,474.1 182.7,476.0 191.0,479.0 199.3,482.7 207.7,485.0 216.0,486.3 216.0,493.9 207.7,491.4 199.3,490.5 191.0,487.3 182.7,484.7 174.3,481.8 166.0,480.3" fill="#50d0b0"/><polygon points="166.0,478.4 174.3,479.8 182.7,482.2 191.0,484.5 199.3,488.4 207.7,489.6 216.0,493.7 216.0,498.8 207.7,496.0 199.3,494.6 191.0,491.4 182.7,488.9 174.3,486.4 166.0,483.8" fill="#f080ff"/></g><path d="M168.0 432.0 L178.0 430.0 L210.0 440.0 L214.0 462.0 L168.0 447.0Z" fill="none" stroke="#f4f0d0" stroke-width="0.7" opacity="0.8"/><g clip-path="url(#sf207)" shape-rendering="crispEdges"><path d="M210.0 440.0 L241.0 442.0 L246.0 455.0 L265.0 471.0 L245.0 458.0 L214.0 462.0Z" fill="#80e040"/><polygon points="208.0,418.6 217.8,416.0 227.7,413.7 237.5,409.4 247.3,406.0 257.2,402.3 267.0,400.5 267.0,406.6 257.2,410.0 247.3,411.8 237.5,414.6 227.7,417.7 217.8,420.3 208.0,425.8" fill="#60a0a0"/><polygon points="208.0,422.0 217.8,418.8 227.7,417.7 237.5,414.9 247.3,410.5 257.2,407.2 267.0,404.9 267.0,409.2 257.2,411.6 247.3,415.6 237.5,419.3 227.7,420.6 217.8,424.8 208.0,425.9" fill="#e06030"/><polygon points="208.0,426.6 217.8,424.1 227.7,420.8 237.5,417.6 247.3,414.2 257.2,411.3 267.0,407.8 267.0,413.2 257.2,416.3 247.3,419.0 237.5,423.2 227.7,424.1 217.8,428.8 208.0,430.6" fill="#20e060"/><polygon points="208.0,430.7 217.8,426.0 227.7,423.3 237.5,422.1 247.3,417.8 257.2,415.3 267.0,412.0 267.0,416.7 257.2,419.4 247.3,423.0 237.5,424.9 227.7,428.5 217.8,431.1 208.0,432.2" fill="#60a0a0"/><polygon points="208.0,432.0 217.8,429.4 227.7,427.1 237.5,424.8 247.3,420.3 257.2,418.4 267.0,414.7 267.0,422.4 257.2,424.6 247.3,427.6 237.5,432.3 227.7,434.3 217.8,437.6 208.0,440.1" fill="#20e060"/><polygon points="208.0,438.4 217.8,436.6 227.7,432.3 237.5,428.6 247.3,428.1 257.2,423.3 267.0,419.4 267.0,427.8 257.2,429.8 247.3,433.8 237.5,434.7 227.7,437.9 217.8,441.7 208.0,443.4" fill="#40e0e0"/><polygon points="208.0,442.0 217.8,439.0 227.7,436.7 237.5,434.6 247.3,430.6 257.2,428.5 267.0,425.5 267.0,433.4 257.2,435.3 247.3,439.3 237.5,440.3 227.7,442.9 217.8,446.1 208.0,449.1" fill="#f0e040"/><polygon points="208.0,449.1 217.8,444.7 227.7,442.6 237.5,440.6 247.3,436.2 257.2,433.8 267.0,430.5 267.0,438.2 257.2,442.2 247.3,443.1 237.5,447.8 227.7,449.4 217.8,453.8 208.0,457.0" fill="#a040c0"/><polygon points="208.0,455.1 217.8,449.8 227.7,449.4 237.5,443.8 247.3,441.8 257.2,438.5 267.0,435.7 267.0,440.3 257.2,443.1 247.3,447.0 237.5,450.6 227.7,452.5 217.8,455.7 208.0,459.3" fill="#f080ff"/><polygon points="208.0,458.2 217.8,455.9 227.7,453.3 237.5,449.7 247.3,446.6 257.2,443.8 267.0,439.6 267.0,447.0 257.2,449.3 247.3,452.9 237.5,455.8 227.7,458.1 217.8,463.0 208.0,464.7" fill="#f0e040"/><polygon points="208.0,461.7 217.8,458.9 227.7,458.2 237.5,453.8 247.3,450.9 257.2,447.5 267.0,445.7 267.0,452.6 257.2,454.3 247.3,459.0 237.5,460.9 227.7,465.2 217.8,466.5 208.0,471.6" fill="#e06030"/><polygon points="208.0,468.4 217.8,465.3 227.7,462.0 237.5,460.5 247.3,457.0 257.2,452.4 267.0,451.0 267.0,456.5 257.2,459.2 247.3,462.9 237.5,466.1 227.7,467.4 217.8,470.8 208.0,475.3" fill="#ff60c0"/><polygon points="208.0,471.9 217.8,470.6 227.7,465.8 237.5,464.7 247.3,460.7 257.2,458.9 267.0,454.5 267.0,460.2 257.2,463.4 247.3,466.4 237.5,469.2 227.7,470.5 217.8,475.2 208.0,477.7" fill="#a040c0"/><polygon points="208.0,476.2 217.8,473.8 227.7,469.9 237.5,466.9 247.3,463.1 257.2,462.7 267.0,459.0 267.0,461.6 257.2,466.7 247.3,468.3 237.5,471.9 227.7,475.2 217.8,479.0 208.0,481.8" fill="#a040c0"/><polygon points="208.0,480.1 217.8,476.2 227.7,474.8 237.5,471.3 247.3,468.9 257.2,464.9 267.0,462.5 267.0,465.6 257.2,468.6 247.3,472.6 237.5,473.2 227.7,477.2 217.8,481.1 208.0,482.5" fill="#2060d0"/><polygon points="208.0,482.1 217.8,478.5 227.7,475.2 237.5,473.3 247.3,469.6 257.2,468.2 267.0,465.7 267.0,468.6 257.2,473.5 247.3,474.9 237.5,480.0 227.7,482.6 217.8,484.0 208.0,486.9" fill="#f0e040"/><polygon points="208.0,485.9 217.8,484.2 227.7,480.5 237.5,477.9 247.3,474.0 257.2,470.2 267.0,467.8 267.0,474.1 257.2,475.5 247.3,480.0 237.5,483.3 227.7,486.4 217.8,488.2 208.0,490.4" fill="#2060d0"/><polygon points="208.0,490.6 217.8,487.5 227.7,483.5 237.5,480.4 247.3,477.5 257.2,475.7 267.0,470.7 267.0,477.7 257.2,481.1 247.3,483.6 237.5,485.2 227.7,488.0 217.8,492.3 208.0,493.6" fill="#60a0a0"/></g><path d="M210.0 440.0 L241.0 442.0 L246.0 455.0 L265.0 471.0 L245.0 458.0 L214.0 462.0Z" fill="none" stroke="#f4f0d0" stroke-width="0.7" opacity="0.8"/><g clip-path="url(#sf208)" shape-rendering="crispEdges"><path d="M262.0 480.0 L285.0 484.0 L285.0 502.0 L262.0 513.0Z" fill="#a06080"/><polygon points="260.0,467.4 264.5,466.7 269.0,465.4 273.5,464.4 278.0,463.3 282.5,461.0 287.0,459.4 287.0,467.2 282.5,467.7 278.0,469.6 273.5,471.4 269.0,472.3 264.5,474.3 260.0,475.2" fill="#80203a"/><polygon points="260.0,473.0 264.5,471.5 269.0,470.0 273.5,468.5 278.0,467.7 282.5,466.6 287.0,465.5 287.0,474.7 282.5,476.6 278.0,476.7 273.5,478.6 269.0,479.7 264.5,481.4 260.0,482.2" fill="#80203a"/><polygon points="260.0,480.5 264.5,479.4 269.0,478.3 273.5,475.5 278.0,474.9 282.5,473.3 287.0,471.7 287.0,481.5 282.5,483.5 278.0,484.3 273.5,485.9 269.0,487.4 264.5,488.3 260.0,489.8" fill="#80203a"/><polygon points="260.0,486.4 264.5,485.9 269.0,483.9 273.5,482.6 278.0,481.6 282.5,481.2 287.0,478.4 287.0,485.7 282.5,487.2 278.0,487.9 273.5,489.9 269.0,491.5 264.5,493.0 260.0,493.1" fill="#80203a"/><polygon points="260.0,492.9 264.5,490.4 269.0,488.9 273.5,488.1 278.0,487.0 282.5,485.1 287.0,483.5 287.0,489.3 282.5,490.5 278.0,492.8 273.5,493.9 269.0,495.5 264.5,496.9 260.0,496.9" fill="#a06080"/><polygon points="260.0,495.8 264.5,494.4 269.0,493.2 273.5,493.0 278.0,490.8 282.5,489.3 287.0,487.5 287.0,492.2 282.5,494.0 278.0,495.5 273.5,496.1 269.0,497.7 264.5,499.1 260.0,501.3" fill="#80203a"/><polygon points="260.0,499.4 264.5,498.8 269.0,496.4 273.5,495.6 278.0,494.7 282.5,493.4 287.0,492.0 287.0,496.4 282.5,498.3 278.0,498.8 273.5,500.5 269.0,501.7 264.5,502.6 260.0,503.8" fill="#6a1a30"/><polygon points="260.0,503.6 264.5,502.4 269.0,500.3 273.5,498.8 278.0,497.6 282.5,496.2 287.0,494.7 287.0,503.3 282.5,503.7 278.0,506.1 273.5,507.9 269.0,509.2 264.5,510.5 260.0,510.9" fill="#a06080"/><polygon points="260.0,508.5 264.5,507.5 269.0,506.6 273.5,505.1 278.0,503.1 282.5,502.0 287.0,501.1 287.0,508.4 282.5,509.9 278.0,511.4 273.5,512.0 269.0,513.5 264.5,514.1 260.0,515.6" fill="#a06080"/><polygon points="260.0,514.8 264.5,512.5 269.0,512.3 273.5,510.2 278.0,508.8 282.5,508.1 287.0,505.9 287.0,515.2 282.5,515.6 278.0,517.0 273.5,518.8 269.0,520.0 264.5,520.6 260.0,522.5" fill="#80203a"/><polygon points="260.0,520.3 264.5,519.9 269.0,517.3 273.5,516.2 278.0,514.9 282.5,513.4 287.0,512.8 287.0,520.4 282.5,521.0 278.0,522.2 273.5,524.1 269.0,525.6 264.5,525.8 260.0,527.9" fill="#6a1a30"/></g><path d="M262.0 480.0 L285.0 484.0 L285.0 502.0 L262.0 513.0Z" fill="none" stroke="#f4f0d0" stroke-width="0.7" opacity="0.8"/><path d="M414.0 422.0 L419.0 418.0 L495.0 426.0 L505.0 440.0 L514.0 444.0 L525.0 460.0 L539.0 478.0 L541.0 489.0 L520.0 493.0 L518.0 500.0 L473.0 500.0 L433.0 514.0 L430.0 512.0 L403.0 497.0 L380.0 478.0 L380.0 461.0 L398.0 454.0 L403.0 439.0Z" fill="#ffe0c0" opacity="0.5" filter="url(#gl)"/><g clip-path="url(#sf301)" shape-rendering="crispEdges"><path d="M418.0 420.0 L495.0 426.0 L476.0 431.0 L474.0 453.0 L415.0 436.0Z" fill="#a0e0c0"/><polygon points="413.0,400.0 427.0,402.3 441.0,405.0 455.0,408.4 469.0,409.7 483.0,414.2 497.0,416.3 497.0,424.8 483.0,421.8 469.0,419.2 455.0,415.8 441.0,412.2 427.0,411.0 413.0,407.4" fill="#f060f0"/><polygon points="413.0,406.0 427.0,408.7 441.0,411.8 455.0,414.2 469.0,417.4 483.0,418.3 497.0,422.7 497.0,429.9 483.0,428.4 469.0,425.2 455.0,421.8 441.0,418.5 427.0,416.9 413.0,412.8" fill="#40d090"/><polygon points="413.0,412.3 427.0,413.3 441.0,416.7 455.0,419.2 469.0,422.5 483.0,426.3 497.0,427.5 497.0,431.6 483.0,429.5 469.0,426.6 455.0,423.4 441.0,420.5 427.0,419.2 413.0,416.0" fill="#60f0b0"/><polygon points="413.0,414.3 427.0,416.7 441.0,419.7 455.0,422.9 469.0,426.7 483.0,428.5 497.0,432.3 497.0,440.2 483.0,438.9 469.0,434.8 455.0,433.0 441.0,430.0 427.0,426.7 413.0,424.2" fill="#f060f0"/><polygon points="413.0,422.4 427.0,424.3 441.0,427.9 455.0,429.4 469.0,432.9 483.0,436.3 497.0,438.3 497.0,442.3 483.0,439.1 469.0,436.7 455.0,434.9 441.0,431.8 427.0,428.2 413.0,424.9" fill="#50e0a0"/><polygon points="413.0,424.2 427.0,428.1 441.0,431.2 455.0,433.9 469.0,435.2 483.0,437.9 497.0,442.3 497.0,447.4 483.0,444.3 469.0,442.3 455.0,439.2 441.0,436.4 427.0,432.7 413.0,429.7" fill="#a0e0c0"/><polygon points="413.0,429.6 427.0,431.5 441.0,434.6 455.0,438.0 469.0,441.1 483.0,442.9 497.0,445.9 497.0,452.8 483.0,451.2 469.0,447.5 455.0,444.4 441.0,441.6 427.0,439.3 413.0,436.0" fill="#e0a0e0"/><polygon points="413.0,434.6 427.0,437.8 441.0,441.0 455.0,442.7 469.0,444.7 483.0,448.9 497.0,451.8 497.0,454.4 483.0,452.8 469.0,448.8 455.0,447.1 441.0,444.7 427.0,440.4 413.0,438.9" fill="#e0a0e0"/><polygon points="413.0,436.4 427.0,439.2 441.0,442.4 455.0,446.5 469.0,449.5 483.0,451.3 497.0,454.9 497.0,457.6 483.0,455.5 469.0,452.6 455.0,449.0 441.0,446.6 427.0,443.8 413.0,442.4" fill="#a0e0c0"/><polygon points="413.0,439.6 427.0,442.8 441.0,445.5 455.0,449.7 469.0,452.4 483.0,455.1 497.0,457.2 497.0,460.9 483.0,459.4 469.0,456.9 455.0,454.3 441.0,450.5 427.0,448.1 413.0,445.2" fill="#e0a0e0"/><polygon points="413.0,444.3 427.0,447.3 441.0,449.2 455.0,452.5 469.0,455.4 483.0,457.6 497.0,461.3 497.0,468.4 483.0,465.8 469.0,462.8 455.0,458.7 441.0,456.6 427.0,453.3 413.0,449.9" fill="#e0a0e0"/><polygon points="413.0,449.1 427.0,452.1 441.0,455.2 455.0,458.4 469.0,460.3 483.0,464.0 497.0,466.6 497.0,477.1 483.0,475.1 469.0,470.9 455.0,468.7 441.0,466.2 427.0,462.1 413.0,460.4" fill="#e0a0e0"/><polygon points="413.0,456.8 427.0,460.9 441.0,464.0 455.0,465.1 469.0,469.2 483.0,471.1 497.0,473.7 497.0,482.2 483.0,479.4 469.0,476.8 455.0,473.8 441.0,469.9 427.0,467.4 413.0,463.9" fill="#60f0b0"/><polygon points="413.0,463.4 427.0,466.0 441.0,468.1 455.0,471.6 469.0,473.3 483.0,476.7 497.0,479.3 497.0,482.8 483.0,480.9 469.0,478.1 455.0,474.7 441.0,471.6 427.0,470.0 413.0,465.5" fill="#e0a0e0"/><polygon points="413.0,464.7 427.0,467.7 441.0,472.0 455.0,473.6 469.0,476.1 483.0,479.9 497.0,482.1 497.0,487.1 483.0,484.3 469.0,482.1 455.0,477.7 441.0,474.8 427.0,473.4 413.0,470.5" fill="#e0a0e0"/><polygon points="413.0,469.0 427.0,471.7 441.0,474.7 455.0,478.2 469.0,479.1 483.0,483.4 497.0,486.5 497.0,495.9 483.0,492.9 469.0,489.1 455.0,486.3 441.0,483.1 427.0,480.9 413.0,478.4" fill="#50e0a0"/></g><path d="M418.0 420.0 L495.0 426.0 L476.0 431.0 L474.0 453.0 L415.0 436.0Z" fill="none" stroke="#f4f0d0" stroke-width="0.7" opacity="0.8"/><g clip-path="url(#sf302)" shape-rendering="crispEdges"><path d="M476.0 431.0 L497.0 426.0 L507.0 442.0 L474.0 453.0Z" fill="#40c0e0"/><polygon points="472.0,411.0 478.2,408.3 484.3,407.0 490.5,406.0 496.7,404.6 502.8,402.0 509.0,399.1 509.0,403.7 502.8,405.4 496.7,407.4 490.5,409.8 484.3,412.0 478.2,412.8 472.0,415.7" fill="#206040"/><polygon points="472.0,414.7 478.2,413.8 484.3,411.7 490.5,409.5 496.7,406.8 502.8,405.8 509.0,404.1 509.0,408.0 502.8,409.6 496.7,412.8 490.5,415.1 484.3,415.6 478.2,417.7 472.0,420.7" fill="#a040c0"/><polygon points="472.0,419.3 478.2,417.3 484.3,414.2 490.5,411.8 496.7,410.9 502.8,409.8 509.0,406.9 509.0,413.0 502.8,414.8 496.7,415.7 490.5,419.4 484.3,419.3 478.2,422.6 472.0,424.2" fill="#40c0e0"/><polygon points="472.0,423.2 478.2,421.5 484.3,418.3 490.5,416.3 496.7,415.4 502.8,414.6 509.0,412.6 509.0,416.7 502.8,418.6 496.7,421.0 490.5,423.4 484.3,425.5 478.2,426.5 472.0,430.0" fill="#f0e040"/><polygon points="472.0,427.0 478.2,425.0 484.3,422.6 490.5,421.6 496.7,419.1 502.8,417.4 509.0,416.0 509.0,421.2 502.8,422.8 496.7,424.4 490.5,425.8 484.3,426.9 478.2,430.3 472.0,431.9" fill="#a040c0"/><polygon points="472.0,429.5 478.2,427.5 484.3,426.4 490.5,424.9 496.7,424.1 502.8,420.5 509.0,419.2 509.0,424.6 502.8,427.1 496.7,430.1 490.5,431.8 484.3,433.2 478.2,435.0 472.0,437.6" fill="#e040a0"/><polygon points="472.0,434.9 478.2,432.1 484.3,431.8 490.5,430.3 496.7,428.8 502.8,426.9 509.0,423.9 509.0,429.5 502.8,431.1 496.7,431.8 490.5,434.9 484.3,437.7 478.2,438.8 472.0,439.4" fill="#a040c0"/><polygon points="472.0,438.2 478.2,437.1 484.3,434.4 490.5,433.6 496.7,432.2 502.8,430.2 509.0,427.7 509.0,432.5 502.8,434.5 496.7,436.3 490.5,438.7 484.3,440.5 478.2,444.0 472.0,444.3" fill="#a040c0"/><polygon points="472.0,442.2 478.2,441.7 484.3,440.4 490.5,438.3 496.7,436.5 502.8,434.0 509.0,431.4 509.0,438.3 502.8,440.1 496.7,442.8 490.5,444.5 484.3,446.9 478.2,448.8 472.0,450.2" fill="#40c0e0"/><polygon points="472.0,447.4 478.2,446.1 484.3,443.5 490.5,442.2 496.7,439.8 502.8,439.9 509.0,437.8 509.0,439.8 502.8,443.2 496.7,445.6 490.5,447.3 484.3,447.8 478.2,450.7 472.0,452.1" fill="#e040a0"/><polygon points="472.0,450.6 478.2,448.5 484.3,446.7 490.5,444.4 496.7,444.0 502.8,440.8 509.0,440.7 509.0,445.5 502.8,449.2 496.7,449.0 490.5,452.7 484.3,454.0 478.2,455.9 472.0,457.4" fill="#60a080"/><polygon points="472.0,456.2 478.2,455.0 484.3,453.0 490.5,450.2 496.7,447.3 502.8,445.7 509.0,443.4 509.0,447.8 502.8,449.1 496.7,451.1 490.5,453.7 484.3,456.3 478.2,457.1 472.0,458.1" fill="#40c0e0"/><polygon points="472.0,457.7 478.2,455.4 484.3,453.4 490.5,452.4 496.7,450.6 502.8,449.1 509.0,447.2 509.0,451.2 502.8,452.7 496.7,455.6 490.5,456.1 484.3,458.8 478.2,460.8 472.0,461.3" fill="#206040"/><polygon points="472.0,461.6 478.2,458.6 484.3,458.4 490.5,456.4 496.7,454.7 502.8,451.3 509.0,450.1 509.0,453.5 502.8,455.0 496.7,457.4 490.5,460.8 484.3,460.9 478.2,464.4 472.0,465.5" fill="#e040a0"/><polygon points="472.0,464.7 478.2,462.2 484.3,460.2 490.5,457.9 496.7,457.8 502.8,454.8 509.0,453.3 509.0,457.8 502.8,459.3 496.7,461.2 490.5,462.5 484.3,464.2 478.2,466.9 472.0,469.0" fill="#40c0e0"/><polygon points="472.0,467.2 478.2,466.2 484.3,464.1 490.5,461.4 496.7,459.7 502.8,458.9 509.0,455.5 509.0,461.9 502.8,463.6 496.7,465.3 490.5,467.0 484.3,469.8 478.2,470.1 472.0,472.8" fill="#f0e040"/></g><path d="M476.0 431.0 L497.0 426.0 L507.0 442.0 L474.0 453.0Z" fill="none" stroke="#f4f0d0" stroke-width="0.7" opacity="0.8"/><g clip-path="url(#sf303)" shape-rendering="crispEdges"><path d="M403.0 439.0 L418.0 436.0 L455.0 458.0 L455.0 480.0 L398.0 454.0Z" fill="#106020"/><polygon points="396.0,411.2 406.2,414.4 416.3,417.9 426.5,420.5 436.7,425.1 446.8,428.5 457.0,430.9 457.0,437.4 446.8,433.7 436.7,428.5 426.5,425.8 416.3,423.5 406.2,419.1 396.0,414.3" fill="#f0e040"/><polygon points="396.0,414.1 406.2,418.4 416.3,420.7 426.5,424.1 436.7,427.5 446.8,432.6 457.0,436.2 457.0,441.5 446.8,437.9 436.7,434.1 426.5,430.0 416.3,427.8 406.2,423.6 396.0,420.7" fill="#f0e040"/><polygon points="396.0,418.3 406.2,422.6 416.3,424.2 426.5,429.9 436.7,433.7 446.8,436.8 457.0,438.6 457.0,449.8 446.8,445.7 436.7,441.9 426.5,437.5 416.3,433.9 406.2,431.8 396.0,426.7" fill="#2090f0"/><polygon points="396.0,426.2 406.2,427.7 416.3,432.8 426.5,435.0 436.7,440.4 446.8,442.4 457.0,447.5 457.0,451.6 446.8,447.2 436.7,443.1 426.5,438.9 416.3,436.7 406.2,433.1 396.0,428.3" fill="#f0e040"/><polygon points="396.0,428.7 406.2,431.3 416.3,434.5 426.5,439.1 436.7,441.2 446.8,444.8 457.0,448.8 457.0,457.1 446.8,454.2 436.7,449.6 426.5,446.0 416.3,442.9 406.2,438.1 396.0,434.1" fill="#e0f8f0"/><polygon points="396.0,432.4 406.2,436.2 416.3,440.8 426.5,444.0 436.7,447.6 446.8,451.1 457.0,454.8 457.0,462.7 446.8,458.4 436.7,454.8 426.5,451.0 416.3,447.1 406.2,443.8 396.0,442.1" fill="#2090f0"/><polygon points="396.0,439.8 406.2,442.5 416.3,447.2 426.5,450.7 436.7,454.2 446.8,455.9 457.0,459.6 457.0,464.3 446.8,460.5 436.7,456.6 426.5,453.0 416.3,450.0 406.2,445.1 396.0,443.2" fill="#40e0f0"/><polygon points="396.0,441.8 406.2,446.0 416.3,448.0 426.5,452.9 436.7,455.9 446.8,458.6 457.0,462.3 457.0,470.6 446.8,469.0 436.7,465.0 426.5,460.2 416.3,456.8 406.2,454.5 396.0,450.4" fill="#f0e040"/><polygon points="396.0,447.6 406.2,450.3 416.3,455.4 426.5,458.0 436.7,461.0 446.8,466.8 457.0,468.2 457.0,475.5 446.8,471.7 436.7,467.0 426.5,463.1 416.3,459.1 406.2,455.4 396.0,454.0" fill="#40e0f0"/><polygon points="396.0,451.0 406.2,454.5 416.3,459.4 426.5,463.5 436.7,466.5 446.8,470.4 457.0,473.8 457.0,482.8 446.8,478.3 436.7,474.5 426.5,471.6 416.3,467.0 406.2,464.5 396.0,460.0" fill="#106020"/><polygon points="396.0,459.4 406.2,462.5 416.3,466.0 426.5,468.2 436.7,471.5 446.8,475.6 457.0,480.2 457.0,482.6 446.8,478.9 436.7,475.2 426.5,472.7 416.3,469.0 406.2,465.4 396.0,461.3" fill="#e0f8f0"/><polygon points="396.0,461.0 406.2,464.8 416.3,468.2 426.5,472.4 436.7,473.9 446.8,478.1 457.0,481.6 457.0,491.9 446.8,487.7 436.7,482.8 426.5,480.2 416.3,477.5 406.2,472.5 396.0,470.0" fill="#106020"/><polygon points="396.0,466.4 406.2,470.6 416.3,473.3 426.5,477.4 436.7,481.2 446.8,485.6 457.0,489.4 457.0,493.0 446.8,488.8 436.7,485.3 426.5,483.1 416.3,479.6 406.2,476.3 396.0,471.9" fill="#106020"/><polygon points="396.0,470.0 406.2,474.7 416.3,477.0 426.5,482.6 436.7,484.7 446.8,488.5 457.0,491.5 457.0,500.1 446.8,497.7 436.7,493.2 426.5,490.1 416.3,485.7 406.2,482.0 396.0,479.4" fill="#2090f0"/><polygon points="396.0,477.4 406.2,480.4 416.3,483.4 426.5,487.2 436.7,492.2 446.8,495.2 457.0,499.5 457.0,507.3 446.8,503.3 436.7,500.4 426.5,495.7 416.3,491.8 406.2,488.9 396.0,484.2" fill="#0a5a20"/><polygon points="396.0,484.2 406.2,487.5 416.3,490.5 426.5,494.9 436.7,498.2 446.8,501.5 457.0,504.8 457.0,509.7 446.8,506.7 436.7,502.9 426.5,497.5 416.3,495.3 406.2,491.6 396.0,489.0" fill="#106020"/><polygon points="396.0,487.5 406.2,490.8 416.3,494.3 426.5,496.5 436.7,501.3 446.8,505.6 457.0,507.8 457.0,513.9 446.8,509.1 436.7,507.2 426.5,501.6 416.3,500.0 406.2,495.3 396.0,493.0" fill="#2090f0"/><polygon points="396.0,490.9 406.2,493.2 416.3,497.0 426.5,502.2 436.7,504.2 446.8,509.3 457.0,512.4 457.0,515.2 446.8,511.1 436.7,509.7 426.5,505.4 416.3,502.5 406.2,498.8 396.0,494.4" fill="#e0f8f0"/><polygon points="396.0,494.2 406.2,497.5 416.3,500.4 426.5,503.9 436.7,506.5 446.8,510.3 457.0,515.4 457.0,519.0 446.8,516.9 436.7,511.4 426.5,507.7 416.3,504.2 406.2,502.6 396.0,498.4" fill="#106020"/><polygon points="396.0,496.3 406.2,501.3 416.3,504.1 426.5,508.4 436.7,510.9 446.8,515.4 457.0,518.5 457.0,522.4 446.8,518.7 436.7,515.6 426.5,510.7 416.3,507.9 406.2,503.4 396.0,500.7" fill="#e0f8f0"/><polygon points="396.0,499.3 406.2,504.2 416.3,507.4 426.5,511.0 436.7,513.6 446.8,517.0 457.0,520.7 457.0,527.7 446.8,526.1 436.7,521.9 426.5,517.2 416.3,515.1 406.2,512.1 396.0,508.7" fill="#f0e040"/></g><path d="M403.0 439.0 L418.0 436.0 L455.0 458.0 L455.0 480.0 L398.0 454.0Z" fill="none" stroke="#f4f0d0" stroke-width="0.7" opacity="0.8"/><g clip-path="url(#sf304)" shape-rendering="crispEdges"><path d="M455.0 458.0 L485.0 452.0 L507.0 442.0 L525.0 460.0 L500.0 470.0 L490.0 468.0 L455.0 480.0Z" fill="#40e0e0"/><polygon points="453.0,415.8 465.3,410.8 477.7,409.1 490.0,405.4 502.3,402.1 514.7,396.6 527.0,393.0 527.0,396.6 514.7,401.9 502.3,403.7 490.0,410.2 477.7,411.7 465.3,417.0 453.0,421.2" fill="#10c0c0"/><polygon points="453.0,418.5 465.3,414.3 477.7,411.7 490.0,406.7 502.3,404.1 514.7,400.2 527.0,396.2 527.0,401.0 514.7,406.2 502.3,409.9 490.0,413.3 477.7,416.2 465.3,420.6 453.0,424.4" fill="#40e0e0"/><polygon points="453.0,423.9 465.3,419.8 477.7,413.9 490.0,412.6 502.3,407.6 514.7,405.5 527.0,401.4 527.0,404.2 514.7,409.5 502.3,411.5 490.0,414.6 477.7,419.1 465.3,424.6 453.0,425.8" fill="#f080ff"/><polygon points="453.0,424.6 465.3,420.9 477.7,419.8 490.0,413.5 502.3,410.9 514.7,407.5 527.0,403.2 527.0,412.0 514.7,415.5 502.3,418.6 490.0,422.2 477.7,426.4 465.3,429.0 453.0,434.1" fill="#40e0e0"/><polygon points="453.0,430.5 465.3,428.4 477.7,423.6 490.0,419.4 502.3,416.3 514.7,412.6 527.0,409.3 527.0,413.9 514.7,415.9 502.3,419.1 490.0,422.8 477.7,427.9 465.3,431.8 453.0,433.8" fill="#f0e040"/><polygon points="453.0,433.2 465.3,430.2 477.7,427.2 490.0,423.4 502.3,418.8 514.7,415.0 527.0,411.7 527.0,418.0 514.7,423.5 502.3,425.5 490.0,428.7 477.7,434.4 465.3,438.8 453.0,442.1" fill="#80e040"/><polygon points="453.0,438.3 465.3,435.4 477.7,432.6 490.0,428.7 502.3,424.1 514.7,421.7 527.0,417.8 527.0,422.8 514.7,426.6 502.3,429.6 490.0,432.8 477.7,437.4 465.3,440.4 453.0,443.6" fill="#e040e0"/><polygon points="453.0,442.7 465.3,439.9 477.7,434.4 490.0,431.8 502.3,427.2 514.7,424.1 527.0,420.0 527.0,427.0 514.7,431.9 502.3,434.4 490.0,439.8 477.7,443.5 465.3,446.5 453.0,449.1" fill="#f080ff"/><polygon points="453.0,447.8 465.3,445.4 477.7,440.5 490.0,435.7 502.3,433.2 514.7,430.6 527.0,426.2 527.0,429.7 514.7,434.1 502.3,437.6 490.0,439.4 477.7,444.4 465.3,446.4 453.0,450.1" fill="#ff60c0"/><polygon points="453.0,451.6 465.3,445.8 477.7,443.9 490.0,438.0 502.3,436.6 514.7,431.8 527.0,427.0 527.0,432.2 514.7,434.6 502.3,439.6 490.0,443.2 477.7,446.1 465.3,450.1 453.0,453.6" fill="#40e0e0"/><polygon points="453.0,452.4 465.3,448.2 477.7,445.9 490.0,440.9 502.3,437.4 514.7,433.6 527.0,429.6 527.0,437.7 514.7,443.6 502.3,446.4 490.0,450.7 477.7,454.7 465.3,456.0 453.0,462.2" fill="#ff60c0"/><polygon points="453.0,457.8 465.3,456.5 477.7,452.5 490.0,448.0 502.3,442.9 514.7,440.9 527.0,436.2 527.0,443.3 514.7,447.2 502.3,451.4 490.0,455.4 477.7,457.6 465.3,460.7 453.0,464.4" fill="#40e0e0"/><polygon points="453.0,464.4 465.3,461.2 477.7,455.8 490.0,453.4 502.3,449.8 514.7,444.2 527.0,442.9 527.0,446.0 514.7,449.1 502.3,453.4 490.0,457.8 477.7,462.1 465.3,465.0 453.0,467.3" fill="#e040e0"/><polygon points="453.0,466.9 465.3,463.5 477.7,460.0 490.0,455.2 502.3,452.9 514.7,450.1 527.0,443.9 527.0,453.2 514.7,457.3 502.3,461.7 490.0,463.0 477.7,468.8 465.3,471.3 453.0,476.4" fill="#40e0e0"/><polygon points="453.0,473.1 465.3,468.8 477.7,466.5 490.0,461.4 502.3,459.1 514.7,455.1 527.0,450.2 527.0,455.9 514.7,461.3 502.3,463.5 490.0,466.4 477.7,472.6 465.3,474.2 453.0,479.3" fill="#60a0ff"/><polygon points="453.0,478.0 465.3,473.9 477.7,471.1 490.0,465.5 502.3,463.3 514.7,460.3 527.0,456.4 527.0,462.7 514.7,464.6 502.3,469.4 490.0,471.8 477.7,475.5 465.3,479.2 453.0,485.2" fill="#60a0ff"/><polygon points="453.0,481.3 465.3,480.1 477.7,475.4 490.0,471.2 502.3,469.0 514.7,463.0 527.0,460.0 527.0,464.1 514.7,469.1 502.3,472.0 490.0,475.5 477.7,478.3 465.3,483.7 453.0,485.7" fill="#e06030"/><polygon points="453.0,484.6 465.3,482.8 477.7,477.8 490.0,474.3 502.3,472.4 514.7,466.4 527.0,462.6 527.0,468.5 514.7,471.6 502.3,476.2 490.0,480.1 477.7,482.5 465.3,488.3 453.0,490.9" fill="#80e040"/><polygon points="453.0,491.2 465.3,485.1 477.7,481.6 490.0,479.4 502.3,475.8 514.7,471.1 527.0,467.4 527.0,474.4 514.7,478.4 502.3,480.7 490.0,484.6 477.7,489.0 465.3,492.8 453.0,495.8" fill="#a040c0"/><polygon points="453.0,495.7 465.3,491.0 477.7,486.7 490.0,483.0 502.3,478.8 514.7,477.5 527.0,471.3 527.0,477.6 514.7,483.7 502.3,486.5 490.0,488.6 477.7,493.3 465.3,497.3 453.0,501.5" fill="#e040e0"/><polygon points="453.0,500.9 465.3,497.1 477.7,493.2 490.0,489.2 502.3,484.6 514.7,482.1 527.0,477.6 527.0,482.8 514.7,485.4 502.3,492.1 490.0,495.2 477.7,496.7 465.3,501.7 453.0,506.7" fill="#e040e0"/><polygon points="453.0,504.2 465.3,500.0 477.7,497.9 490.0,492.7 502.3,489.0 514.7,485.8 527.0,482.1 527.0,488.0 514.7,490.9 502.3,496.1 490.0,499.0 477.7,503.7 465.3,507.6 453.0,512.0" fill="#a040c0"/></g><path d="M455.0 458.0 L485.0 452.0 L507.0 442.0 L525.0 460.0 L500.0 470.0 L490.0 468.0 L455.0 480.0Z" fill="none" stroke="#f4f0d0" stroke-width="0.7" opacity="0.8"/><g clip-path="url(#sf305)" shape-rendering="crispEdges"><path d="M380.0 461.0 L398.0 454.0 L455.0 480.0 L432.0 487.0Z" fill="#b07048"/><polygon points="378.0,418.3 391.2,423.7 404.3,429.2 417.5,434.2 430.7,439.1 443.8,444.2 457.0,449.9 457.0,456.9 443.8,451.8 430.7,445.9 417.5,440.8 404.3,435.3 391.2,430.7 378.0,425.4" fill="#b07048"/><polygon points="378.0,424.0 391.2,428.3 404.3,434.1 417.5,439.1 430.7,445.0 443.8,449.8 457.0,455.3 457.0,460.0 443.8,454.7 430.7,449.0 417.5,444.6 404.3,439.2 391.2,433.0 378.0,427.9" fill="#a06040"/><polygon points="378.0,426.7 391.2,432.6 404.3,437.3 417.5,442.4 430.7,448.4 443.8,453.4 457.0,458.6 457.0,465.4 443.8,460.7 430.7,454.8 417.5,450.2 404.3,444.7 391.2,439.2 378.0,433.9" fill="#40e0e0"/><polygon points="378.0,432.9 391.2,437.8 404.3,442.5 417.5,448.6 430.7,453.4 443.8,459.2 457.0,464.5 457.0,468.2 443.8,463.3 430.7,458.9 417.5,452.8 404.3,447.8 391.2,442.7 378.0,437.4" fill="#10a0c0"/><polygon points="378.0,436.2 391.2,441.3 404.3,446.3 417.5,451.4 430.7,456.7 443.8,462.6 457.0,467.7 457.0,471.0 443.8,465.8 430.7,461.4 417.5,456.2 404.3,450.9 391.2,445.6 378.0,440.4" fill="#a06040"/><polygon points="378.0,438.8 391.2,443.9 404.3,449.1 417.5,455.1 430.7,459.9 443.8,465.5 457.0,470.1 457.0,478.0 443.8,473.3 430.7,467.7 417.5,462.1 404.3,457.4 391.2,451.3 378.0,446.1" fill="#b07048"/><polygon points="378.0,444.3 391.2,450.5 404.3,455.1 417.5,460.6 430.7,465.2 443.8,471.4 457.0,476.8 457.0,484.3 443.8,479.0 430.7,473.7 417.5,468.8 404.3,463.6 391.2,458.1 378.0,452.9" fill="#b07048"/><polygon points="378.0,450.8 391.2,455.6 404.3,461.3 417.5,466.9 430.7,471.4 443.8,477.0 457.0,482.5 457.0,487.2 443.8,481.1 430.7,475.7 417.5,470.8 404.3,465.6 391.2,460.2 378.0,455.6" fill="#40e0e0"/><polygon points="378.0,453.5 391.2,459.5 404.3,464.1 417.5,470.0 430.7,475.0 443.8,479.7 457.0,485.0 457.0,492.4 443.8,487.7 430.7,482.1 417.5,477.1 404.3,471.9 391.2,466.5 378.0,461.1" fill="#b07048"/><polygon points="378.0,459.6 391.2,464.8 404.3,469.2 417.5,474.5 430.7,480.1 443.8,486.0 457.0,490.2 457.0,495.0 443.8,490.0 430.7,485.1 417.5,480.1 404.3,474.7 391.2,468.5 378.0,463.6" fill="#b07048"/><polygon points="378.0,462.1 391.2,467.4 404.3,473.3 417.5,478.1 430.7,483.4 443.8,489.0 457.0,493.9 457.0,501.0 443.8,495.2 430.7,490.6 417.5,484.7 404.3,479.5 391.2,474.9 378.0,469.0" fill="#b07048"/><polygon points="378.0,467.2 391.2,472.7 404.3,478.6 417.5,482.9 430.7,488.2 443.8,493.5 457.0,499.6 457.0,503.6 443.8,498.7 430.7,493.3 417.5,487.2 404.3,482.5 391.2,477.0 378.0,471.7" fill="#10a0c0"/><polygon points="378.0,470.4 391.2,475.8 404.3,481.2 417.5,487.0 430.7,491.7 443.8,497.1 457.0,502.6 457.0,505.6 443.8,501.2 430.7,495.2 417.5,490.1 404.3,485.5 391.2,479.2 378.0,474.2" fill="#6a2020"/><polygon points="378.0,473.3 391.2,478.9 404.3,484.0 417.5,489.2 430.7,494.7 443.8,500.5 457.0,505.2 457.0,512.2 443.8,507.0 430.7,501.4 417.5,496.5 404.3,491.5 391.2,485.8 378.0,481.0" fill="#a06040"/><polygon points="378.0,479.3 391.2,483.9 404.3,489.0 417.5,494.8 430.7,499.3 443.8,505.4 457.0,510.2 457.0,516.4 443.8,511.1 430.7,506.0 417.5,500.1 404.3,495.1 391.2,490.4 378.0,484.4" fill="#40e0e0"/><polygon points="378.0,482.6 391.2,488.6 404.3,494.2 417.5,499.2 430.7,504.2 443.8,509.6 457.0,514.9 457.0,524.0 443.8,518.9 430.7,513.5 417.5,508.6 404.3,502.2 391.2,497.6 378.0,491.8" fill="#b07048"/><polygon points="378.0,489.5 391.2,494.7 404.3,500.7 417.5,505.7 430.7,510.8 443.8,516.7 457.0,521.4 457.0,526.1 443.8,520.7 430.7,515.9 417.5,510.7 404.3,505.2 391.2,499.6 378.0,494.6" fill="#6a2020"/><polygon points="378.0,494.1 391.2,498.4 404.3,504.6 417.5,509.4 430.7,514.9 443.8,520.0 457.0,525.2 457.0,533.0 443.8,527.4 430.7,522.1 417.5,516.9 404.3,511.4 391.2,506.6 378.0,500.9" fill="#6a2020"/><polygon points="378.0,498.9 391.2,504.6 404.3,509.7 417.5,514.5 430.7,520.4 443.8,525.8 457.0,530.9 457.0,539.1 443.8,534.2 430.7,528.2 417.5,523.3 404.3,518.5 391.2,512.4 378.0,507.4" fill="#40e0e0"/><polygon points="378.0,505.2 391.2,511.2 404.3,515.7 417.5,521.4 430.7,526.5 443.8,532.2 457.0,537.2 457.0,545.7 443.8,540.3 430.7,535.3 417.5,530.6 404.3,524.6 391.2,519.9 378.0,514.7" fill="#40e0e0"/><polygon points="378.0,511.7 391.2,517.4 404.3,523.1 417.5,528.4 430.7,533.1 443.8,537.9 457.0,544.1 457.0,549.3 443.8,543.6 430.7,537.9 417.5,533.1 404.3,528.0 391.2,522.7 378.0,517.6" fill="#b07048"/><polygon points="378.0,515.6 391.2,521.5 404.3,526.3 417.5,531.8 430.7,537.5 443.8,542.7 457.0,547.8 457.0,555.8 443.8,550.9 430.7,546.0 417.5,540.8 404.3,534.7 391.2,530.1 378.0,524.1" fill="#a06040"/><polygon points="378.0,522.0 391.2,527.5 404.3,533.4 417.5,538.6 430.7,543.8 443.8,548.9 457.0,554.3 457.0,559.8 443.8,554.9 430.7,549.4 417.5,543.7 404.3,539.2 391.2,534.0 378.0,528.8" fill="#10a0c0"/></g><path d="M380.0 461.0 L398.0 454.0 L455.0 480.0 L432.0 487.0Z" fill="none" stroke="#f4f0d0" stroke-width="0.7" opacity="0.8"/><g clip-path="url(#sf306)" shape-rendering="crispEdges"><path d="M380.0 461.0 L432.0 487.0 L432.0 515.0 L381.0 481.0Z" fill="#e8e8d0"/><polygon points="378.0,429.5 387.3,433.9 396.7,438.8 406.0,443.5 415.3,447.8 424.7,452.9 434.0,457.5 434.0,466.3 424.7,461.2 415.3,456.9 406.0,452.1 396.7,447.7 387.3,442.6 378.0,437.7" fill="#30e060"/><polygon points="378.0,436.0 387.3,440.3 396.7,444.4 406.0,450.0 415.3,455.0 424.7,458.8 434.0,463.6 434.0,470.3 424.7,465.8 415.3,461.8 406.0,456.9 396.7,451.7 387.3,448.1 378.0,443.5" fill="#106030"/><polygon points="378.0,441.1 387.3,444.9 396.7,450.4 406.0,455.5 415.3,459.0 424.7,463.8 434.0,468.6 434.0,477.9 424.7,472.4 415.3,468.5 406.0,463.9 396.7,458.7 387.3,455.0 378.0,449.9" fill="#e8e8d0"/><polygon points="378.0,447.4 387.3,451.8 396.7,457.0 406.0,460.9 415.3,465.8 424.7,470.9 434.0,475.0 434.0,479.9 424.7,475.5 415.3,469.8 406.0,465.7 396.7,461.3 387.3,457.0 378.0,452.0" fill="#106030"/><polygon points="378.0,451.4 387.3,456.0 396.7,459.3 406.0,465.0 415.3,469.1 424.7,474.0 434.0,478.1 434.0,487.0 424.7,482.5 415.3,478.9 406.0,473.1 396.7,468.7 387.3,464.0 378.0,460.3" fill="#30e060"/><polygon points="378.0,457.0 387.3,462.2 396.7,467.0 406.0,472.1 415.3,476.8 424.7,480.4 434.0,486.1 434.0,494.3 424.7,488.4 415.3,484.9 406.0,479.5 396.7,475.2 387.3,471.0 378.0,465.1" fill="#e8e8d0"/><polygon points="378.0,464.3 387.3,468.1 396.7,472.3 406.0,477.9 415.3,482.0 424.7,486.8 434.0,491.0 434.0,498.4 424.7,493.7 415.3,488.9 406.0,484.5 396.7,480.3 387.3,475.0 378.0,471.2" fill="#1010c0"/><polygon points="378.0,469.4 387.3,472.7 396.7,478.1 406.0,482.7 415.3,487.0 424.7,492.8 434.0,496.8 434.0,502.4 424.7,497.7 415.3,492.8 406.0,488.2 396.7,482.8 387.3,478.8 378.0,474.3" fill="#e8e8d0"/><polygon points="378.0,473.3 387.3,478.2 396.7,482.7 406.0,486.4 415.3,491.6 424.7,495.7 434.0,500.8 434.0,508.4 424.7,503.9 415.3,499.3 406.0,495.1 396.7,489.9 387.3,485.1 378.0,480.4" fill="#106030"/><polygon points="378.0,478.9 387.3,482.8 396.7,487.6 406.0,491.9 415.3,497.4 424.7,501.6 434.0,506.4 434.0,513.1 424.7,508.3 415.3,502.4 406.0,497.8 396.7,494.3 387.3,489.1 378.0,484.8" fill="#1010c0"/><polygon points="378.0,483.5 387.3,486.9 396.7,491.7 406.0,497.1 415.3,502.1 424.7,506.4 434.0,510.4 434.0,519.6 424.7,514.4 415.3,510.2 406.0,505.6 396.7,499.4 387.3,495.1 378.0,491.3" fill="#0a5a2a"/><polygon points="378.0,488.4 387.3,493.7 396.7,498.8 406.0,502.2 415.3,508.1 424.7,511.4 434.0,517.4 434.0,526.4 424.7,522.0 415.3,516.9 406.0,511.7 396.7,507.5 387.3,503.7 378.0,497.5" fill="#106030"/><polygon points="378.0,496.6 387.3,499.8 396.7,505.9 406.0,509.1 415.3,514.5 424.7,519.2 434.0,524.6 434.0,531.7 424.7,526.7 415.3,523.1 406.0,517.1 396.7,513.1 387.3,507.7 378.0,504.1" fill="#0a5a2a"/><polygon points="378.0,502.5 387.3,506.5 396.7,511.4 406.0,516.2 415.3,520.5 424.7,524.8 434.0,530.3 434.0,535.9 424.7,531.2 415.3,526.5 406.0,522.7 396.7,518.0 387.3,512.3 378.0,507.4" fill="#0a5a2a"/><polygon points="378.0,507.0 387.3,511.0 396.7,516.1 406.0,520.8 415.3,525.7 424.7,530.3 434.0,535.0 434.0,543.8 424.7,538.7 415.3,533.6 406.0,529.3 396.7,524.7 387.3,519.3 378.0,516.1" fill="#e8e8d0"/><polygon points="378.0,513.3 387.3,518.3 396.7,523.0 406.0,527.4 415.3,532.5 424.7,536.7 434.0,540.3 434.0,545.7 424.7,540.7 415.3,535.5 406.0,531.9 396.7,527.3 387.3,522.4 378.0,516.6" fill="#106030"/><polygon points="378.0,515.8 387.3,520.6 396.7,525.0 406.0,530.0 415.3,534.8 424.7,538.9 434.0,544.2 434.0,552.9 424.7,548.8 415.3,543.6 406.0,540.0 396.7,535.3 387.3,529.8 378.0,524.9" fill="#e8e8d0"/><polygon points="378.0,522.8 387.3,528.3 396.7,532.0 406.0,537.9 415.3,540.9 424.7,546.3 434.0,551.0 434.0,558.1 424.7,553.7 415.3,548.7 406.0,543.7 396.7,539.1 387.3,534.8 378.0,529.2" fill="#e8e8d0"/><polygon points="378.0,528.2 387.3,532.7 396.7,537.0 406.0,541.8 415.3,547.1 424.7,551.7 434.0,555.7 434.0,563.6 424.7,559.9 415.3,554.6 406.0,550.8 396.7,545.0 387.3,541.3 378.0,536.6" fill="#106030"/><polygon points="378.0,533.6 387.3,538.6 396.7,544.2 406.0,547.8 415.3,552.5 424.7,558.0 434.0,561.8 434.0,566.4 424.7,561.7 415.3,555.6 406.0,551.6 396.7,547.2 387.3,542.7 378.0,538.4" fill="#2030e8"/><polygon points="378.0,537.3 387.3,541.4 396.7,546.7 406.0,551.4 415.3,555.1 424.7,559.8 434.0,564.3 434.0,568.2 424.7,564.8 415.3,560.2 406.0,554.7 396.7,550.4 387.3,545.3 378.0,540.9" fill="#30e060"/><polygon points="378.0,539.7 387.3,544.1 396.7,549.7 406.0,554.4 415.3,558.1 424.7,563.0 434.0,567.4 434.0,571.1 424.7,566.5 415.3,561.5 406.0,557.7 396.7,553.0 387.3,548.8 378.0,543.2" fill="#2030e8"/><polygon points="378.0,542.9 387.3,546.8 396.7,551.5 406.0,555.9 415.3,561.9 424.7,565.5 434.0,571.1 434.0,575.4 424.7,569.9 415.3,565.5 406.0,560.9 396.7,555.9 387.3,552.0 378.0,547.0" fill="#0a5a2a"/><polygon points="378.0,546.4 387.3,549.9 396.7,554.6 406.0,560.2 415.3,564.5 424.7,568.5 434.0,574.4 434.0,580.0 424.7,574.7 415.3,570.2 406.0,565.8 396.7,560.8 387.3,557.0 378.0,552.1" fill="#106030"/></g><path d="M380.0 461.0 L432.0 487.0 L432.0 515.0 L381.0 481.0Z" fill="none" stroke="#f4f0d0" stroke-width="0.7" opacity="0.8"/><g clip-path="url(#sf307)" shape-rendering="crispEdges"><path d="M432.0 487.0 L455.0 480.0 L490.0 468.0 L525.0 460.0 L539.0 478.0 L519.0 482.0 L520.0 496.0 L433.0 514.0Z" fill="#e06030"/><polygon points="430.0,423.5 448.5,417.1 467.0,412.2 485.5,407.3 504.0,399.2 522.5,394.8 541.0,389.0 541.0,396.1 522.5,399.9 504.0,406.6 485.5,411.9 467.0,418.5 448.5,422.0 430.0,427.6" fill="#e06030"/><polygon points="430.0,425.4 448.5,420.5 467.0,415.4 485.5,411.3 504.0,404.2 522.5,397.6 541.0,392.1 541.0,401.8 522.5,404.9 504.0,413.2 485.5,417.0 467.0,423.1 448.5,427.8 430.0,433.7" fill="#e020e0"/><polygon points="430.0,432.2 448.5,425.3 467.0,422.4 485.5,417.1 504.0,411.6 522.5,405.5 541.0,397.8 541.0,402.2 522.5,407.4 504.0,414.2 485.5,419.4 467.0,423.7 448.5,429.3 430.0,436.7" fill="#f080ff"/><polygon points="430.0,434.4 448.5,429.8 467.0,425.6 485.5,417.4 504.0,411.4 522.5,406.1 541.0,402.6 541.0,409.5 522.5,415.6 504.0,420.9 485.5,425.5 467.0,429.2 448.5,436.4 430.0,442.2" fill="#40e0e0"/><polygon points="430.0,438.7 448.5,435.2 467.0,427.7 485.5,422.4 504.0,418.2 522.5,413.5 541.0,405.7 541.0,410.2 522.5,417.0 504.0,424.0 485.5,427.6 467.0,434.3 448.5,438.6 430.0,444.6" fill="#20e060"/><polygon points="430.0,443.3 448.5,438.6 467.0,431.4 485.5,427.3 504.0,422.3 522.5,416.0 541.0,410.8 541.0,414.9 522.5,418.7 504.0,426.2 485.5,432.2 467.0,437.5 448.5,441.5 430.0,448.5" fill="#10c0c0"/><polygon points="430.0,446.5 448.5,442.2 467.0,435.6 485.5,431.3 504.0,425.6 522.5,420.1 541.0,412.7 541.0,418.0 522.5,424.8 504.0,428.6 485.5,435.2 467.0,439.7 448.5,446.3 430.0,451.8" fill="#2060d0"/><polygon points="430.0,450.5 448.5,444.9 467.0,438.4 485.5,435.0 504.0,426.4 522.5,423.9 541.0,417.5 541.0,425.0 522.5,429.8 504.0,434.0 485.5,440.3 467.0,448.0 448.5,451.6 430.0,458.1" fill="#2060d0"/><polygon points="430.0,454.2 448.5,449.3 467.0,444.9 485.5,438.2 504.0,432.8 522.5,429.1 541.0,422.5 541.0,426.4 522.5,432.7 504.0,439.1 485.5,444.8 467.0,448.4 448.5,453.2 430.0,459.0" fill="#60a0ff"/><polygon points="430.0,457.5 448.5,455.0 467.0,448.7 485.5,442.6 504.0,438.2 522.5,431.3 541.0,426.3 541.0,430.6 522.5,437.3 504.0,443.2 485.5,448.7 467.0,454.7 448.5,458.5 430.0,465.3" fill="#80e040"/><polygon points="430.0,463.3 448.5,457.2 467.0,451.4 485.5,447.8 504.0,440.0 522.5,434.5 541.0,429.6 541.0,434.3 522.5,441.5 504.0,445.9 485.5,453.2 467.0,459.4 448.5,464.2 430.0,468.7" fill="#10c0c0"/><polygon points="430.0,466.9 448.5,463.3 467.0,456.6 485.5,451.2 504.0,444.3 522.5,439.9 541.0,432.9 541.0,441.7 522.5,448.2 504.0,452.9 485.5,457.5 467.0,462.1 448.5,468.8 430.0,475.5" fill="#e06030"/><polygon points="430.0,473.5 448.5,466.5 467.0,460.6 485.5,457.6 504.0,449.2 522.5,443.8 541.0,438.9 541.0,447.5 522.5,452.6 504.0,459.6 485.5,462.2 467.0,470.7 448.5,474.8 430.0,480.9" fill="#20e060"/><polygon points="430.0,477.4 448.5,473.9 467.0,466.7 485.5,461.6 504.0,455.5 522.5,449.9 541.0,446.2 541.0,449.6 522.5,456.9 504.0,462.6 485.5,469.1 467.0,473.1 448.5,478.9 430.0,482.9" fill="#f080ff"/><polygon points="430.0,481.3 448.5,478.3 467.0,472.0 485.5,466.5 504.0,459.5 522.5,454.7 541.0,450.9 541.0,455.6 522.5,458.9 504.0,466.2 485.5,470.1 467.0,476.5 448.5,481.8 430.0,487.1" fill="#f0e040"/><polygon points="430.0,486.1 448.5,480.1 467.0,474.7 485.5,470.8 504.0,465.2 522.5,458.6 541.0,453.0 541.0,457.9 522.5,463.9 504.0,470.0 485.5,474.8 467.0,480.9 448.5,485.5 430.0,491.5" fill="#80e040"/><polygon points="430.0,488.7 448.5,483.2 467.0,477.9 485.5,474.1 504.0,466.3 522.5,463.0 541.0,456.9 541.0,463.1 522.5,466.0 504.0,473.3 485.5,480.0 467.0,484.1 448.5,490.5 430.0,493.8" fill="#ff60c0"/><polygon points="430.0,495.2 448.5,489.5 467.0,482.0 485.5,476.4 504.0,471.2 522.5,465.7 541.0,461.4 541.0,465.8 522.5,470.9 504.0,474.1 485.5,481.7 467.0,485.6 448.5,493.2 430.0,497.1" fill="#2060d0"/><polygon points="430.0,498.0 448.5,491.9 467.0,487.0 485.5,479.5 504.0,476.1 522.5,467.8 541.0,464.8 541.0,469.3 522.5,473.4 504.0,480.5 485.5,484.3 467.0,491.6 448.5,496.4 430.0,500.7" fill="#f080ff"/><polygon points="430.0,500.5 448.5,495.0 467.0,489.7 485.5,483.3 504.0,479.9 522.5,474.0 541.0,467.3 541.0,471.9 522.5,476.2 504.0,484.3 485.5,489.2 467.0,493.9 448.5,500.3 430.0,504.7" fill="#80e040"/><polygon points="430.0,503.8 448.5,497.8 467.0,494.7 485.5,488.4 504.0,481.6 522.5,477.6 541.0,469.6 541.0,478.4 522.5,483.6 504.0,491.5 485.5,497.0 467.0,500.1 448.5,508.0 430.0,511.6" fill="#e020e0"/><polygon points="430.0,509.9 448.5,504.1 467.0,499.9 485.5,494.0 504.0,488.7 522.5,483.7 541.0,475.7 541.0,482.7 522.5,487.4 504.0,493.5 485.5,500.0 467.0,504.0 448.5,510.8 430.0,516.9" fill="#e020e0"/><polygon points="430.0,512.9 448.5,507.1 467.0,503.5 485.5,497.0 504.0,490.4 522.5,486.1 541.0,481.1 541.0,484.7 522.5,488.8 504.0,496.1 485.5,500.0 467.0,505.0 448.5,512.6 430.0,517.1" fill="#80e040"/><polygon points="430.0,516.1 448.5,510.0 467.0,506.3 485.5,501.5 504.0,494.6 522.5,489.3 541.0,481.8 541.0,489.6 522.5,495.6 504.0,499.8 485.5,504.4 467.0,510.6 448.5,515.2 430.0,521.1" fill="#f0e040"/><polygon points="430.0,522.2 448.5,515.4 467.0,508.2 485.5,505.0 504.0,497.8 522.5,493.4 541.0,488.8 541.0,493.8 522.5,499.8 504.0,504.0 485.5,508.5 467.0,514.6 448.5,522.0 430.0,524.7" fill="#10c0c0"/><polygon points="430.0,525.3 448.5,517.9 467.0,512.1 485.5,508.8 504.0,503.8 522.5,498.4 541.0,490.6 541.0,498.2 522.5,505.5 504.0,509.7 485.5,515.7 467.0,521.9 448.5,526.5 430.0,533.5" fill="#ff60c0"/><polygon points="430.0,530.4 448.5,524.8 467.0,518.3 485.5,514.4 504.0,507.4 522.5,502.4 541.0,497.1 541.0,506.0 522.5,510.3 504.0,515.2 485.5,521.1 467.0,527.2 448.5,534.2 430.0,539.6" fill="#f080ff"/><polygon points="430.0,536.6 448.5,530.0 467.0,524.9 485.5,519.0 504.0,514.1 522.5,507.6 541.0,502.5 541.0,506.6 522.5,513.1 504.0,519.2 485.5,524.1 467.0,530.3 448.5,534.9 430.0,540.8" fill="#80e040"/><polygon points="430.0,541.4 448.5,534.8 467.0,528.4 485.5,524.6 504.0,518.1 522.5,512.4 541.0,505.4 541.0,510.9 522.5,518.2 504.0,523.8 485.5,528.1 467.0,533.7 448.5,538.3 430.0,543.1" fill="#f0e040"/><polygon points="430.0,543.8 448.5,539.1 467.0,532.3 485.5,525.7 504.0,519.6 522.5,516.8 541.0,509.8 541.0,513.9 522.5,519.3 504.0,524.6 485.5,532.0 467.0,536.5 448.5,541.1 430.0,548.5" fill="#20e060"/><polygon points="430.0,547.5 448.5,540.5 467.0,535.3 485.5,530.3 504.0,524.5 522.5,520.0 541.0,514.0 541.0,520.2 522.5,524.7 504.0,528.5 485.5,535.5 467.0,541.5 448.5,545.2 430.0,551.5" fill="#40e0e0"/><polygon points="430.0,551.3 448.5,546.0 467.0,538.8 485.5,534.3 504.0,527.7 522.5,521.9 541.0,518.8 541.0,524.8 522.5,528.3 504.0,534.0 485.5,540.4 467.0,545.4 448.5,550.2 430.0,557.4" fill="#e06030"/></g><path d="M432.0 487.0 L455.0 480.0 L490.0 468.0 L525.0 460.0 L539.0 478.0 L519.0 482.0 L520.0 496.0 L433.0 514.0Z" fill="none" stroke="#f4f0d0" stroke-width="0.7" opacity="0.8"/><g clip-path="url(#sf308)" shape-rendering="crispEdges"><path d="M519.0 478.0 L536.0 475.0 L541.0 489.0 L520.0 494.0Z" fill="#6a1a30"/><polygon points="517.0,465.7 521.3,464.9 525.7,463.9 530.0,463.2 534.3,462.2 538.7,461.2 543.0,460.6 543.0,466.1 538.7,466.5 534.3,467.4 530.0,468.5 525.7,469.5 521.3,470.0 517.0,471.0" fill="#8a3050"/><polygon points="517.0,469.7 521.3,468.8 525.7,468.0 530.0,467.0 534.3,466.4 538.7,465.3 543.0,464.8 543.0,472.5 538.7,473.2 534.3,474.3 530.0,475.1 525.7,476.0 521.3,477.1 517.0,477.8" fill="#7a2035"/><polygon points="517.0,475.5 521.3,474.9 525.7,474.1 530.0,472.9 534.3,472.3 538.7,471.4 543.0,470.8 543.0,477.6 538.7,478.5 534.3,479.2 530.0,480.2 525.7,481.3 521.3,482.2 517.0,482.5" fill="#7a2035"/><polygon points="517.0,481.2 521.3,479.9 525.7,479.4 530.0,478.3 534.3,477.6 538.7,476.7 543.0,475.6 543.0,481.1 538.7,481.9 534.3,482.5 530.0,483.8 525.7,484.7 521.3,485.5 517.0,486.1" fill="#7a2035"/><polygon points="517.0,484.6 521.3,483.8 525.7,483.2 530.0,482.1 534.3,481.3 538.7,480.8 543.0,479.4 543.0,487.5 538.7,488.8 534.3,489.4 530.0,490.2 525.7,491.3 521.3,491.9 517.0,492.9" fill="#6a1a30"/><polygon points="517.0,490.8 521.3,489.9 525.7,489.1 530.0,488.2 534.3,487.6 538.7,486.4 543.0,485.7 543.0,491.8 538.7,492.6 534.3,493.7 530.0,494.4 525.7,495.4 521.3,496.3 517.0,496.7" fill="#7a2035"/><polygon points="517.0,495.8 521.3,494.5 525.7,493.6 530.0,493.2 534.3,492.0 538.7,491.1 543.0,490.5 543.0,499.2 538.7,500.0 534.3,500.8 530.0,502.0 525.7,502.8 521.3,503.5 517.0,504.8" fill="#6a1a30"/><polygon points="517.0,502.2 521.3,501.4 525.7,500.3 530.0,499.7 534.3,498.6 538.7,497.9 543.0,497.2 543.0,505.2 538.7,506.2 534.3,507.2 530.0,507.9 525.7,508.6 521.3,509.3 517.0,510.5" fill="#6a1a30"/></g><path d="M519.0 478.0 L536.0 475.0 L541.0 489.0 L520.0 494.0Z" fill="none" stroke="#f4f0d0" stroke-width="0.7" opacity="0.8"/><circle cx="148" cy="450" r="26" fill="#fff"/><circle cx="143" cy="484" r="13" fill="#fff"/><circle cx="107.5" cy="497" r="6" fill="#fff"/><rect x="305" y="173" width="4" height="4" fill="#cfeeee" stroke="#3a4a4a" stroke-width="1"/><rect x="305" y="318" width="4" height="4" fill="#cfeeee" stroke="#3a4a4a" stroke-width="1"/><rect x="344" y="248" width="4" height="4" fill="#cfeeee" stroke="#3a4a4a" stroke-width="1"/><rect x="369" y="269" width="4" height="4" fill="#cfeeee" stroke="#3a4a4a" stroke-width="1"/><rect x="392" y="301" width="4" height="4" fill="#cfeeee" stroke="#3a4a4a" stroke-width="1"/><rect x="433" y="314" width="4" height="4" fill="#cfeeee" stroke="#3a4a4a" stroke-width="1"/><rect x="452" y="206" width="4" height="4" fill="#cfeeee" stroke="#3a4a4a" stroke-width="1"/><rect x="345" y="435" width="4" height="4" fill="#cfeeee" stroke="#3a4a4a" stroke-width="1"/><rect x="523" y="381" width="4" height="4" fill="#cfeeee" stroke="#3a4a4a" stroke-width="1"/><rect x="452" y="480" width="4" height="4" fill="#cfeeee" stroke="#3a4a4a" stroke-width="1"/></svg><rect x="56" y="135" width="1" height="2" fill="#000"/><rect x="65" y="130" width="1" height="7" fill="#000"/><rect x="75" y="135" width="1" height="2" fill="#000"/><rect x="84" y="135" width="1" height="2" fill="#000"/><rect x="94" y="135" width="1" height="2" fill="#000"/><rect x="103" y="135" width="1" height="2" fill="#000"/><rect x="113" y="134" width="1" height="3" fill="#000"/><rect x="122" y="135" width="1" height="2" fill="#000"/><rect x="132" y="135" width="1" height="2" fill="#000"/><rect x="141" y="135" width="1" height="2" fill="#000"/><rect x="151" y="135" width="1" height="2" fill="#000"/><rect x="160" y="130" width="1" height="7" fill="#000"/><rect x="170" y="135" width="1" height="2" fill="#000"/><rect x="179" y="135" width="1" height="2" fill="#000"/><rect x="189" y="135" width="1" height="2" fill="#000"/><rect x="198" y="135" width="1" height="2" fill="#000"/><rect x="208" y="134" width="1" height="3" fill="#000"/><rect x="217" y="135" width="1" height="2" fill="#000"/><rect x="227" y="135" width="1" height="2" fill="#000"/><rect x="236" y="135" width="1" height="2" fill="#000"/><rect x="246" y="135" width="1" height="2" fill="#000"/><rect x="255" y="130" width="1" height="7" fill="#000"/><rect x="265" y="135" width="1" height="2" fill="#000"/><rect x="274" y="135" width="1" height="2" fill="#000"/><rect x="284" y="135" width="1" height="2" fill="#000"/><rect x="293" y="135" width="1" height="2" fill="#000"/><rect x="303" y="134" width="1" height="3" fill="#000"/><rect x="312" y="135" width="1" height="2" fill="#000"/><rect x="322" y="135" width="1" height="2" fill="#000"/><rect x="331" y="135" width="1" height="2" fill="#000"/><rect x="341" y="135" width="1" height="2" fill="#000"/><rect x="350" y="130" width="1" height="7" fill="#000"/><rect x="359" y="135" width="1" height="2" fill="#000"/><rect x="369" y="135" width="1" height="2" fill="#000"/><rect x="378" y="135" width="1" height="2" fill="#000"/><rect x="388" y="135" width="1" height="2" fill="#000"/><rect x="397" y="134" width="1" height="3" fill="#000"/><rect x="407" y="135" width="1" height="2" fill="#000"/><rect x="416" y="135" width="1" height="2" fill="#000"/><rect x="426" y="135" width="1" height="2" fill="#000"/><rect x="435" y="135" width="1" height="2" fill="#000"/><rect x="445" y="130" width="1" height="7" fill="#000"/><rect x="454" y="135" width="1" height="2" fill="#000"/><rect x="464" y="135" width="1" height="2" fill="#000"/><rect x="473" y="135" width="1" height="2" fill="#000"/><rect x="483" y="135" width="1" height="2" fill="#000"/><rect x="492" y="134" width="1" height="3" fill="#000"/><rect x="502" y="135" width="1" height="2" fill="#000"/><rect x="511" y="135" width="1" height="2" fill="#000"/><rect x="521" y="135" width="1" height="2" fill="#000"/><rect x="530" y="135" width="1" height="2" fill="#000"/><rect x="540" y="130" width="1" height="7" fill="#000"/><rect x="549" y="135" width="1" height="2" fill="#000"/><rect x="559" y="135" width="1" height="2" fill="#000"/><rect x="568" y="135" width="1" height="2" fill="#000"/><rect x="578" y="135" width="1" height="2" fill="#000"/><rect x="587" y="134" width="1" height="3" fill="#000"/><rect x="597" y="135" width="1" height="2" fill="#000"/><rect x="606" y="135" width="1" height="2" fill="#000"/><rect x="616" y="135" width="1" height="2" fill="#000"/><rect x="625" y="135" width="1" height="2" fill="#000"/><rect x="635" y="130" width="1" height="7" fill="#000"/><rect x="644" y="135" width="1" height="2" fill="#000"/><rect x="654" y="135" width="1" height="2" fill="#000"/><rect x="663" y="135" width="1" height="2" fill="#000"/><rect x="673" y="135" width="1" height="2" fill="#000"/><rect x="682" y="134" width="1" height="3" fill="#000"/><rect x="692" y="135" width="1" height="2" fill="#000"/><rect x="701" y="135" width="1" height="2" fill="#000"/><rect x="711" y="135" width="1" height="2" fill="#000"/><rect x="720" y="135" width="1" height="2" fill="#000"/><rect x="730" y="130" width="1" height="7" fill="#000"/><rect x="739" y="135" width="1" height="2" fill="#000"/><rect x="749" y="135" width="1" height="2" fill="#000"/><rect x="758" y="135" width="1" height="2" fill="#000"/><rect x="768" y="135" width="1" height="2" fill="#000"/><rect x="777" y="134" width="1" height="3" fill="#000"/><rect x="787" y="135" width="1" height="2" fill="#000"/><rect x="796" y="135" width="1" height="2" fill="#000"/><rect x="806" y="135" width="1" height="2" fill="#000"/><rect x="815" y="135" width="1" height="2" fill="#000"/><rect x="824" y="130" width="1" height="7" fill="#000"/><rect x="834" y="135" width="1" height="2" fill="#000"/><rect x="843" y="135" width="1" height="2" fill="#000"/><rect x="853" y="135" width="1" height="2" fill="#000"/><rect x="862" y="135" width="1" height="2" fill="#000"/><rect x="872" y="134" width="1" height="3" fill="#000"/><rect x="881" y="135" width="1" height="2" fill="#000"/><rect x="891" y="135" width="1" height="2" fill="#000"/><rect x="900" y="135" width="1" height="2" fill="#000"/><rect x="910" y="135" width="1" height="2" fill="#000"/><rect x="919" y="130" width="1" height="7" fill="#000"/><rect x="929" y="135" width="1" height="2" fill="#000"/><rect x="938" y="135" width="1" height="2" fill="#000"/><rect x="948" y="135" width="1" height="2" fill="#000"/><rect x="957" y="135" width="1" height="2" fill="#000"/><rect x="967" y="134" width="1" height="3" fill="#000"/><rect x="976" y="135" width="1" height="2" fill="#000"/><rect x="986" y="135" width="1" height="2" fill="#000"/><rect x="995" y="135" width="1" height="2" fill="#000"/><rect x="44" y="145" width="5" height="1" fill="#000"/><rect x="47" y="154" width="2" height="1" fill="#000"/><rect x="47" y="164" width="2" height="1" fill="#000"/><rect x="47" y="173" width="2" height="1" fill="#000"/><rect x="47" y="183" width="2" height="1" fill="#000"/><rect x="46" y="192" width="3" height="1" fill="#000"/><rect x="47" y="202" width="2" height="1" fill="#000"/><rect x="47" y="211" width="2" height="1" fill="#000"/><rect x="47" y="221" width="2" height="1" fill="#000"/><rect x="47" y="230" width="2" height="1" fill="#000"/><rect x="44" y="239" width="5" height="1" fill="#000"/><rect x="47" y="249" width="2" height="1" fill="#000"/><rect x="47" y="258" width="2" height="1" fill="#000"/><rect x="47" y="268" width="2" height="1" fill="#000"/><rect x="47" y="277" width="2" height="1" fill="#000"/><rect x="46" y="287" width="3" height="1" fill="#000"/><rect x="47" y="296" width="2" height="1" fill="#000"/><rect x="47" y="305" width="2" height="1" fill="#000"/><rect x="47" y="315" width="2" height="1" fill="#000"/><rect x="47" y="324" width="2" height="1" fill="#000"/><rect x="44" y="334" width="5" height="1" fill="#000"/><rect x="47" y="343" width="2" height="1" fill="#000"/><rect x="47" y="353" width="2" height="1" fill="#000"/><rect x="47" y="362" width="2" height="1" fill="#000"/><rect x="47" y="372" width="2" height="1" fill="#000"/><rect x="46" y="381" width="3" height="1" fill="#000"/><rect x="47" y="390" width="2" height="1" fill="#000"/><rect x="47" y="400" width="2" height="1" fill="#000"/><rect x="47" y="409" width="2" height="1" fill="#000"/><rect x="47" y="419" width="2" height="1" fill="#000"/><rect x="44" y="428" width="5" height="1" fill="#000"/><rect x="47" y="438" width="2" height="1" fill="#000"/><rect x="47" y="447" width="2" height="1" fill="#000"/><rect x="47" y="457" width="2" height="1" fill="#000"/><rect x="47" y="466" width="2" height="1" fill="#000"/><rect x="46" y="475" width="3" height="1" fill="#000"/><rect x="47" y="485" width="2" height="1" fill="#000"/><rect x="47" y="494" width="2" height="1" fill="#000"/><rect x="47" y="504" width="2" height="1" fill="#000"/><rect x="47" y="513" width="2" height="1" fill="#000"/><rect x="44" y="523" width="5" height="1" fill="#000"/><rect x="47" y="532" width="2" height="1" fill="#000"/><rect x="47" y="541" width="2" height="1" fill="#000"/><rect x="47" y="551" width="2" height="1" fill="#000"/><rect x="47" y="560" width="2" height="1" fill="#000"/><rect x="46" y="570" width="3" height="1" fill="#000"/><rect x="47" y="579" width="2" height="1" fill="#000"/><rect x="47" y="589" width="2" height="1" fill="#000"/><rect x="47" y="598" width="2" height="1" fill="#000"/><rect x="47" y="608" width="2" height="1" fill="#000"/><rect x="44" y="617" width="5" height="1" fill="#000"/><rect x="47" y="626" width="2" height="1" fill="#000"/><rect x="47" y="636" width="2" height="1" fill="#000"/><rect x="47" y="645" width="2" height="1" fill="#000"/><rect x="47" y="655" width="2" height="1" fill="#000"/><rect x="46" y="664" width="3" height="1" fill="#000"/><path d="M37 128.5h2M40.5 128.5h2M44 128.5h2M39.5 126v2M39.5 130v2M39.5 133.5v2" stroke="#000" stroke-width="1"/><path d="M41 130.5 L45 134.5" stroke="#000" stroke-width="1"/><path d="M46 132 V135.5 H42.5Z" fill="#000"/><path d="M33 455.5H48" stroke="#000" stroke-width="1" stroke-dasharray="2 3"/><path d="M826.5 126V137" stroke="#000" stroke-width="1" stroke-dasharray="2 2"/></svg><svg style="position:absolute;left:0;top:0" width="1024" height="738"><path d="M12.5 61 L15.5 58.5 H21 V70.5 H12.5Z" fill="#f2f2f6" stroke="#4a4a6a" stroke-width="1"/><path d="M12.5 65 H21 V70.5 H12.5Z" fill="#dcdce6"/><circle cx="22" cy="60" r="3.2" fill="#2f9a1a"/><path d="M38.5 58.5 H43 L44.5 60 H50 V62 H41 L38.5 70Z" fill="#26305a"/><path d="M38.5 70.5 L41 62.5 H52.5 L50 70.5Z" fill="#e9e9f0" stroke="#3a3f66" stroke-width="1"/><rect x="65" y="59.5" width="11.5" height="11" fill="#c8c6bc"/><rect x="67" y="60.5" width="7" height="4" fill="#dedcd2"/><rect x="68.5" y="66.5" width="4" height="4" fill="#dedcd2"/><rect x="93.5" y="57" width="7" height="7" fill="#fff" stroke="#9ec9c9" stroke-width="1"/><rect x="90.5" y="64.5" width="13" height="6" fill="#f1efe4" stroke="#3b3b5c" stroke-width="1"/><rect x="91" y="64.5" width="12" height="2" fill="#111"/><rect x="101" y="68" width="1" height="1" fill="#e0c000"/><circle cx="127" cy="60" r="2.6" fill="none" stroke="#5a5e8a" stroke-width="1.3"/><circle cx="127" cy="66.8" r="2.6" fill="none" stroke="#5a5e8a" stroke-width="1.3"/><path d="M129 61.5 L140 67" stroke="#333" stroke-width="1.6"/><path d="M129 65.3 L140 59" stroke="#8a8a8a" stroke-width="1.6"/><rect x="151.5" y="58.5" width="8" height="10" fill="#f4f8f8" stroke="#9cc8c8"/><rect x="156.5" y="61.5" width="8" height="10" fill="#f6f6fb" stroke="#3b3b5c"/><path d="M158 64H161M158 66H163M158 68H163" stroke="#3b3b5c" stroke-width="0.9"/><rect x="177" y="59" width="9" height="11" fill="#5a4632"/><path d="M178 58 H185 L184 61 H179Z" fill="#a9d2d2"/><rect x="182.5" y="62.5" width="8" height="9" fill="#f6f6fb" stroke="#3b3b5c"/><path d="M184 65H187M184 67H189M184 69H189" stroke="#3b3b5c" stroke-width="0.9"/><path d="M211.5 62 L217 56 V59.5 C225 59.5 228 63 226 68 C225 70 223 71 221.5 71.5 C224 68 223 64.5 217 64.5 V68Z" fill="#c4c2ba"/><path d="M267.5 62 L262 56 V59.5 C254 59.5 251 63 253 68 C254 70 256 71 257.5 71.5 C255 68 256 64.5 262 64.5 V68Z" fill="#c4c2ba"/><path d="M237 63 H242.5 L239.75 66Z" fill="#a09c8a"/><path d="M278 63 H283.5 L280.75 66Z" fill="#a09c8a"/><rect x="302" y="56" width="16" height="16" fill="#5a1e88"/><path d="M304 58 C308 58 311 61 310 64 L314 66 C313 69 315 70 316 71 C312 70 309 68 309 66 L306 64 C307 62 305 60 304 58Z" fill="#fff"/><rect x="346.5" y="57.5" width="6" height="9" fill="#f0f4f4" stroke="#3b3b5c"/><rect x="337" y="64" width="8" height="8" fill="#272c55"/><rect x="338.5" y="65" width="5" height="3" fill="#dcdcea"/><rect x="339.5" y="61" width="8" height="2" fill="#d01010"/><path d="M347 59.5 L350 62 L347 64.5Z" fill="#d01010"/><rect x="363.5" y="57.5" width="6" height="9" fill="#f0f4f4" stroke="#3b3b5c"/><rect x="371" y="64" width="8" height="8" fill="#272c55"/><rect x="372.5" y="65" width="5" height="3" fill="#dcdcea"/><rect x="367" y="61" width="8" height="2" fill="#d01010"/><path d="M374.5 59.5 L377.5 62 L374.5 64.5Z" fill="#d01010"/><rect x="399.5" y="56.5" width="12.5" height="9.5" fill="#e2e2ea" stroke="#3b3b5c"/><rect x="400" y="57" width="12" height="2" fill="#111"/><circle cx="406" cy="69" r="2.6" fill="#ff5a10"/><circle cx="406.5" cy="70" r="1.2" fill="#ffd000"/><path d="M423.5 63 H429 L426.25 66Z" fill="#000"/><rect x="439.5" y="57.5" width="14.5" height="14" fill="#fff" stroke="#4a4a6a"/><rect x="439.5" y="57.5" width="14.5" height="2" fill="#6a6a8a"/><path d="M441 63 H444 L445 64.5 H448 V69.5 H441Z" fill="#5a5ea8"/><rect x="447" y="61.5" width="5" height="6" fill="#e8f0f0" stroke="#5a8a8a" stroke-width="0.8"/><line x1="119.6" y1="99.6" x2="123.3" y2="104" stroke="#2d2d4a" stroke-width="2.4" stroke-linecap="round"/><circle cx="116.3" cy="96.3" r="5.5" fill="#f4f4fa" stroke="#3b3b5c" stroke-width="1.3"/><path d="M112.0 96.8 H120.6 A4.3 4.3 0 0 1 112.0 96.8Z" fill="#c3c3d8"/><path d="M113.3 96.3H119.3M116.3 93.3V99.3" stroke="#222" stroke-width="1.8"/><line x1="146.0" y1="99.6" x2="150" y2="104" stroke="#2d2d4a" stroke-width="2.4" stroke-linecap="round"/><circle cx="142.7" cy="96.3" r="5.5" fill="#f4f4fa" stroke="#3b3b5c" stroke-width="1.3"/><path d="M138.39999999999998 96.8 H147.0 A4.3 4.3 0 0 1 138.39999999999998 96.8Z" fill="#c3c3d8"/><path d="M139.7 96.3H145.7" stroke="#666" stroke-width="1.8"/><line x1="181.0" y1="100.0" x2="185" y2="104.5" stroke="#2d2d4a" stroke-width="2.4" stroke-linecap="round"/><circle cx="177.3" cy="96.3" r="6.2" fill="#f4f4fa" stroke="#3b3b5c" stroke-width="1.3"/><path d="M172.3 96.8 H182.3 A5.0 5.0 0 0 1 172.3 96.8Z" fill="#c3c3d8"/><path d="M174 94h1M177 93h1M180 94h1M174 97h1M180 97h1M174 100h1M177 100h1M180 100h1" stroke="#333" stroke-width="1"/><line x1="207.3" y1="100.2" x2="211" y2="105" stroke="#2d2d4a" stroke-width="2.4" stroke-linecap="round"/><circle cx="203.6" cy="96.5" r="6.2" fill="#f4f4fa" stroke="#3b3b5c" stroke-width="1.3"/><path d="M198.6 97.0 H208.6 A5.0 5.0 0 0 1 198.6 97.0Z" fill="#c3c3d8"/><rect x="200.5" y="96" width="4" height="3.5" fill="none" stroke="#555" stroke-width="1"/><rect x="203" y="93.5" width="4" height="3.5" fill="#f4f4fa" stroke="#555" stroke-width="1"/><path d="M232.5 92.5 L234.5 90.5 H240.5 V101.5 H232.5Z" fill="#e6e6ee" stroke="#5a5a7a"/><line x1="243.1" y1="101.1" x2="247.5" y2="105.5" stroke="#2d2d4a" stroke-width="2.4" stroke-linecap="round"/><circle cx="240.8" cy="98.8" r="3.8" fill="#f4f4fa" stroke="#3b3b5c" stroke-width="1.3"/><path d="M238.2 99.3 H243.40000000000003 A2.5999999999999996 2.5999999999999996 0 0 1 238.2 99.3Z" fill="#c3c3d8"/><path d="M260.5 92.2H271.5M260.5 90.5V94M271.5 90.5V94" stroke="#222" stroke-width="1.4"/><line x1="268.6" y1="101.8" x2="272.5" y2="105.5" stroke="#2d2d4a" stroke-width="2.4" stroke-linecap="round"/><circle cx="265.8" cy="99" r="4.6" fill="#f4f4fa" stroke="#3b3b5c" stroke-width="1.3"/><path d="M262.4 99.5 H269.20000000000005 A3.3999999999999995 3.3999999999999995 0 0 1 262.4 99.5Z" fill="#c3c3d8"/><path d="M285.3 91.5V103.5M283.5 91.5H287M283.5 103.5H287" stroke="#222" stroke-width="1.4"/><line x1="294.4" y1="101.0" x2="299" y2="105.5" stroke="#2d2d4a" stroke-width="2.4" stroke-linecap="round"/><circle cx="291.6" cy="98.2" r="4.6" fill="#f4f4fa" stroke="#3b3b5c" stroke-width="1.3"/><path d="M288.2 98.7 H295.00000000000006 A3.3999999999999995 3.3999999999999995 0 0 1 288.2 98.7Z" fill="#c3c3d8"/><path d="M649 58 L650.5 59.5 L653 56.5M649 63 L650.5 64.5 L653 61.5M649 68 L650.5 69.5 L653 66.5" stroke="#3a9a2a" stroke-width="1.1" fill="none"/><path d="M653 59.5H660M653 64.5H660M653 69.5H660" stroke="#6a6a8a" stroke-width="1"/><path d="M11.5 129.5 L19.5 137.5 L16 137.5 L18.5 142 L16.5 143 L14 138.5 L11.5 141Z" fill="#f4f4fb" stroke="#5d6290" stroke-width="1"/><path d="M25 142 V147 H20Z" fill="#000"/><path d="M12 155 C9 159 9 165 13 169" stroke="#7a7ea8" fill="none" stroke-width="1"/><rect x="9.5" y="160" width="3" height="3" fill="#fff" stroke="#333" stroke-width="0.8"/><path d="M14 161 L20 165 L16 168Z" fill="#222"/><path d="M25 168 V173 H20Z" fill="#000"/><path d="M11 182 V193 H21M8 185 H18 V196" stroke="#3b3b5c" fill="none" stroke-width="2"/><path d="M10 195 L21 182" stroke="#3b3b5c" stroke-width="1.2"/><path d="M25 194 V199 H20Z" fill="#000"/><rect x="3.5" y="202.5" width="23" height="24" rx="2" fill="#f3f2ec" stroke="#2d4d7c" stroke-width="1.2"/><line x1="16.9" y1="217.8" x2="21.5" y2="222.5" stroke="#2d2d4a" stroke-width="2.4" stroke-linecap="round"/><circle cx="13.4" cy="214.3" r="5.8" fill="#f4f4fa" stroke="#3b3b5c" stroke-width="1.3"/><path d="M8.8 214.8 H18.0 A4.6 4.6 0 0 1 8.8 214.8Z" fill="#c3c3d8"/><path d="M25 220 V225 H20Z" fill="#000"/><path d="M9 235H14M11.5 232.5V237.5" stroke="#5d6290" stroke-width="1"/><path d="M11 243 L13 246 L15 241 L17 245 L19 242 L21 246" stroke="#3b3b5c" fill="none" stroke-width="1.3"/><path d="M25 246 V251 H20Z" fill="#000"/><path d="M8 261 L11 258 L14 261 L11 264Z" fill="#fff" stroke="#666" stroke-width="0.8"/><path d="M9 261.5 H13 L11 263.5Z" fill="#f08a10"/><rect x="12.5" y="262.5" width="7" height="7" fill="#f08a10" stroke="#7a4a10" stroke-width="0.8"/><rect x="14.5" y="265.5" width="7" height="6" fill="none" stroke="#5d6290" stroke-width="1.1"/><path d="M25 272 V277 H20Z" fill="#000"/><rect x="9.5" y="287.5" width="12" height="10" fill="#e4e4ee" stroke="#4a4e7a" stroke-width="1"/><rect x="10" y="288" width="11" height="4" fill="#fafafc"/><path d="M25 298 V303 H20Z" fill="#000"/><circle cx="15" cy="319" r="6" fill="#e4e4ee" stroke="#4a4e7a" stroke-width="1"/><path d="M25 324 V329 H20Z" fill="#000"/><path d="M11.5 340 H18.5 L22 345 L18.5 350 H11.5 L8 345Z" fill="#e4e4ee" stroke="#4a4e7a" stroke-width="1"/><path d="M25 350 V355 H20Z" fill="#000"/><circle cx="15" cy="367" r="3.5" fill="#e4e4ee" stroke="#4a4e7a"/><path d="M8.5 369 L14 375 H8.5Z" fill="#e4e4ee" stroke="#4a4e7a"/><rect x="13.5" y="370.5" width="7" height="6" fill="#e4e4ee" stroke="#4a4e7a"/><path d="M25 376 V381 H20Z" fill="#000"/><path d="M9 404 L13.5 390 H16.5 L21 404 H18 L17 400 H13 L12 404Z M13.8 397 H16.2 L15 393Z" fill="#e8e8f2" stroke="#5d6290" stroke-width="1"/><rect x="8.5" y="417.5" width="13" height="11" fill="#e8e8f2" stroke="#5d6290"/><path d="M8.5 421H21.5M8.5 424.5H21.5M12.5 417.5V428.5M17 417.5V428.5" stroke="#5d6290" stroke-width="0.8"/><rect x="9" y="418" width="12" height="3" fill="#a8acd0"/><path d="M9 454 L20 444" stroke="#3b3b5c" stroke-width="1.6"/><path d="M7.5 451.5 L11 456M18 442 L21.5 446.5" stroke="#3b3b5c" stroke-width="1.6"/><path d="M25 454 V459 H20Z" fill="#000"/><path d="M12 469 L17 477" stroke="#4a4e7a" stroke-width="1"/><rect x="9.5" y="466" width="4" height="4" fill="#f08010" stroke="#b05000" stroke-width="0.8"/><rect x="16.5" y="476" width="4" height="4" fill="#f08010" stroke="#b05000" stroke-width="0.8"/><path d="M25 480 V485 H20Z" fill="#000"/><rect x="8.5" y="492" width="6" height="6" fill="#fff" stroke="#4a4e7a" stroke-width="0.9"/><rect x="11.5" y="495" width="6" height="6" fill="#fcd070" stroke="#c08020" stroke-width="0.9"/><rect x="14.5" y="499" width="7" height="7" fill="#f07010" stroke="#a04000" stroke-width="0.9"/><path d="M25 506 V511 H20Z" fill="#000"/><rect x="7" y="526" width="8" height="8" fill="#f07a10"/><rect x="8" y="527" width="2" height="2" fill="#fde0b0"/><rect x="11" y="531" width="2" height="2" fill="#fde0b0"/><path d="M11 531 L18.5 523.5" stroke="#8a9ab8" stroke-width="2.4"/><path d="M11 531 L18.5 523.5" stroke="#e8f0f8" stroke-width="0.8"/><path d="M16 522 L20 526" stroke="#2a2a44" stroke-width="2"/><circle cx="20.5" cy="521.5" r="2.6" fill="#2a2a44"/><path d="M25 532 V537 H20Z" fill="#000"/><path d="M15 544 Q19.8 551 17.5 557 H12.5 Q10.2 551 15 544Z" fill="#f4f4fb" stroke="#4a4e7a" stroke-width="1"/><path d="M15 549V555" stroke="#4a4e7a" stroke-width="0.8"/><circle cx="15" cy="552" r="1" fill="#4a4e7a"/><rect x="11" y="557.5" width="8" height="2.2" fill="#2d2d4a"/><path d="M25 558 V563 H20Z" fill="#000"/><path d="M8 579 L14 573 L20 579 L14 585Z" fill="#fff" stroke="#4a4e7a" stroke-width="1.2"/><path d="M9 580 L19 580 L14 585Z" fill="#f08a10"/><path d="M19 579 Q22 580 21 585" stroke="#f08a10" stroke-width="1.4" fill="none"/><path d="M13 572 L15 570" stroke="#4a4e7a"/><path d="M25 584 V589 H20Z" fill="#000"/><path d="M9 601 L12.5 597.5 L16 601 L12.5 604.5Z" fill="#fff" stroke="#4a4e7a" stroke-width="1"/><path d="M10 601.5 H15 L12.5 604Z" fill="#f08a10"/><path d="M14 610 L17 605 H19 L22 610Z" fill="#f6b838"/><path d="M25 610 V615 H20Z" fill="#000"/><path d="M54.5 653.5 H60 L62.5 656 V665.5 H54.5Z" fill="#fff" stroke="#000"/><path d="M60 653.5V656H62.5" fill="none" stroke="#000" stroke-width="0.8"/><path d="M55.5 660.5H61.5M58.5 657.5V663.5" stroke="#000" stroke-width="1.3"/><path d="M208.5 653.5 H214 L216.5 656 V665.5 H208.5Z" fill="#fff" stroke="#000"/><path d="M214 653.5V656H216.5" fill="none" stroke="#000" stroke-width="0.8"/><path d="M209.5 660.5H215.5M212.5 657.5V663.5" stroke="#000" stroke-width="1.3"/><path d="M72.5 655V664" stroke="#8a8a8a" stroke-width="1.3"/><path d="M79 655 L74 659.5 L79 664Z" fill="#8a8a8a"/><path d="M96 655 L91 659.5 L96 664Z" fill="#8a8a8a"/><path d="M176 655 L181 659.5 L176 664Z" fill="#8a8a8a"/><path d="M198.5 655V664" stroke="#8a8a8a" stroke-width="1.3"/><path d="M192 655 L197 659.5 L192 664Z" fill="#8a8a8a"/><path d="M34 672v1M34 676v1M34 680v1M34 684v1" stroke="#999" stroke-width="1"/><circle cx="47" cy="679" r="6.5" fill="#f4f4f4" stroke="#b0b0b0"/><path d="M45 676 L49.5 679 L45 682Z" fill="#111"/><path d="M58.5 686.5 L65 680" stroke="#4a9a9a" stroke-width="2.2"/><path d="M63 678 L68 673 L71 676 L66 681Z" fill="#2a2a44"/><path d="M62 677 L67 682" stroke="#2a2a44" stroke-width="1.6"/><rect x="74.5" y="670.5" width="15" height="15" fill="#fff" stroke="#000"/><path d="M75 671L89 685M89 671L75 685" stroke="#000" stroke-width="0.9"/><line x1="992" y1="659" x2="999" y2="665" stroke="#333" stroke-width="2"/><circle cx="991" cy="658" r="4.5" fill="#fff" stroke="#333" stroke-width="1.2"/><circle cx="991" cy="658" r="1.8" fill="none" stroke="#333" stroke-width="1"/><path d="M1010.5 676V686" stroke="#000" stroke-width="1.4"/><path d="M1017 676 L1012 681 L1017 686Z" fill="#000"/><rect x="708.5" y="693.5" width="12" height="9" rx="1" fill="#e6e6ee" stroke="#8a8aa8"/><rect x="710.5" y="695.5" width="8" height="5" fill="#a8b0d8"/><circle cx="714.5" cy="698" r="1.5" fill="#fff" stroke="#d04040" stroke-width="0.8"/><path d="M711 704.5H718" stroke="#8a8aa8"/><path d="M781 700 L787 694 L793 700 L787 706Z" fill="#fff" stroke="#4a4e7a" stroke-width="1.1"/><path d="M782 701 H792 L787 706Z" fill="#f08a10"/><path d="M792 700 Q795 701 794.5 706" stroke="#f08a10" stroke-width="1.3" fill="none"/><path d="M788.5 715 C791.5 718 791.5 721 790.5 724 H786.5 C785.5 721 785.5 718 788.5 715Z" fill="#f4f4fb" stroke="#4a4e7a"/><rect x="785" y="725" width="7" height="2" fill="#2d2d4a"/><rect x="999.5" y="697.5" width="15" height="14" rx="1" fill="#f0f0f0" stroke="#c8c8c8"/><circle cx="1007" cy="702" r="2.8" fill="#e04a10"/><path d="M1001.5 711 Q1002 705.5 1007 705.5 Q1012 705.5 1012.5 711Z" fill="#e04a10"/><path d="M1016 709 V714 H1011Z" fill="#000"/></svg></body></html>
